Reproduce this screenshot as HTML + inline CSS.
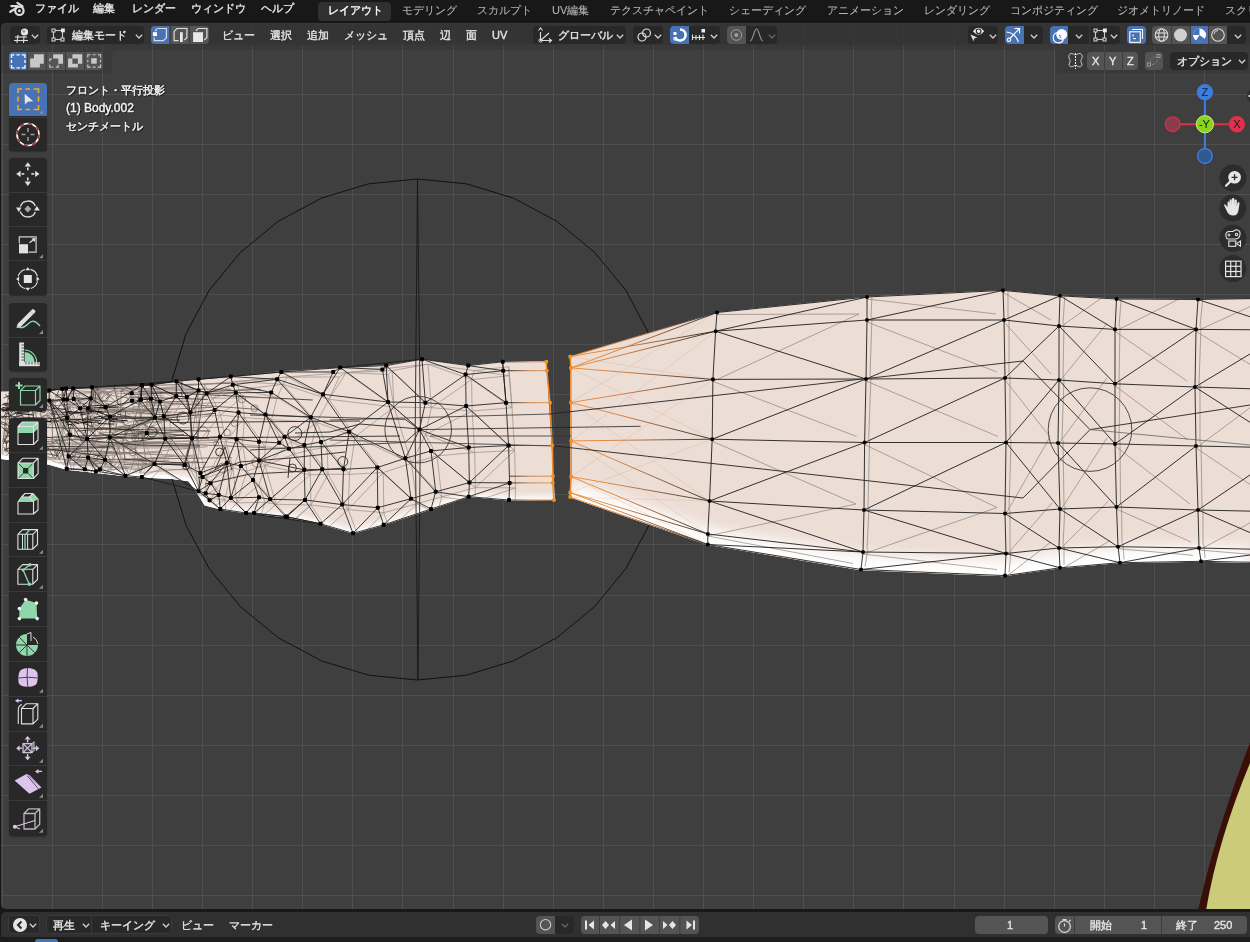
<!DOCTYPE html><html><head><meta charset="utf-8"><style>
html,body{margin:0;padding:0;}
body{width:1250px;height:942px;overflow:hidden;position:relative;background:#181818;font-family:"Liberation Sans", sans-serif;}
svg{position:absolute;left:0;top:0;overflow:visible}
</style></head><body>
<div style="position:absolute;left:1px;top:23px;width:1249px;height:886px;background:#3f3f3f;border-radius:5px 0 0 5px;"></div>
<svg width="1250" height="942" style="left:0;top:0"><defs><clipPath id="vp"><path d="M6,23 H1250 V909 H6 Q1,909 1,904 V28 Q1,23 6,23 Z"/></clipPath></defs><g clip-path="url(#vp)"><rect x="2" y="23" width="1" height="886" fill="#4f4f4f"/><rect x="52" y="23" width="1" height="886" fill="#4f4f4f"/><rect x="102" y="23" width="1" height="886" fill="#4f4f4f"/><rect x="152" y="23" width="1" height="886" fill="#4f4f4f"/><rect x="202" y="23" width="1" height="886" fill="#4f4f4f"/><rect x="252" y="23" width="1" height="886" fill="#4f4f4f"/><rect x="302" y="23" width="1" height="886" fill="#4f4f4f"/><rect x="352" y="23" width="1" height="886" fill="#4f4f4f"/><rect x="402" y="23" width="1" height="886" fill="#4f4f4f"/><rect x="453" y="23" width="1" height="886" fill="#4f4f4f"/><rect x="503" y="23" width="1" height="886" fill="#4f4f4f"/><rect x="553" y="23" width="1" height="886" fill="#4f4f4f"/><rect x="603" y="23" width="1" height="886" fill="#4f4f4f"/><rect x="653" y="23" width="1" height="886" fill="#4f4f4f"/><rect x="703" y="23" width="1" height="886" fill="#4f4f4f"/><rect x="753" y="23" width="1" height="886" fill="#4f4f4f"/><rect x="803" y="23" width="1" height="886" fill="#4f4f4f"/><rect x="853" y="23" width="1" height="886" fill="#4f4f4f"/><rect x="903" y="23" width="1" height="886" fill="#4f4f4f"/><rect x="954" y="23" width="1" height="886" fill="#4f4f4f"/><rect x="1004" y="23" width="1" height="886" fill="#4f4f4f"/><rect x="1054" y="23" width="1" height="886" fill="#4f4f4f"/><rect x="1104" y="23" width="1" height="886" fill="#4f4f4f"/><rect x="1154" y="23" width="1" height="886" fill="#4f4f4f"/><rect x="1204" y="23" width="1" height="886" fill="#4f4f4f"/><rect x="1254" y="23" width="1" height="886" fill="#4f4f4f"/><rect x="1" y="44" width="1249" height="1" fill="#4f4f4f"/><rect x="1" y="94" width="1249" height="1" fill="#4f4f4f"/><rect x="1" y="144" width="1249" height="1" fill="#4f4f4f"/><rect x="1" y="194" width="1249" height="1" fill="#4f4f4f"/><rect x="1" y="244" width="1249" height="1" fill="#4f4f4f"/><rect x="1" y="294" width="1249" height="1" fill="#4f4f4f"/><rect x="1" y="344" width="1249" height="1" fill="#4f4f4f"/><rect x="1" y="394" width="1249" height="1" fill="#4f4f4f"/><rect x="1" y="444" width="1249" height="1" fill="#4f4f4f"/><rect x="1" y="494" width="1249" height="1" fill="#4f4f4f"/><rect x="1" y="544" width="1249" height="1" fill="#4f4f4f"/><rect x="1" y="595" width="1249" height="1" fill="#4f4f4f"/><rect x="1" y="645" width="1249" height="1" fill="#4f4f4f"/><rect x="1" y="695" width="1249" height="1" fill="#4f4f4f"/><rect x="1" y="745" width="1249" height="1" fill="#4f4f4f"/><rect x="1" y="795" width="1249" height="1" fill="#4f4f4f"/><rect x="1" y="845" width="1249" height="1" fill="#4f4f4f"/><rect x="1" y="895" width="1249" height="1" fill="#4f4f4f"/><polygon points="417.5,179.0 368.6,183.8 321.6,198.1 278.3,221.2 240.4,252.4 209.2,290.3 186.1,333.6 171.8,380.6 167.0,429.5 171.8,478.4 186.1,525.4 209.2,568.7 240.4,606.6 278.3,637.8 321.6,660.9 368.6,675.2 417.5,680.0 466.4,675.2 513.4,660.9 556.7,637.8 594.6,606.6 625.8,568.7 648.9,525.4 663.2,478.4 668.0,429.5 663.2,380.6 648.9,333.6 625.8,290.3 594.6,252.4 556.7,221.2 513.4,198.1 466.4,183.8" fill="none" stroke="#111" stroke-width="1"/><polyline points="417.5,179 415.2,430 417.9,680 420.4,430 417.5,179" fill="none" stroke="#151515" stroke-width="0.85"/><defs><linearGradient id="wl" x1="0" y1="0" x2="0" y2="1"><stop offset="0" stop-color="#ebdfd9"/><stop offset="0.78" stop-color="#ebdfd9"/><stop offset="0.92" stop-color="#f8f4f2"/><stop offset="1" stop-color="#ffffff"/></linearGradient><linearGradient id="wr" gradientUnits="userSpaceOnUse" x1="0" y1="290" x2="0" y2="576"><stop offset="0" stop-color="#ebdfd9"/><stop offset="0.78" stop-color="#ebdfd9"/><stop offset="0.86" stop-color="#f6f0ed"/><stop offset="0.95" stop-color="#ffffff"/></linearGradient><linearGradient id="og" gradientUnits="userSpaceOnUse" x1="571" y1="0" x2="712" y2="0"><stop offset="0" stop-color="#f08a2a"/><stop offset="0.35" stop-color="#d27a3a"/><stop offset="1" stop-color="#222"/></linearGradient><linearGradient id="og2" gradientUnits="userSpaceOnUse" x1="509" y1="0" x2="552" y2="0"><stop offset="0" stop-color="#222"/><stop offset="0.5" stop-color="#c87a40"/><stop offset="1" stop-color="#f08a2a"/></linearGradient></defs><polygon points="0,391.6 48.3,390.4 92,387.2 141.8,385.3 176.3,381.3 198.5,379.3 230.8,376.2 281.2,371.2 340.2,367.6 386.2,365 422,359.2 468.2,365.3 502.7,361.4 546.3,361 555,500 509,500.5 468.7,497 431,509.5 383.7,525.3 353,533.8 320.5,524.3 285.6,517.2 246,513.5 220.7,509.6 204.6,505.6 194.5,489 188.4,481.2 172.3,479.1 141.8,477.5 125.5,476.2 66.7,469.8 48.3,464.5 0,459" fill="#ecddd5"/><polygon points="570.2,356.6 717,312.2 867.5,296.6 1002.8,290 1060.5,295.4 1116.6,298.5 1198,299 1250,298.5 1250,563 1201,561.8 1118,563.2 1060.5,568.3 1004.5,576.2 860.7,570.2 707.8,545 570.2,497.5" fill="#ecddd5"/><defs><clipPath id="cl"><polygon points="0,391.6 48.3,390.4 92,387.2 141.8,385.3 176.3,381.3 198.5,379.3 230.8,376.2 281.2,371.2 340.2,367.6 386.2,365 422,359.2 468.2,365.3 502.7,361.4 546.3,361 555,500 509,500.5 468.7,497 431,509.5 383.7,525.3 353,533.8 320.5,524.3 285.6,517.2 246,513.5 220.7,509.6 204.6,505.6 194.5,489 188.4,481.2 172.3,479.1 141.8,477.5 125.5,476.2 66.7,469.8 48.3,464.5 0,459"/></clipPath><clipPath id="cr"><polygon points="570.2,356.6 717,312.2 867.5,296.6 1002.8,290 1060.5,295.4 1116.6,298.5 1198,299 1250,298.5 1250,563 1201,561.8 1118,563.2 1060.5,568.3 1004.5,576.2 860.7,570.2 707.8,545 570.2,497.5"/></clipPath><filter id="bl" x="-10%" y="-50%" width="120%" height="200%"><feGaussianBlur stdDeviation="3"/></filter><filter id="bl2" x="-10%" y="-50%" width="120%" height="200%"><feGaussianBlur stdDeviation="7"/></filter></defs><g clip-path="url(#cr)"><polyline points="570.2,494.5 707.8,542 860.7,567.2 1004.5,573.2 1060.5,565.3 1118,560.2 1201,558.8 1250,560" fill="none" stroke="#fff" stroke-width="26" filter="url(#bl2)"/></g><g clip-path="url(#cl)"><line x1="100.7" y1="399.3" x2="107.3" y2="394.0" stroke="#7d746f" stroke-width="0.7"/><line x1="121.0" y1="462.8" x2="111.8" y2="462.6" stroke="#b0a6a1" stroke-width="0.7"/><line x1="107.4" y1="419.7" x2="110.0" y2="416.5" stroke="#9c928d" stroke-width="0.7"/><line x1="46.5" y1="404.9" x2="49.2" y2="400.6" stroke="#b0a6a1" stroke-width="0.7"/><line x1="101.0" y1="462.6" x2="105.0" y2="459.8" stroke="#9c928d" stroke-width="0.7"/><line x1="13.3" y1="459.3" x2="2.0" y2="454.1" stroke="#b0a6a1" stroke-width="0.7"/><line x1="28.1" y1="424.9" x2="28.7" y2="414.9" stroke="#b0a6a1" stroke-width="0.7"/><line x1="90.7" y1="398.6" x2="88.1" y2="408.2" stroke="#9c928d" stroke-width="0.7"/><line x1="113.7" y1="439.6" x2="124.7" y2="437.9" stroke="#b0a6a1" stroke-width="0.7"/><line x1="125.0" y1="425.2" x2="117.4" y2="419.7" stroke="#9c928d" stroke-width="0.7"/><line x1="121.1" y1="444.3" x2="118.9" y2="446.8" stroke="#9c928d" stroke-width="0.7"/><line x1="76.1" y1="420.3" x2="88.0" y2="417.9" stroke="#7d746f" stroke-width="0.7"/><line x1="93.9" y1="390.2" x2="92.2" y2="388.2" stroke="#b0a6a1" stroke-width="0.7"/><line x1="78.5" y1="453.7" x2="74.4" y2="450.1" stroke="#b0a6a1" stroke-width="0.7"/><line x1="45.1" y1="419.5" x2="43.4" y2="416.1" stroke="#b0a6a1" stroke-width="0.7"/><line x1="49.2" y1="390.4" x2="49.2" y2="400.6" stroke="#9c928d" stroke-width="0.7"/><line x1="116.1" y1="388.2" x2="119.8" y2="387.4" stroke="#9c928d" stroke-width="0.7"/><line x1="141.8" y1="385.3" x2="151.7" y2="384.7" stroke="#5c5450" stroke-width="0.7"/><line x1="7.5" y1="409.5" x2="12.0" y2="400.8" stroke="#9c928d" stroke-width="0.7"/><line x1="38.9" y1="406.0" x2="35.6" y2="412.3" stroke="#9c928d" stroke-width="0.7"/><line x1="80.2" y1="460.8" x2="66.7" y2="468.7" stroke="#5c5450" stroke-width="0.7"/><line x1="96.0" y1="471.2" x2="100.0" y2="469.3" stroke="#9c928d" stroke-width="0.7"/><line x1="129.1" y1="474.7" x2="138.6" y2="468.3" stroke="#5c5450" stroke-width="0.7"/><line x1="94.1" y1="427.8" x2="101.9" y2="417.1" stroke="#b0a6a1" stroke-width="0.7"/><line x1="7.5" y1="409.5" x2="9.2" y2="414.5" stroke="#5c5450" stroke-width="0.7"/><line x1="134.5" y1="419.5" x2="120.6" y2="406.4" stroke="#9c928d" stroke-width="0.7"/><line x1="3.0" y1="441.9" x2="15.5" y2="439.2" stroke="#5c5450" stroke-width="0.7"/><line x1="55.5" y1="440.8" x2="56.0" y2="440.8" stroke="#7d746f" stroke-width="0.7"/><line x1="12.0" y1="400.8" x2="13.8" y2="393.3" stroke="#5c5450" stroke-width="0.7"/><line x1="38.9" y1="406.0" x2="36.3" y2="400.9" stroke="#b0a6a1" stroke-width="0.7"/><line x1="120.6" y1="406.4" x2="116.1" y2="388.2" stroke="#b0a6a1" stroke-width="0.7"/><line x1="99.3" y1="467.4" x2="101.0" y2="462.6" stroke="#9c928d" stroke-width="0.7"/><line x1="12.9" y1="431.2" x2="18.6" y2="436.2" stroke="#9c928d" stroke-width="0.7"/><line x1="102.3" y1="471.3" x2="100.0" y2="469.3" stroke="#5c5450" stroke-width="0.7"/><line x1="131.8" y1="393.2" x2="141.8" y2="385.3" stroke="#9c928d" stroke-width="0.7"/><line x1="113.7" y1="439.6" x2="106.0" y2="453.4" stroke="#5c5450" stroke-width="0.7"/><line x1="101.9" y1="417.1" x2="105.6" y2="407.2" stroke="#b0a6a1" stroke-width="0.7"/><line x1="130.9" y1="388.2" x2="121.5" y2="388.2" stroke="#9c928d" stroke-width="0.7"/><line x1="154.5" y1="464.0" x2="198.5" y2="491.2" stroke="#b0a6a1" stroke-width="0.7"/><line x1="138.6" y1="468.3" x2="134.7" y2="458.3" stroke="#b0a6a1" stroke-width="0.7"/><line x1="107.8" y1="466.6" x2="111.8" y2="462.6" stroke="#9c928d" stroke-width="0.7"/><line x1="61.6" y1="398.2" x2="63.6" y2="399.5" stroke="#b0a6a1" stroke-width="0.7"/><line x1="94.3" y1="465.1" x2="101.0" y2="462.6" stroke="#7d746f" stroke-width="0.7"/><line x1="151.0" y1="398.8" x2="160.0" y2="401.5" stroke="#b0a6a1" stroke-width="0.7"/><line x1="52.0" y1="423.2" x2="40.3" y2="433.6" stroke="#7d746f" stroke-width="0.7"/><line x1="83.9" y1="442.3" x2="74.4" y2="450.1" stroke="#b0a6a1" stroke-width="0.7"/><line x1="119.1" y1="409.5" x2="117.4" y2="419.7" stroke="#7d746f" stroke-width="0.7"/><line x1="20.4" y1="404.4" x2="33.8" y2="395.4" stroke="#b0a6a1" stroke-width="0.7"/><line x1="84.6" y1="461.8" x2="84.8" y2="469.3" stroke="#9c928d" stroke-width="0.7"/><line x1="135.0" y1="438.2" x2="142.9" y2="438.4" stroke="#9c928d" stroke-width="0.7"/><line x1="107.4" y1="419.7" x2="113.0" y2="421.0" stroke="#7d746f" stroke-width="0.7"/><line x1="134.5" y1="419.5" x2="125.0" y2="425.2" stroke="#9c928d" stroke-width="0.7"/><line x1="117.4" y1="419.7" x2="115.1" y2="432.1" stroke="#5c5450" stroke-width="0.7"/><line x1="134.5" y1="419.5" x2="120.9" y2="416.5" stroke="#9c928d" stroke-width="0.7"/><line x1="101.0" y1="462.6" x2="88.1" y2="457.6" stroke="#9c928d" stroke-width="0.7"/><line x1="141.8" y1="477.0" x2="154.5" y2="464.0" stroke="#5c5450" stroke-width="0.7"/><line x1="71.6" y1="457.5" x2="68.6" y2="456.6" stroke="#9c928d" stroke-width="0.7"/><line x1="107.1" y1="403.8" x2="107.3" y2="394.0" stroke="#9c928d" stroke-width="0.7"/><line x1="95.2" y1="465.6" x2="101.0" y2="462.6" stroke="#7d746f" stroke-width="0.7"/><line x1="45.1" y1="419.5" x2="48.3" y2="415.4" stroke="#5c5450" stroke-width="0.7"/><line x1="120.2" y1="442.6" x2="118.9" y2="446.8" stroke="#9c928d" stroke-width="0.7"/><line x1="35.6" y1="412.3" x2="28.7" y2="414.9" stroke="#7d746f" stroke-width="0.7"/><line x1="61.6" y1="398.2" x2="66.1" y2="388.5" stroke="#5c5450" stroke-width="0.7"/><line x1="110.1" y1="437.0" x2="109.8" y2="437.5" stroke="#9c928d" stroke-width="0.7"/><line x1="141.8" y1="385.3" x2="142.0" y2="385.3" stroke="#b0a6a1" stroke-width="0.7"/><line x1="55.5" y1="440.8" x2="55.4" y2="440.0" stroke="#7d746f" stroke-width="0.7"/><line x1="48.3" y1="415.4" x2="55.1" y2="421.3" stroke="#7d746f" stroke-width="0.7"/><line x1="87.6" y1="469.0" x2="96.0" y2="471.2" stroke="#7d746f" stroke-width="0.7"/><line x1="138.1" y1="398.7" x2="141.8" y2="385.3" stroke="#7d746f" stroke-width="0.7"/><line x1="163.8" y1="416.2" x2="192.0" y2="438.2" stroke="#5c5450" stroke-width="0.7"/><line x1="132.7" y1="426.4" x2="140.5" y2="419.2" stroke="#5c5450" stroke-width="0.7"/><line x1="144.8" y1="425.0" x2="146.7" y2="433.0" stroke="#7d746f" stroke-width="0.7"/><line x1="62.3" y1="438.5" x2="70.0" y2="434.7" stroke="#5c5450" stroke-width="0.7"/><line x1="59.2" y1="459.3" x2="63.9" y2="466.7" stroke="#b0a6a1" stroke-width="0.7"/><line x1="79.4" y1="401.9" x2="88.1" y2="408.2" stroke="#5c5450" stroke-width="0.7"/><line x1="91.8" y1="416.1" x2="88.0" y2="417.9" stroke="#7d746f" stroke-width="0.7"/><line x1="165.2" y1="438.8" x2="184.8" y2="465.0" stroke="#7d746f" stroke-width="0.7"/><line x1="37.7" y1="426.9" x2="28.1" y2="424.9" stroke="#5c5450" stroke-width="0.7"/><line x1="28.1" y1="424.9" x2="19.5" y2="411.4" stroke="#5c5450" stroke-width="0.7"/><line x1="146.7" y1="433.0" x2="165.2" y2="438.8" stroke="#b0a6a1" stroke-width="0.7"/><line x1="131.8" y1="393.2" x2="132.1" y2="400.8" stroke="#b0a6a1" stroke-width="0.7"/><line x1="52.6" y1="439.0" x2="55.4" y2="440.0" stroke="#b0a6a1" stroke-width="0.7"/><line x1="129.8" y1="428.4" x2="135.0" y2="438.2" stroke="#7d746f" stroke-width="0.7"/><line x1="76.1" y1="420.3" x2="63.4" y2="428.5" stroke="#9c928d" stroke-width="0.7"/><line x1="13.3" y1="459.3" x2="66.7" y2="468.7" stroke="#b0a6a1" stroke-width="0.7"/><line x1="52.7" y1="444.8" x2="63.1" y2="449.2" stroke="#b0a6a1" stroke-width="0.7"/><line x1="124.7" y1="437.9" x2="120.2" y2="442.6" stroke="#9c928d" stroke-width="0.7"/><line x1="52.8" y1="402.5" x2="63.6" y2="399.5" stroke="#5c5450" stroke-width="0.7"/><line x1="141.1" y1="431.7" x2="142.9" y2="438.4" stroke="#7d746f" stroke-width="0.7"/><line x1="93.9" y1="390.2" x2="91.6" y2="398.7" stroke="#5c5450" stroke-width="0.7"/><line x1="45.1" y1="419.5" x2="52.0" y2="423.2" stroke="#7d746f" stroke-width="0.7"/><line x1="64.7" y1="451.7" x2="74.4" y2="450.1" stroke="#b0a6a1" stroke-width="0.7"/><line x1="54.6" y1="413.4" x2="55.1" y2="421.3" stroke="#7d746f" stroke-width="0.7"/><line x1="163.8" y1="416.2" x2="165.2" y2="438.8" stroke="#b0a6a1" stroke-width="0.7"/><line x1="3.0" y1="441.9" x2="12.9" y2="431.2" stroke="#5c5450" stroke-width="0.7"/><line x1="125.5" y1="428.8" x2="124.7" y2="437.9" stroke="#7d746f" stroke-width="0.7"/><line x1="54.6" y1="413.4" x2="63.6" y2="399.5" stroke="#5c5450" stroke-width="0.7"/><line x1="79.4" y1="401.9" x2="73.7" y2="399.0" stroke="#5c5450" stroke-width="0.7"/><line x1="36.3" y1="400.9" x2="49.2" y2="400.6" stroke="#b0a6a1" stroke-width="0.7"/><line x1="165.2" y1="438.8" x2="154.5" y2="464.0" stroke="#5c5450" stroke-width="0.7"/><line x1="121.0" y1="462.8" x2="112.3" y2="471.8" stroke="#5c5450" stroke-width="0.7"/><line x1="124.7" y1="437.9" x2="121.1" y2="444.3" stroke="#7d746f" stroke-width="0.7"/><line x1="95.9" y1="398.2" x2="94.8" y2="389.6" stroke="#5c5450" stroke-width="0.7"/><line x1="76.1" y1="420.3" x2="63.0" y2="422.5" stroke="#7d746f" stroke-width="0.7"/><line x1="140.3" y1="400.0" x2="141.0" y2="399.4" stroke="#b0a6a1" stroke-width="0.7"/><line x1="44.1" y1="456.3" x2="25.7" y2="458.4" stroke="#5c5450" stroke-width="0.7"/><line x1="52.7" y1="444.8" x2="56.0" y2="440.8" stroke="#7d746f" stroke-width="0.7"/><line x1="80.1" y1="408.2" x2="88.1" y2="408.2" stroke="#5c5450" stroke-width="0.7"/><line x1="61.6" y1="398.2" x2="62.3" y2="389.1" stroke="#9c928d" stroke-width="0.7"/><line x1="74.4" y1="450.1" x2="70.0" y2="434.7" stroke="#9c928d" stroke-width="0.7"/><line x1="62.3" y1="438.5" x2="74.4" y2="450.1" stroke="#9c928d" stroke-width="0.7"/><line x1="113.7" y1="439.6" x2="120.2" y2="442.6" stroke="#5c5450" stroke-width="0.7"/><line x1="138.1" y1="398.7" x2="132.1" y2="400.8" stroke="#b0a6a1" stroke-width="0.7"/><line x1="18.6" y1="436.2" x2="37.5" y2="441.9" stroke="#7d746f" stroke-width="0.7"/><line x1="3.0" y1="441.9" x2="7.5" y2="409.5" stroke="#7d746f" stroke-width="0.7"/><line x1="163.8" y1="416.2" x2="190.4" y2="412.6" stroke="#9c928d" stroke-width="0.7"/><line x1="55.4" y1="440.0" x2="56.0" y2="440.8" stroke="#5c5450" stroke-width="0.7"/><line x1="20.4" y1="404.4" x2="27.5" y2="410.2" stroke="#b0a6a1" stroke-width="0.7"/><line x1="29.6" y1="422.3" x2="28.7" y2="414.9" stroke="#5c5450" stroke-width="0.7"/><line x1="107.1" y1="403.8" x2="119.1" y2="409.5" stroke="#9c928d" stroke-width="0.7"/><line x1="93.9" y1="390.2" x2="90.7" y2="398.6" stroke="#b0a6a1" stroke-width="0.7"/><line x1="79.4" y1="401.9" x2="80.1" y2="408.2" stroke="#b0a6a1" stroke-width="0.7"/><line x1="131.8" y1="393.2" x2="121.5" y2="388.2" stroke="#5c5450" stroke-width="0.7"/><line x1="121.0" y1="462.8" x2="134.7" y2="458.3" stroke="#9c928d" stroke-width="0.7"/><line x1="95.9" y1="398.2" x2="100.7" y2="399.3" stroke="#7d746f" stroke-width="0.7"/><line x1="165.2" y1="438.8" x2="192.0" y2="438.2" stroke="#7d746f" stroke-width="0.7"/><line x1="149.3" y1="428.2" x2="163.8" y2="416.2" stroke="#9c928d" stroke-width="0.7"/><line x1="85.4" y1="453.1" x2="84.6" y2="461.8" stroke="#b0a6a1" stroke-width="0.7"/><line x1="19.5" y1="411.4" x2="12.0" y2="400.8" stroke="#5c5450" stroke-width="0.7"/><line x1="124.7" y1="437.9" x2="135.5" y2="449.2" stroke="#7d746f" stroke-width="0.7"/><line x1="100.7" y1="390.0" x2="107.3" y2="394.0" stroke="#5c5450" stroke-width="0.7"/><line x1="19.5" y1="411.4" x2="10.7" y2="423.9" stroke="#5c5450" stroke-width="0.7"/><line x1="85.4" y1="453.1" x2="88.1" y2="457.6" stroke="#b0a6a1" stroke-width="0.7"/><line x1="19.5" y1="411.4" x2="9.2" y2="414.5" stroke="#7d746f" stroke-width="0.7"/><line x1="138.6" y1="468.3" x2="146.2" y2="464.3" stroke="#9c928d" stroke-width="0.7"/><line x1="107.1" y1="470.6" x2="102.3" y2="471.3" stroke="#7d746f" stroke-width="0.7"/><line x1="54.6" y1="413.4" x2="64.7" y2="419.0" stroke="#b0a6a1" stroke-width="0.7"/><line x1="176.3" y1="381.3" x2="198.5" y2="390.4" stroke="#5c5450" stroke-width="0.7"/><line x1="113.7" y1="439.6" x2="110.1" y2="437.0" stroke="#9c928d" stroke-width="0.7"/><line x1="46.5" y1="404.9" x2="52.8" y2="402.5" stroke="#5c5450" stroke-width="0.7"/><line x1="59.2" y1="459.3" x2="52.7" y2="444.8" stroke="#5c5450" stroke-width="0.7"/><line x1="95.9" y1="398.2" x2="100.7" y2="390.0" stroke="#b0a6a1" stroke-width="0.7"/><line x1="125.5" y1="475.7" x2="141.8" y2="477.0" stroke="#b0a6a1" stroke-width="0.7"/><line x1="95.9" y1="398.2" x2="94.0" y2="412.3" stroke="#7d746f" stroke-width="0.7"/><line x1="99.4" y1="432.8" x2="110.1" y2="437.0" stroke="#5c5450" stroke-width="0.7"/><line x1="96.6" y1="440.0" x2="99.4" y2="433.3" stroke="#b0a6a1" stroke-width="0.7"/><line x1="135.5" y1="449.2" x2="138.3" y2="459.8" stroke="#7d746f" stroke-width="0.7"/><line x1="78.5" y1="453.7" x2="85.4" y2="453.1" stroke="#9c928d" stroke-width="0.7"/><line x1="125.0" y1="425.2" x2="120.9" y2="416.5" stroke="#5c5450" stroke-width="0.7"/><line x1="64.7" y1="419.0" x2="67.1" y2="417.7" stroke="#7d746f" stroke-width="0.7"/><line x1="100.7" y1="390.0" x2="92.0" y2="387.2" stroke="#7d746f" stroke-width="0.7"/><line x1="135.5" y1="449.2" x2="142.9" y2="438.4" stroke="#7d746f" stroke-width="0.7"/><line x1="111.8" y1="462.6" x2="105.0" y2="459.8" stroke="#9c928d" stroke-width="0.7"/><line x1="48.3" y1="415.4" x2="47.4" y2="413.6" stroke="#9c928d" stroke-width="0.7"/><line x1="61.6" y1="398.2" x2="49.2" y2="390.4" stroke="#b0a6a1" stroke-width="0.7"/><line x1="29.6" y1="422.3" x2="28.1" y2="424.9" stroke="#b0a6a1" stroke-width="0.7"/><line x1="176.3" y1="381.3" x2="186.8" y2="397.0" stroke="#9c928d" stroke-width="0.7"/><line x1="3.0" y1="441.9" x2="2.0" y2="454.1" stroke="#9c928d" stroke-width="0.7"/><line x1="38.9" y1="406.0" x2="43.4" y2="416.1" stroke="#b0a6a1" stroke-width="0.7"/><line x1="96.6" y1="440.0" x2="85.4" y2="453.1" stroke="#9c928d" stroke-width="0.7"/><line x1="63.0" y1="422.5" x2="55.1" y2="421.3" stroke="#9c928d" stroke-width="0.7"/><line x1="25.8" y1="412.2" x2="28.7" y2="414.9" stroke="#9c928d" stroke-width="0.7"/><line x1="131.8" y1="393.2" x2="128.3" y2="399.9" stroke="#9c928d" stroke-width="0.7"/><line x1="79.4" y1="401.9" x2="73.1" y2="388.5" stroke="#5c5450" stroke-width="0.7"/><line x1="92.2" y1="388.2" x2="90.7" y2="398.6" stroke="#5c5450" stroke-width="0.7"/><line x1="43.4" y1="416.1" x2="47.4" y2="413.6" stroke="#5c5450" stroke-width="0.7"/><line x1="95.2" y1="465.6" x2="94.3" y2="465.1" stroke="#7d746f" stroke-width="0.7"/><line x1="104.7" y1="393.6" x2="107.3" y2="394.0" stroke="#b0a6a1" stroke-width="0.7"/><line x1="139.1" y1="404.9" x2="155.0" y2="417.6" stroke="#b0a6a1" stroke-width="0.7"/><line x1="129.8" y1="428.4" x2="132.7" y2="426.4" stroke="#b0a6a1" stroke-width="0.7"/><line x1="50.5" y1="445.1" x2="52.7" y2="444.8" stroke="#5c5450" stroke-width="0.7"/><line x1="138.1" y1="398.7" x2="139.1" y2="404.9" stroke="#5c5450" stroke-width="0.7"/><line x1="115.1" y1="432.1" x2="113.0" y2="421.0" stroke="#b0a6a1" stroke-width="0.7"/><line x1="88.3" y1="411.0" x2="80.1" y2="408.2" stroke="#5c5450" stroke-width="0.7"/><line x1="149.3" y1="428.2" x2="146.7" y2="433.0" stroke="#b0a6a1" stroke-width="0.7"/><line x1="198.5" y1="390.4" x2="192.0" y2="438.2" stroke="#7d746f" stroke-width="0.7"/><line x1="54.6" y1="413.4" x2="47.4" y2="413.6" stroke="#9c928d" stroke-width="0.7"/><line x1="135.7" y1="437.5" x2="135.0" y2="438.2" stroke="#7d746f" stroke-width="0.7"/><line x1="62.3" y1="438.5" x2="63.4" y2="428.5" stroke="#7d746f" stroke-width="0.7"/><line x1="107.8" y1="415.1" x2="107.4" y2="419.7" stroke="#9c928d" stroke-width="0.7"/><line x1="83.9" y1="442.3" x2="70.0" y2="434.7" stroke="#b0a6a1" stroke-width="0.7"/><line x1="113.7" y1="439.6" x2="118.9" y2="446.8" stroke="#9c928d" stroke-width="0.7"/><line x1="107.1" y1="403.8" x2="120.6" y2="406.4" stroke="#b0a6a1" stroke-width="0.7"/><line x1="120.6" y1="406.4" x2="119.1" y2="409.5" stroke="#9c928d" stroke-width="0.7"/><line x1="38.9" y1="406.0" x2="47.4" y2="413.6" stroke="#9c928d" stroke-width="0.7"/><line x1="107.1" y1="470.6" x2="112.3" y2="471.8" stroke="#9c928d" stroke-width="0.7"/><line x1="131.8" y1="393.2" x2="138.1" y2="398.7" stroke="#7d746f" stroke-width="0.7"/><line x1="120.9" y1="416.5" x2="117.4" y2="419.7" stroke="#b0a6a1" stroke-width="0.7"/><line x1="121.0" y1="462.8" x2="118.9" y2="446.8" stroke="#7d746f" stroke-width="0.7"/><line x1="91.6" y1="398.7" x2="90.7" y2="398.6" stroke="#5c5450" stroke-width="0.7"/><line x1="94.0" y1="412.3" x2="88.3" y2="411.0" stroke="#9c928d" stroke-width="0.7"/><line x1="62.3" y1="389.1" x2="66.1" y2="388.5" stroke="#9c928d" stroke-width="0.7"/><line x1="25.7" y1="458.4" x2="15.5" y2="439.2" stroke="#b0a6a1" stroke-width="0.7"/><line x1="35.7" y1="435.2" x2="37.7" y2="426.9" stroke="#7d746f" stroke-width="0.7"/><line x1="44.1" y1="456.3" x2="50.5" y2="445.1" stroke="#7d746f" stroke-width="0.7"/><line x1="146.2" y1="464.3" x2="154.5" y2="464.0" stroke="#7d746f" stroke-width="0.7"/><line x1="96.6" y1="440.0" x2="88.1" y2="457.6" stroke="#5c5450" stroke-width="0.7"/><line x1="106.0" y1="453.4" x2="88.1" y2="457.6" stroke="#9c928d" stroke-width="0.7"/><line x1="54.6" y1="413.4" x2="48.3" y2="415.4" stroke="#7d746f" stroke-width="0.7"/><line x1="48.3" y1="415.4" x2="52.0" y2="423.2" stroke="#b0a6a1" stroke-width="0.7"/><line x1="69.1" y1="432.9" x2="62.3" y2="438.5" stroke="#7d746f" stroke-width="0.7"/><line x1="138.6" y1="468.3" x2="141.8" y2="477.0" stroke="#5c5450" stroke-width="0.7"/><line x1="66.7" y1="468.7" x2="96.0" y2="471.2" stroke="#5c5450" stroke-width="0.7"/><line x1="56.0" y1="440.8" x2="63.1" y2="449.2" stroke="#5c5450" stroke-width="0.7"/><line x1="63.0" y1="422.5" x2="64.7" y2="419.0" stroke="#5c5450" stroke-width="0.7"/><line x1="52.6" y1="439.0" x2="52.5" y2="423.3" stroke="#9c928d" stroke-width="0.7"/><line x1="69.1" y1="407.0" x2="67.1" y2="417.7" stroke="#7d746f" stroke-width="0.7"/><line x1="125.5" y1="428.8" x2="129.8" y2="428.4" stroke="#7d746f" stroke-width="0.7"/><line x1="129.1" y1="474.7" x2="134.7" y2="458.3" stroke="#7d746f" stroke-width="0.7"/><line x1="94.0" y1="412.3" x2="101.9" y2="417.1" stroke="#5c5450" stroke-width="0.7"/><line x1="142.0" y1="385.3" x2="151.0" y2="398.8" stroke="#9c928d" stroke-width="0.7"/><line x1="107.8" y1="466.6" x2="105.0" y2="459.8" stroke="#7d746f" stroke-width="0.7"/><line x1="67.0" y1="399.5" x2="73.7" y2="399.0" stroke="#9c928d" stroke-width="0.7"/><line x1="119.8" y1="387.4" x2="141.8" y2="385.3" stroke="#b0a6a1" stroke-width="0.7"/><line x1="71.6" y1="457.5" x2="63.9" y2="466.7" stroke="#9c928d" stroke-width="0.7"/><line x1="85.4" y1="453.1" x2="80.4" y2="449.3" stroke="#b0a6a1" stroke-width="0.7"/><line x1="129.8" y1="428.4" x2="124.7" y2="437.9" stroke="#5c5450" stroke-width="0.7"/><line x1="151.7" y1="384.7" x2="160.0" y2="401.5" stroke="#7d746f" stroke-width="0.7"/><line x1="198.5" y1="379.3" x2="198.5" y2="390.4" stroke="#7d746f" stroke-width="0.7"/><line x1="61.6" y1="398.2" x2="52.8" y2="402.5" stroke="#b0a6a1" stroke-width="0.7"/><line x1="49.2" y1="390.4" x2="62.3" y2="389.1" stroke="#7d746f" stroke-width="0.7"/><line x1="25.7" y1="458.4" x2="37.5" y2="441.9" stroke="#9c928d" stroke-width="0.7"/><line x1="74.4" y1="450.1" x2="80.4" y2="449.3" stroke="#9c928d" stroke-width="0.7"/><line x1="125.0" y1="425.2" x2="115.1" y2="432.1" stroke="#b0a6a1" stroke-width="0.7"/><line x1="160.0" y1="401.5" x2="155.0" y2="417.6" stroke="#b0a6a1" stroke-width="0.7"/><line x1="63.0" y1="422.5" x2="63.4" y2="428.5" stroke="#b0a6a1" stroke-width="0.7"/><line x1="138.3" y1="459.8" x2="134.7" y2="458.3" stroke="#7d746f" stroke-width="0.7"/><line x1="2.0" y1="454.1" x2="15.5" y2="439.2" stroke="#b0a6a1" stroke-width="0.7"/><line x1="120.9" y1="416.5" x2="119.1" y2="409.5" stroke="#9c928d" stroke-width="0.7"/><line x1="96.6" y1="440.0" x2="106.0" y2="453.4" stroke="#b0a6a1" stroke-width="0.7"/><line x1="13.8" y1="393.3" x2="66.1" y2="388.5" stroke="#5c5450" stroke-width="0.7"/><line x1="94.1" y1="427.8" x2="91.8" y2="416.1" stroke="#7d746f" stroke-width="0.7"/><line x1="63.6" y1="399.5" x2="67.0" y2="399.5" stroke="#b0a6a1" stroke-width="0.7"/><line x1="94.1" y1="427.8" x2="107.4" y2="419.7" stroke="#b0a6a1" stroke-width="0.7"/><line x1="134.7" y1="458.3" x2="118.9" y2="446.8" stroke="#b0a6a1" stroke-width="0.7"/><line x1="25.7" y1="458.4" x2="18.6" y2="436.2" stroke="#b0a6a1" stroke-width="0.7"/><line x1="142.9" y1="438.4" x2="154.5" y2="464.0" stroke="#9c928d" stroke-width="0.7"/><line x1="100.7" y1="390.0" x2="116.1" y2="388.2" stroke="#b0a6a1" stroke-width="0.7"/><line x1="94.0" y1="412.3" x2="88.1" y2="408.2" stroke="#7d746f" stroke-width="0.7"/><line x1="73.1" y1="388.5" x2="90.7" y2="398.6" stroke="#5c5450" stroke-width="0.7"/><line x1="59.2" y1="459.3" x2="64.7" y2="451.7" stroke="#5c5450" stroke-width="0.7"/><line x1="128.3" y1="399.9" x2="132.1" y2="400.8" stroke="#5c5450" stroke-width="0.7"/><line x1="76.1" y1="420.3" x2="67.1" y2="417.7" stroke="#b0a6a1" stroke-width="0.7"/><line x1="160.0" y1="401.5" x2="163.8" y2="416.2" stroke="#5c5450" stroke-width="0.7"/><line x1="130.9" y1="388.2" x2="119.8" y2="387.4" stroke="#b0a6a1" stroke-width="0.7"/><line x1="176.3" y1="396.0" x2="190.4" y2="412.6" stroke="#9c928d" stroke-width="0.7"/><line x1="38.9" y1="406.0" x2="27.5" y2="410.2" stroke="#7d746f" stroke-width="0.7"/><line x1="142.0" y1="385.3" x2="141.0" y2="399.4" stroke="#9c928d" stroke-width="0.7"/><line x1="102.3" y1="471.3" x2="96.0" y2="471.2" stroke="#5c5450" stroke-width="0.7"/><line x1="151.7" y1="384.7" x2="151.0" y2="398.8" stroke="#5c5450" stroke-width="0.7"/><line x1="28.1" y1="424.9" x2="10.7" y2="423.9" stroke="#9c928d" stroke-width="0.7"/><line x1="78.5" y1="453.7" x2="80.4" y2="449.3" stroke="#b0a6a1" stroke-width="0.7"/><line x1="154.5" y1="464.0" x2="184.8" y2="465.0" stroke="#9c928d" stroke-width="0.7"/><line x1="87.6" y1="469.0" x2="94.3" y2="465.1" stroke="#9c928d" stroke-width="0.7"/><line x1="35.7" y1="435.2" x2="39.3" y2="427.6" stroke="#9c928d" stroke-width="0.7"/><line x1="135.7" y1="437.5" x2="132.7" y2="426.4" stroke="#7d746f" stroke-width="0.7"/><line x1="29.6" y1="422.3" x2="35.6" y2="412.3" stroke="#9c928d" stroke-width="0.7"/><line x1="76.1" y1="420.3" x2="87.1" y2="438.7" stroke="#b0a6a1" stroke-width="0.7"/><line x1="176.3" y1="396.0" x2="163.8" y2="416.2" stroke="#9c928d" stroke-width="0.7"/><line x1="107.8" y1="466.6" x2="99.3" y2="467.4" stroke="#7d746f" stroke-width="0.7"/><line x1="88.9" y1="414.1" x2="88.0" y2="417.9" stroke="#9c928d" stroke-width="0.7"/><line x1="59.2" y1="459.3" x2="50.5" y2="445.1" stroke="#7d746f" stroke-width="0.7"/><line x1="69.1" y1="407.0" x2="73.7" y2="399.0" stroke="#9c928d" stroke-width="0.7"/><line x1="55.5" y1="440.8" x2="52.7" y2="444.8" stroke="#b0a6a1" stroke-width="0.7"/><line x1="40.3" y1="433.6" x2="39.3" y2="427.6" stroke="#b0a6a1" stroke-width="0.7"/><line x1="46.5" y1="404.9" x2="36.3" y2="400.9" stroke="#9c928d" stroke-width="0.7"/><line x1="94.1" y1="427.8" x2="99.4" y2="432.8" stroke="#7d746f" stroke-width="0.7"/><line x1="85.4" y1="453.1" x2="80.2" y2="460.8" stroke="#7d746f" stroke-width="0.7"/><line x1="63.9" y1="466.7" x2="68.6" y2="456.6" stroke="#b0a6a1" stroke-width="0.7"/><line x1="94.1" y1="427.8" x2="99.4" y2="433.3" stroke="#b0a6a1" stroke-width="0.7"/><line x1="117.4" y1="419.7" x2="110.0" y2="416.5" stroke="#5c5450" stroke-width="0.7"/><line x1="13.3" y1="459.3" x2="25.7" y2="458.4" stroke="#b0a6a1" stroke-width="0.7"/><line x1="33.8" y1="395.4" x2="49.2" y2="390.4" stroke="#7d746f" stroke-width="0.7"/><line x1="128.3" y1="399.9" x2="121.5" y2="388.2" stroke="#7d746f" stroke-width="0.7"/><line x1="99.3" y1="467.4" x2="100.0" y2="469.3" stroke="#9c928d" stroke-width="0.7"/><line x1="80.2" y1="460.8" x2="84.6" y2="461.8" stroke="#b0a6a1" stroke-width="0.7"/><line x1="73.1" y1="388.5" x2="73.7" y2="399.0" stroke="#7d746f" stroke-width="0.7"/><line x1="44.1" y1="456.3" x2="37.5" y2="441.9" stroke="#b0a6a1" stroke-width="0.7"/><line x1="52.6" y1="439.0" x2="52.7" y2="444.8" stroke="#b0a6a1" stroke-width="0.7"/><line x1="83.9" y1="442.3" x2="80.4" y2="449.3" stroke="#7d746f" stroke-width="0.7"/><line x1="88.9" y1="414.1" x2="88.3" y2="411.0" stroke="#9c928d" stroke-width="0.7"/><line x1="87.6" y1="469.0" x2="84.8" y2="469.3" stroke="#9c928d" stroke-width="0.7"/><line x1="192.0" y1="438.2" x2="198.5" y2="491.2" stroke="#7d746f" stroke-width="0.7"/><line x1="64.7" y1="451.7" x2="68.6" y2="456.6" stroke="#b0a6a1" stroke-width="0.7"/><line x1="107.8" y1="415.1" x2="110.0" y2="416.5" stroke="#b0a6a1" stroke-width="0.7"/><line x1="20.4" y1="404.4" x2="25.8" y2="412.2" stroke="#9c928d" stroke-width="0.7"/><line x1="138.1" y1="398.7" x2="141.0" y2="399.4" stroke="#9c928d" stroke-width="0.7"/><line x1="134.5" y1="419.5" x2="132.7" y2="426.4" stroke="#5c5450" stroke-width="0.7"/><line x1="119.1" y1="409.5" x2="110.0" y2="416.5" stroke="#7d746f" stroke-width="0.7"/><line x1="139.1" y1="404.9" x2="140.5" y2="419.2" stroke="#5c5450" stroke-width="0.7"/><line x1="142.0" y1="385.3" x2="151.7" y2="384.7" stroke="#7d746f" stroke-width="0.7"/><line x1="141.1" y1="431.7" x2="146.7" y2="433.0" stroke="#7d746f" stroke-width="0.7"/><line x1="146.2" y1="464.3" x2="142.9" y2="438.4" stroke="#5c5450" stroke-width="0.7"/><line x1="139.1" y1="404.9" x2="132.1" y2="400.8" stroke="#5c5450" stroke-width="0.7"/><line x1="33.8" y1="395.4" x2="36.3" y2="400.9" stroke="#b0a6a1" stroke-width="0.7"/><line x1="120.6" y1="406.4" x2="107.3" y2="394.0" stroke="#5c5450" stroke-width="0.7"/><line x1="59.2" y1="459.3" x2="68.6" y2="456.6" stroke="#b0a6a1" stroke-width="0.7"/><line x1="106.0" y1="453.4" x2="101.0" y2="462.6" stroke="#9c928d" stroke-width="0.7"/><line x1="71.6" y1="457.5" x2="66.7" y2="468.7" stroke="#5c5450" stroke-width="0.7"/><line x1="52.8" y1="402.5" x2="49.2" y2="400.6" stroke="#7d746f" stroke-width="0.7"/><line x1="37.7" y1="426.9" x2="39.3" y2="427.6" stroke="#5c5450" stroke-width="0.7"/><line x1="76.1" y1="420.3" x2="69.1" y2="407.0" stroke="#5c5450" stroke-width="0.7"/><line x1="116.1" y1="388.2" x2="107.3" y2="394.0" stroke="#5c5450" stroke-width="0.7"/><line x1="73.1" y1="388.5" x2="92.0" y2="387.2" stroke="#7d746f" stroke-width="0.7"/><line x1="94.3" y1="465.1" x2="84.6" y2="461.8" stroke="#7d746f" stroke-width="0.7"/><line x1="52.6" y1="439.0" x2="63.4" y2="428.5" stroke="#b0a6a1" stroke-width="0.7"/><line x1="66.1" y1="388.5" x2="67.0" y2="399.5" stroke="#7d746f" stroke-width="0.7"/><line x1="35.7" y1="435.2" x2="37.5" y2="441.9" stroke="#7d746f" stroke-width="0.7"/><line x1="129.1" y1="474.7" x2="121.0" y2="462.8" stroke="#7d746f" stroke-width="0.7"/><line x1="94.3" y1="465.1" x2="88.1" y2="457.6" stroke="#7d746f" stroke-width="0.7"/><line x1="176.3" y1="396.0" x2="186.8" y2="397.0" stroke="#7d746f" stroke-width="0.7"/><line x1="99.4" y1="433.3" x2="110.1" y2="437.0" stroke="#7d746f" stroke-width="0.7"/><line x1="54.6" y1="413.4" x2="67.1" y2="417.7" stroke="#9c928d" stroke-width="0.7"/><line x1="107.8" y1="415.1" x2="105.6" y2="407.2" stroke="#7d746f" stroke-width="0.7"/><line x1="94.0" y1="412.3" x2="100.7" y2="399.3" stroke="#b0a6a1" stroke-width="0.7"/><line x1="113.7" y1="439.6" x2="109.8" y2="437.5" stroke="#7d746f" stroke-width="0.7"/><line x1="119.1" y1="409.5" x2="105.6" y2="407.2" stroke="#9c928d" stroke-width="0.7"/><line x1="102.3" y1="471.3" x2="112.3" y2="471.8" stroke="#5c5450" stroke-width="0.7"/><line x1="144.8" y1="425.0" x2="132.7" y2="426.4" stroke="#9c928d" stroke-width="0.7"/><line x1="117.4" y1="419.7" x2="113.0" y2="421.0" stroke="#b0a6a1" stroke-width="0.7"/><line x1="37.7" y1="426.9" x2="43.4" y2="416.1" stroke="#5c5450" stroke-width="0.7"/><line x1="120.6" y1="406.4" x2="132.1" y2="400.8" stroke="#b0a6a1" stroke-width="0.7"/><line x1="69.1" y1="432.9" x2="70.0" y2="434.7" stroke="#5c5450" stroke-width="0.7"/><line x1="27.5" y1="410.2" x2="36.3" y2="400.9" stroke="#7d746f" stroke-width="0.7"/><line x1="121.0" y1="462.8" x2="125.5" y2="475.7" stroke="#b0a6a1" stroke-width="0.7"/><line x1="121.1" y1="444.3" x2="120.2" y2="442.6" stroke="#5c5450" stroke-width="0.7"/><line x1="78.5" y1="453.7" x2="80.2" y2="460.8" stroke="#b0a6a1" stroke-width="0.7"/><line x1="35.7" y1="435.2" x2="40.3" y2="433.6" stroke="#7d746f" stroke-width="0.7"/><line x1="135.7" y1="437.5" x2="141.1" y2="431.7" stroke="#5c5450" stroke-width="0.7"/><line x1="35.7" y1="435.2" x2="18.6" y2="436.2" stroke="#9c928d" stroke-width="0.7"/><line x1="66.1" y1="388.5" x2="73.1" y2="388.5" stroke="#b0a6a1" stroke-width="0.7"/><line x1="59.2" y1="459.3" x2="44.1" y2="456.3" stroke="#7d746f" stroke-width="0.7"/><line x1="70.0" y1="434.7" x2="87.1" y2="438.7" stroke="#b0a6a1" stroke-width="0.7"/><line x1="138.1" y1="398.7" x2="140.3" y2="400.0" stroke="#5c5450" stroke-width="0.7"/><line x1="107.4" y1="419.7" x2="115.1" y2="432.1" stroke="#b0a6a1" stroke-width="0.7"/><line x1="36.3" y1="400.9" x2="49.2" y2="390.4" stroke="#9c928d" stroke-width="0.7"/><line x1="27.5" y1="410.2" x2="25.8" y2="412.2" stroke="#b0a6a1" stroke-width="0.7"/><line x1="100.7" y1="390.0" x2="94.8" y2="389.6" stroke="#5c5450" stroke-width="0.7"/><line x1="63.4" y1="428.5" x2="52.5" y2="423.3" stroke="#9c928d" stroke-width="0.7"/><line x1="27.5" y1="410.2" x2="28.7" y2="414.9" stroke="#5c5450" stroke-width="0.7"/><line x1="63.9" y1="466.7" x2="66.7" y2="468.7" stroke="#b0a6a1" stroke-width="0.7"/><line x1="35.6" y1="412.3" x2="43.4" y2="416.1" stroke="#b0a6a1" stroke-width="0.7"/><line x1="93.9" y1="390.2" x2="95.9" y2="398.2" stroke="#9c928d" stroke-width="0.7"/><line x1="83.9" y1="442.3" x2="85.4" y2="453.1" stroke="#b0a6a1" stroke-width="0.7"/><line x1="95.2" y1="465.6" x2="99.3" y2="467.4" stroke="#b0a6a1" stroke-width="0.7"/><line x1="74.4" y1="450.1" x2="68.6" y2="456.6" stroke="#5c5450" stroke-width="0.7"/><line x1="141.8" y1="385.3" x2="141.0" y2="399.4" stroke="#5c5450" stroke-width="0.7"/><line x1="52.6" y1="439.0" x2="40.3" y2="433.6" stroke="#9c928d" stroke-width="0.7"/><line x1="176.3" y1="381.3" x2="198.5" y2="379.3" stroke="#b0a6a1" stroke-width="0.7"/><line x1="113.7" y1="439.6" x2="115.1" y2="432.1" stroke="#b0a6a1" stroke-width="0.7"/><line x1="3.0" y1="441.9" x2="8.2" y2="395.9" stroke="#7d746f" stroke-width="0.7"/><line x1="135.7" y1="437.5" x2="142.9" y2="438.4" stroke="#9c928d" stroke-width="0.7"/><line x1="100.7" y1="390.0" x2="100.7" y2="399.3" stroke="#9c928d" stroke-width="0.7"/><line x1="20.4" y1="404.4" x2="19.5" y2="411.4" stroke="#7d746f" stroke-width="0.7"/><line x1="84.6" y1="461.8" x2="88.1" y2="457.6" stroke="#b0a6a1" stroke-width="0.7"/><line x1="3.0" y1="441.9" x2="10.7" y2="423.9" stroke="#7d746f" stroke-width="0.7"/><line x1="120.6" y1="406.4" x2="121.5" y2="388.2" stroke="#7d746f" stroke-width="0.7"/><line x1="106.0" y1="453.4" x2="111.8" y2="462.6" stroke="#5c5450" stroke-width="0.7"/><line x1="3.0" y1="441.9" x2="9.2" y2="414.5" stroke="#9c928d" stroke-width="0.7"/><line x1="125.5" y1="428.8" x2="125.0" y2="425.2" stroke="#7d746f" stroke-width="0.7"/><line x1="99.4" y1="432.8" x2="115.1" y2="432.1" stroke="#7d746f" stroke-width="0.7"/><line x1="100.7" y1="390.0" x2="104.7" y2="393.6" stroke="#b0a6a1" stroke-width="0.7"/><line x1="95.9" y1="398.2" x2="91.6" y2="398.7" stroke="#b0a6a1" stroke-width="0.7"/><line x1="129.1" y1="474.7" x2="141.8" y2="477.0" stroke="#5c5450" stroke-width="0.7"/><line x1="121.1" y1="444.3" x2="135.5" y2="449.2" stroke="#5c5450" stroke-width="0.7"/><line x1="135.5" y1="449.2" x2="134.7" y2="458.3" stroke="#7d746f" stroke-width="0.7"/><line x1="141.8" y1="477.0" x2="198.5" y2="491.2" stroke="#7d746f" stroke-width="0.7"/><line x1="138.6" y1="468.3" x2="138.3" y2="459.8" stroke="#9c928d" stroke-width="0.7"/><line x1="52.8" y1="402.5" x2="49.2" y2="390.4" stroke="#b0a6a1" stroke-width="0.7"/><line x1="52.6" y1="439.0" x2="52.0" y2="423.2" stroke="#7d746f" stroke-width="0.7"/><line x1="144.8" y1="425.0" x2="155.0" y2="417.6" stroke="#5c5450" stroke-width="0.7"/><line x1="61.6" y1="398.2" x2="67.0" y2="399.5" stroke="#5c5450" stroke-width="0.7"/><line x1="54.6" y1="413.4" x2="69.1" y2="407.0" stroke="#7d746f" stroke-width="0.7"/><line x1="141.8" y1="385.3" x2="176.3" y2="381.3" stroke="#b0a6a1" stroke-width="0.7"/><line x1="176.3" y1="381.3" x2="176.3" y2="396.0" stroke="#7d746f" stroke-width="0.7"/><line x1="55.4" y1="440.0" x2="63.4" y2="428.5" stroke="#9c928d" stroke-width="0.7"/><line x1="144.8" y1="425.0" x2="141.1" y2="431.7" stroke="#9c928d" stroke-width="0.7"/><line x1="88.9" y1="414.1" x2="80.1" y2="408.2" stroke="#7d746f" stroke-width="0.7"/><line x1="63.0" y1="422.5" x2="67.1" y2="417.7" stroke="#9c928d" stroke-width="0.7"/><line x1="91.6" y1="398.7" x2="88.1" y2="408.2" stroke="#9c928d" stroke-width="0.7"/><line x1="63.4" y1="428.5" x2="55.1" y2="421.3" stroke="#7d746f" stroke-width="0.7"/><line x1="125.0" y1="425.2" x2="132.7" y2="426.4" stroke="#7d746f" stroke-width="0.7"/><line x1="25.7" y1="458.4" x2="66.7" y2="468.7" stroke="#9c928d" stroke-width="0.7"/><line x1="198.5" y1="390.4" x2="190.4" y2="412.6" stroke="#5c5450" stroke-width="0.7"/><line x1="50.5" y1="445.1" x2="37.5" y2="441.9" stroke="#9c928d" stroke-width="0.7"/><line x1="84.8" y1="469.3" x2="96.0" y2="471.2" stroke="#9c928d" stroke-width="0.7"/><line x1="7.5" y1="409.5" x2="8.2" y2="395.9" stroke="#b0a6a1" stroke-width="0.7"/><line x1="120.6" y1="406.4" x2="128.3" y2="399.9" stroke="#5c5450" stroke-width="0.7"/><line x1="107.8" y1="466.6" x2="100.0" y2="469.3" stroke="#9c928d" stroke-width="0.7"/><line x1="92.2" y1="388.2" x2="92.0" y2="387.2" stroke="#b0a6a1" stroke-width="0.7"/><line x1="71.6" y1="457.5" x2="74.4" y2="450.1" stroke="#9c928d" stroke-width="0.7"/><line x1="55.1" y1="421.3" x2="52.5" y2="423.3" stroke="#7d746f" stroke-width="0.7"/><line x1="94.0" y1="412.3" x2="91.8" y2="416.1" stroke="#7d746f" stroke-width="0.7"/><line x1="140.5" y1="419.2" x2="155.0" y2="417.6" stroke="#7d746f" stroke-width="0.7"/><line x1="129.1" y1="474.7" x2="125.5" y2="475.7" stroke="#7d746f" stroke-width="0.7"/><line x1="35.7" y1="435.2" x2="28.1" y2="424.9" stroke="#7d746f" stroke-width="0.7"/><line x1="8.2" y1="395.9" x2="13.8" y2="393.3" stroke="#9c928d" stroke-width="0.7"/><line x1="50.5" y1="445.1" x2="40.3" y2="433.6" stroke="#5c5450" stroke-width="0.7"/><line x1="124.7" y1="437.9" x2="135.0" y2="438.2" stroke="#7d746f" stroke-width="0.7"/><line x1="141.0" y1="399.4" x2="151.0" y2="398.8" stroke="#7d746f" stroke-width="0.7"/><line x1="94.1" y1="427.8" x2="87.1" y2="438.7" stroke="#b0a6a1" stroke-width="0.7"/><line x1="78.5" y1="453.7" x2="71.6" y2="457.5" stroke="#b0a6a1" stroke-width="0.7"/><line x1="52.6" y1="439.0" x2="50.5" y2="445.1" stroke="#9c928d" stroke-width="0.7"/><line x1="100.7" y1="399.3" x2="104.7" y2="393.6" stroke="#7d746f" stroke-width="0.7"/><line x1="87.6" y1="469.0" x2="84.6" y2="461.8" stroke="#b0a6a1" stroke-width="0.7"/><line x1="92.2" y1="388.2" x2="94.8" y2="389.6" stroke="#5c5450" stroke-width="0.7"/><line x1="64.7" y1="451.7" x2="63.1" y2="449.2" stroke="#b0a6a1" stroke-width="0.7"/><line x1="66.7" y1="468.7" x2="84.8" y2="469.3" stroke="#b0a6a1" stroke-width="0.7"/><line x1="95.9" y1="398.2" x2="88.1" y2="408.2" stroke="#7d746f" stroke-width="0.7"/><line x1="10.7" y1="423.9" x2="9.2" y2="414.5" stroke="#5c5450" stroke-width="0.7"/><line x1="46.5" y1="404.9" x2="47.4" y2="413.6" stroke="#b0a6a1" stroke-width="0.7"/><line x1="69.1" y1="432.9" x2="63.4" y2="428.5" stroke="#b0a6a1" stroke-width="0.7"/><line x1="119.8" y1="387.4" x2="92.0" y2="387.2" stroke="#9c928d" stroke-width="0.7"/><line x1="59.2" y1="459.3" x2="63.1" y2="449.2" stroke="#7d746f" stroke-width="0.7"/><line x1="79.4" y1="401.9" x2="90.7" y2="398.6" stroke="#7d746f" stroke-width="0.7"/><line x1="37.7" y1="426.9" x2="45.1" y2="419.5" stroke="#b0a6a1" stroke-width="0.7"/><line x1="35.6" y1="412.3" x2="37.7" y2="426.9" stroke="#5c5450" stroke-width="0.7"/><line x1="19.5" y1="411.4" x2="25.8" y2="412.2" stroke="#7d746f" stroke-width="0.7"/><line x1="19.5" y1="411.4" x2="7.5" y2="409.5" stroke="#5c5450" stroke-width="0.7"/><line x1="13.3" y1="459.3" x2="15.5" y2="439.2" stroke="#5c5450" stroke-width="0.7"/><line x1="139.1" y1="404.9" x2="151.0" y2="398.8" stroke="#9c928d" stroke-width="0.7"/><line x1="35.6" y1="412.3" x2="27.5" y2="410.2" stroke="#b0a6a1" stroke-width="0.7"/><line x1="19.5" y1="411.4" x2="28.7" y2="414.9" stroke="#7d746f" stroke-width="0.7"/><line x1="125.5" y1="428.8" x2="115.1" y2="432.1" stroke="#5c5450" stroke-width="0.7"/><line x1="135.5" y1="449.2" x2="118.9" y2="446.8" stroke="#b0a6a1" stroke-width="0.7"/><line x1="54.6" y1="413.4" x2="52.8" y2="402.5" stroke="#7d746f" stroke-width="0.7"/><line x1="155.0" y1="417.6" x2="163.8" y2="416.2" stroke="#9c928d" stroke-width="0.7"/><line x1="52.0" y1="423.2" x2="52.5" y2="423.3" stroke="#9c928d" stroke-width="0.7"/><line x1="62.3" y1="438.5" x2="63.1" y2="449.2" stroke="#5c5450" stroke-width="0.7"/><line x1="96.6" y1="440.0" x2="83.9" y2="442.3" stroke="#7d746f" stroke-width="0.7"/><line x1="120.6" y1="406.4" x2="120.9" y2="416.5" stroke="#5c5450" stroke-width="0.7"/><line x1="94.0" y1="412.3" x2="88.9" y2="414.1" stroke="#9c928d" stroke-width="0.7"/><line x1="92.2" y1="388.2" x2="73.1" y2="388.5" stroke="#b0a6a1" stroke-width="0.7"/><line x1="20.4" y1="404.4" x2="36.3" y2="400.9" stroke="#b0a6a1" stroke-width="0.7"/><line x1="149.3" y1="428.2" x2="165.2" y2="438.8" stroke="#7d746f" stroke-width="0.7"/><line x1="8.2" y1="395.9" x2="12.0" y2="400.8" stroke="#5c5450" stroke-width="0.7"/><line x1="101.9" y1="417.1" x2="91.8" y2="416.1" stroke="#9c928d" stroke-width="0.7"/><line x1="151.7" y1="384.7" x2="176.3" y2="396.0" stroke="#5c5450" stroke-width="0.7"/><line x1="107.8" y1="466.6" x2="107.1" y2="470.6" stroke="#9c928d" stroke-width="0.7"/><line x1="135.5" y1="449.2" x2="146.2" y2="464.3" stroke="#9c928d" stroke-width="0.7"/><line x1="111.8" y1="462.6" x2="112.3" y2="471.8" stroke="#9c928d" stroke-width="0.7"/><line x1="107.8" y1="466.6" x2="102.3" y2="471.3" stroke="#b0a6a1" stroke-width="0.7"/><line x1="96.6" y1="440.0" x2="87.1" y2="438.7" stroke="#b0a6a1" stroke-width="0.7"/><line x1="142.9" y1="438.4" x2="165.2" y2="438.8" stroke="#5c5450" stroke-width="0.7"/><line x1="101.9" y1="417.1" x2="107.4" y2="419.7" stroke="#9c928d" stroke-width="0.7"/><line x1="107.8" y1="415.1" x2="119.1" y2="409.5" stroke="#b0a6a1" stroke-width="0.7"/><line x1="198.5" y1="390.4" x2="198.5" y2="491.2" stroke="#b0a6a1" stroke-width="0.7"/><line x1="121.5" y1="388.2" x2="119.8" y2="387.4" stroke="#b0a6a1" stroke-width="0.7"/><line x1="112.3" y1="471.8" x2="125.5" y2="475.7" stroke="#b0a6a1" stroke-width="0.7"/><line x1="62.3" y1="438.5" x2="56.0" y2="440.8" stroke="#7d746f" stroke-width="0.7"/><line x1="18.6" y1="436.2" x2="15.5" y2="439.2" stroke="#5c5450" stroke-width="0.7"/><line x1="69.1" y1="407.0" x2="80.1" y2="408.2" stroke="#7d746f" stroke-width="0.7"/><line x1="88.0" y1="417.9" x2="80.1" y2="408.2" stroke="#9c928d" stroke-width="0.7"/><line x1="79.4" y1="401.9" x2="69.1" y2="407.0" stroke="#7d746f" stroke-width="0.7"/><line x1="83.9" y1="442.3" x2="87.1" y2="438.7" stroke="#7d746f" stroke-width="0.7"/><line x1="100.7" y1="399.3" x2="105.6" y2="407.2" stroke="#9c928d" stroke-width="0.7"/><line x1="186.8" y1="397.0" x2="190.4" y2="412.6" stroke="#5c5450" stroke-width="0.7"/><line x1="99.4" y1="432.8" x2="107.4" y2="419.7" stroke="#7d746f" stroke-width="0.7"/><line x1="113.0" y1="421.0" x2="110.0" y2="416.5" stroke="#b0a6a1" stroke-width="0.7"/><line x1="129.8" y1="428.4" x2="135.7" y2="437.5" stroke="#7d746f" stroke-width="0.7"/><line x1="149.3" y1="428.2" x2="155.0" y2="417.6" stroke="#9c928d" stroke-width="0.7"/><line x1="134.5" y1="419.5" x2="140.5" y2="419.2" stroke="#9c928d" stroke-width="0.7"/><line x1="76.1" y1="420.3" x2="94.1" y2="427.8" stroke="#5c5450" stroke-width="0.7"/><line x1="25.7" y1="458.4" x2="63.9" y2="466.7" stroke="#b0a6a1" stroke-width="0.7"/><line x1="134.5" y1="419.5" x2="132.1" y2="400.8" stroke="#b0a6a1" stroke-width="0.7"/><line x1="139.1" y1="404.9" x2="141.0" y2="399.4" stroke="#7d746f" stroke-width="0.7"/><line x1="64.7" y1="419.0" x2="55.1" y2="421.3" stroke="#5c5450" stroke-width="0.7"/><line x1="129.8" y1="428.4" x2="125.0" y2="425.2" stroke="#b0a6a1" stroke-width="0.7"/><line x1="100.7" y1="399.3" x2="107.1" y2="403.8" stroke="#9c928d" stroke-width="0.7"/><line x1="74.4" y1="450.1" x2="63.1" y2="449.2" stroke="#5c5450" stroke-width="0.7"/><line x1="110.1" y1="437.0" x2="115.1" y2="432.1" stroke="#9c928d" stroke-width="0.7"/><line x1="121.5" y1="388.2" x2="116.1" y2="388.2" stroke="#7d746f" stroke-width="0.7"/><line x1="29.6" y1="422.3" x2="37.7" y2="426.9" stroke="#b0a6a1" stroke-width="0.7"/><line x1="138.3" y1="459.8" x2="146.2" y2="464.3" stroke="#5c5450" stroke-width="0.7"/><line x1="92.0" y1="387.2" x2="141.8" y2="385.3" stroke="#b0a6a1" stroke-width="0.7"/><line x1="52.0" y1="423.2" x2="55.1" y2="421.3" stroke="#b0a6a1" stroke-width="0.7"/><line x1="66.7" y1="468.7" x2="125.5" y2="475.7" stroke="#7d746f" stroke-width="0.7"/><line x1="69.1" y1="407.0" x2="67.0" y2="399.5" stroke="#9c928d" stroke-width="0.7"/><line x1="96.6" y1="440.0" x2="94.1" y2="427.8" stroke="#9c928d" stroke-width="0.7"/><line x1="13.8" y1="393.3" x2="49.2" y2="390.4" stroke="#b0a6a1" stroke-width="0.7"/><line x1="99.4" y1="433.3" x2="109.8" y2="437.5" stroke="#5c5450" stroke-width="0.7"/><line x1="40.3" y1="433.6" x2="37.5" y2="441.9" stroke="#b0a6a1" stroke-width="0.7"/><line x1="20.4" y1="404.4" x2="13.8" y2="393.3" stroke="#5c5450" stroke-width="0.7"/><line x1="12.9" y1="431.2" x2="10.7" y2="423.9" stroke="#9c928d" stroke-width="0.7"/><line x1="94.8" y1="389.6" x2="92.0" y2="387.2" stroke="#b0a6a1" stroke-width="0.7"/><line x1="151.7" y1="384.7" x2="176.3" y2="381.3" stroke="#5c5450" stroke-width="0.7"/><line x1="144.8" y1="425.0" x2="140.5" y2="419.2" stroke="#b0a6a1" stroke-width="0.7"/><line x1="146.2" y1="464.3" x2="141.8" y2="477.0" stroke="#b0a6a1" stroke-width="0.7"/><line x1="99.3" y1="467.4" x2="96.0" y2="471.2" stroke="#9c928d" stroke-width="0.7"/><line x1="96.6" y1="440.0" x2="109.8" y2="437.5" stroke="#5c5450" stroke-width="0.7"/><line x1="106.0" y1="453.4" x2="109.8" y2="437.5" stroke="#5c5450" stroke-width="0.7"/><line x1="149.3" y1="428.2" x2="144.8" y2="425.0" stroke="#5c5450" stroke-width="0.7"/><line x1="62.3" y1="438.5" x2="55.4" y2="440.0" stroke="#7d746f" stroke-width="0.7"/><line x1="124.7" y1="437.9" x2="115.1" y2="432.1" stroke="#b0a6a1" stroke-width="0.7"/><line x1="48.3" y1="415.4" x2="43.4" y2="416.1" stroke="#5c5450" stroke-width="0.7"/><line x1="73.1" y1="388.5" x2="67.0" y2="399.5" stroke="#5c5450" stroke-width="0.7"/><line x1="116.1" y1="388.2" x2="92.0" y2="387.2" stroke="#5c5450" stroke-width="0.7"/><line x1="88.3" y1="411.0" x2="88.1" y2="408.2" stroke="#9c928d" stroke-width="0.7"/><line x1="55.5" y1="440.8" x2="52.6" y2="439.0" stroke="#7d746f" stroke-width="0.7"/><line x1="88.9" y1="414.1" x2="91.8" y2="416.1" stroke="#7d746f" stroke-width="0.7"/><line x1="76.1" y1="420.3" x2="80.1" y2="408.2" stroke="#9c928d" stroke-width="0.7"/><line x1="160.0" y1="401.5" x2="176.3" y2="396.0" stroke="#9c928d" stroke-width="0.7"/><line x1="192.0" y1="438.2" x2="184.8" y2="465.0" stroke="#7d746f" stroke-width="0.7"/><line x1="94.3" y1="465.1" x2="96.0" y2="471.2" stroke="#9c928d" stroke-width="0.7"/><line x1="131.8" y1="393.2" x2="130.9" y2="388.2" stroke="#7d746f" stroke-width="0.7"/><line x1="107.8" y1="466.6" x2="112.3" y2="471.8" stroke="#7d746f" stroke-width="0.7"/><line x1="130.9" y1="388.2" x2="141.8" y2="385.3" stroke="#9c928d" stroke-width="0.7"/><line x1="99.4" y1="432.8" x2="99.4" y2="433.3" stroke="#b0a6a1" stroke-width="0.7"/><line x1="184.8" y1="465.0" x2="198.5" y2="491.2" stroke="#5c5450" stroke-width="0.7"/><line x1="146.7" y1="433.0" x2="142.9" y2="438.4" stroke="#5c5450" stroke-width="0.7"/><line x1="186.8" y1="397.0" x2="198.5" y2="390.4" stroke="#7d746f" stroke-width="0.7"/><line x1="33.8" y1="395.4" x2="13.8" y2="393.3" stroke="#b0a6a1" stroke-width="0.7"/><line x1="76.1" y1="420.3" x2="69.1" y2="432.9" stroke="#9c928d" stroke-width="0.7"/><line x1="28.1" y1="424.9" x2="18.6" y2="436.2" stroke="#9c928d" stroke-width="0.7"/><line x1="139.1" y1="404.9" x2="140.3" y2="400.0" stroke="#7d746f" stroke-width="0.7"/><line x1="135.5" y1="449.2" x2="135.0" y2="438.2" stroke="#5c5450" stroke-width="0.7"/><line x1="107.1" y1="403.8" x2="105.6" y2="407.2" stroke="#b0a6a1" stroke-width="0.7"/><line x1="107.8" y1="415.1" x2="101.9" y2="417.1" stroke="#5c5450" stroke-width="0.7"/><line x1="106.0" y1="453.4" x2="105.0" y2="459.8" stroke="#7d746f" stroke-width="0.7"/><line x1="95.2" y1="465.6" x2="96.0" y2="471.2" stroke="#7d746f" stroke-width="0.7"/><line x1="52.0" y1="423.2" x2="39.3" y2="427.6" stroke="#b0a6a1" stroke-width="0.7"/><line x1="80.2" y1="460.8" x2="84.8" y2="469.3" stroke="#5c5450" stroke-width="0.7"/><line x1="96.0" y1="471.2" x2="125.5" y2="475.7" stroke="#5c5450" stroke-width="0.7"/><line x1="76.1" y1="420.3" x2="70.0" y2="434.7" stroke="#9c928d" stroke-width="0.7"/><line x1="107.8" y1="466.6" x2="101.0" y2="462.6" stroke="#b0a6a1" stroke-width="0.7"/><line x1="69.1" y1="407.0" x2="63.6" y2="399.5" stroke="#b0a6a1" stroke-width="0.7"/><line x1="134.5" y1="419.5" x2="139.1" y2="404.9" stroke="#5c5450" stroke-width="0.7"/><line x1="20.4" y1="404.4" x2="12.0" y2="400.8" stroke="#5c5450" stroke-width="0.7"/><line x1="71.6" y1="457.5" x2="80.2" y2="460.8" stroke="#7d746f" stroke-width="0.7"/><line x1="94.1" y1="427.8" x2="88.0" y2="417.9" stroke="#7d746f" stroke-width="0.7"/><line x1="106.0" y1="453.4" x2="118.9" y2="446.8" stroke="#b0a6a1" stroke-width="0.7"/><line x1="102.3" y1="471.3" x2="125.5" y2="475.7" stroke="#7d746f" stroke-width="0.7"/><line x1="141.1" y1="431.7" x2="132.7" y2="426.4" stroke="#9c928d" stroke-width="0.7"/><line x1="28.1" y1="424.9" x2="12.9" y2="431.2" stroke="#9c928d" stroke-width="0.7"/><line x1="190.4" y1="412.6" x2="192.0" y2="438.2" stroke="#9c928d" stroke-width="0.7"/><line x1="12.9" y1="431.2" x2="15.5" y2="439.2" stroke="#b0a6a1" stroke-width="0.7"/><line x1="111.8" y1="462.6" x2="118.9" y2="446.8" stroke="#5c5450" stroke-width="0.7"/><line x1="54.6" y1="413.4" x2="46.5" y2="404.9" stroke="#9c928d" stroke-width="0.7"/><line x1="49.2" y1="390.4" x2="66.1" y2="388.5" stroke="#5c5450" stroke-width="0.7"/><line x1="94.0" y1="412.3" x2="105.6" y2="407.2" stroke="#7d746f" stroke-width="0.7"/><line x1="44.1" y1="456.3" x2="63.9" y2="466.7" stroke="#9c928d" stroke-width="0.7"/><line x1="151.0" y1="398.8" x2="155.0" y2="417.6" stroke="#7d746f" stroke-width="0.7"/><line x1="93.9" y1="390.2" x2="94.8" y2="389.6" stroke="#7d746f" stroke-width="0.7"/><line x1="45.1" y1="419.5" x2="39.3" y2="427.6" stroke="#b0a6a1" stroke-width="0.7"/><line x1="38.9" y1="406.0" x2="46.5" y2="404.9" stroke="#7d746f" stroke-width="0.7"/><line x1="105.6" y1="399.1" x2="112.1" y2="393.8" stroke="#3a3430" stroke-width="0.8"/><line x1="111.2" y1="420.6" x2="113.8" y2="417.3" stroke="#3a3430" stroke-width="0.8"/><line x1="114.3" y1="438.8" x2="125.3" y2="437.2" stroke="#3a3430" stroke-width="0.8"/><line x1="75.5" y1="423.9" x2="87.4" y2="421.6" stroke="#3a3430" stroke-width="0.8"/><line x1="120.1" y1="391.6" x2="123.7" y2="390.9" stroke="#3a3430" stroke-width="0.8"/><line x1="99.0" y1="424.6" x2="106.8" y2="414.0" stroke="#3a3430" stroke-width="0.8"/><line x1="61.0" y1="441.9" x2="61.5" y2="442.0" stroke="#3a3430" stroke-width="0.8"/><line x1="35.1" y1="405.1" x2="32.5" y2="400.0" stroke="#3a3430" stroke-width="0.8"/><line x1="118.4" y1="404.6" x2="113.9" y2="386.3" stroke="#3a3430" stroke-width="0.8"/><line x1="104.7" y1="465.9" x2="106.4" y2="461.1" stroke="#3a3430" stroke-width="0.8"/><line x1="96.8" y1="415.0" x2="100.6" y2="405.0" stroke="#3a3430" stroke-width="0.8"/><line x1="111.9" y1="467.7" x2="115.9" y2="463.7" stroke="#3a3430" stroke-width="0.8"/><line x1="55.6" y1="396.4" x2="57.7" y2="397.8" stroke="#3a3430" stroke-width="0.8"/><line x1="89.1" y1="463.2" x2="95.9" y2="460.7" stroke="#3a3430" stroke-width="0.8"/><line x1="80.3" y1="465.1" x2="80.5" y2="472.5" stroke="#3a3430" stroke-width="0.8"/><line x1="109.5" y1="420.9" x2="115.1" y2="422.2" stroke="#3a3430" stroke-width="0.8"/><line x1="130.6" y1="417.0" x2="117.1" y2="414.0" stroke="#3a3430" stroke-width="0.8"/><line x1="105.5" y1="459.0" x2="92.6" y2="454.0" stroke="#3a3430" stroke-width="0.8"/><line x1="142.2" y1="476.1" x2="154.9" y2="463.1" stroke="#3a3430" stroke-width="0.8"/><line x1="92.6" y1="462.6" x2="98.4" y2="459.7" stroke="#3a3430" stroke-width="0.8"/><line x1="56.5" y1="395.7" x2="61.0" y2="386.0" stroke="#3a3430" stroke-width="0.8"/><line x1="116.0" y1="440.8" x2="115.8" y2="441.3" stroke="#3a3430" stroke-width="0.8"/><line x1="48.1" y1="417.0" x2="54.9" y2="422.9" stroke="#3a3430" stroke-width="0.8"/><line x1="136.1" y1="427.0" x2="143.9" y2="419.7" stroke="#3a3430" stroke-width="0.8"/><line x1="88.2" y1="416.8" x2="84.4" y2="418.7" stroke="#3a3430" stroke-width="0.8"/><line x1="169.4" y1="436.2" x2="189.0" y2="462.4" stroke="#3a3430" stroke-width="0.8"/><line x1="41.7" y1="424.2" x2="32.2" y2="422.3" stroke="#3a3430" stroke-width="0.8"/><line x1="51.5" y1="442.0" x2="54.3" y2="443.0" stroke="#3a3430" stroke-width="0.8"/><line x1="16.8" y1="463.2" x2="70.2" y2="472.6" stroke="#3a3430" stroke-width="0.8"/><line x1="47.9" y1="402.9" x2="58.7" y2="399.8" stroke="#3a3430" stroke-width="0.8"/><line x1="84.7" y1="404.8" x2="78.9" y2="401.9" stroke="#3a3430" stroke-width="0.8"/><line x1="33.8" y1="404.7" x2="46.6" y2="404.4" stroke="#3a3430" stroke-width="0.8"/><line x1="94.0" y1="399.3" x2="92.9" y2="390.8" stroke="#3a3430" stroke-width="0.8"/><line x1="139.7" y1="399.8" x2="140.4" y2="399.2" stroke="#3a3430" stroke-width="0.8"/><line x1="58.5" y1="445.0" x2="61.8" y2="441.0" stroke="#3a3430" stroke-width="0.8"/><line x1="117.1" y1="436.0" x2="123.5" y2="439.0" stroke="#3a3430" stroke-width="0.8"/><line x1="136.7" y1="402.5" x2="130.7" y2="404.7" stroke="#3a3430" stroke-width="0.8"/><line x1="54.5" y1="442.9" x2="55.2" y2="443.8" stroke="#3a3430" stroke-width="0.8"/><line x1="18.7" y1="402.8" x2="25.9" y2="408.6" stroke="#3a3430" stroke-width="0.8"/><line x1="132.8" y1="390.3" x2="122.5" y2="385.4" stroke="#3a3430" stroke-width="0.8"/><line x1="85.8" y1="455.0" x2="88.5" y2="459.5" stroke="#3a3430" stroke-width="0.8"/><line x1="23.5" y1="414.7" x2="13.2" y2="417.8" stroke="#3a3430" stroke-width="0.8"/><line x1="174.8" y1="381.1" x2="197.0" y2="390.2" stroke="#3a3430" stroke-width="0.8"/><line x1="111.2" y1="437.1" x2="107.5" y2="434.5" stroke="#3a3430" stroke-width="0.8"/><line x1="47.7" y1="401.6" x2="54.0" y2="399.2" stroke="#3a3430" stroke-width="0.8"/><line x1="92.1" y1="396.4" x2="90.2" y2="410.5" stroke="#3a3430" stroke-width="0.8"/><line x1="137.8" y1="445.9" x2="145.2" y2="435.1" stroke="#3a3430" stroke-width="0.8"/><line x1="54.2" y1="411.9" x2="53.3" y2="410.1" stroke="#3a3430" stroke-width="0.8"/><line x1="6.9" y1="440.5" x2="5.9" y2="452.7" stroke="#3a3430" stroke-width="0.8"/><line x1="59.4" y1="421.6" x2="51.5" y2="420.4" stroke="#3a3430" stroke-width="0.8"/><line x1="92.5" y1="388.8" x2="91.0" y2="399.2" stroke="#3a3430" stroke-width="0.8"/><line x1="139.6" y1="403.2" x2="155.5" y2="415.9" stroke="#3a3430" stroke-width="0.8"/><line x1="131.8" y1="428.7" x2="134.7" y2="426.6" stroke="#3a3430" stroke-width="0.8"/><line x1="110.7" y1="432.3" x2="108.6" y2="421.3" stroke="#3a3430" stroke-width="0.8"/><line x1="203.4" y1="393.3" x2="196.9" y2="441.1" stroke="#3a3430" stroke-width="0.8"/><line x1="51.0" y1="409.9" x2="43.8" y2="410.0" stroke="#3a3430" stroke-width="0.8"/><line x1="80.5" y1="444.9" x2="66.6" y2="437.3" stroke="#3a3430" stroke-width="0.8"/><line x1="109.2" y1="442.9" x2="114.3" y2="450.1" stroke="#3a3430" stroke-width="0.8"/><line x1="125.0" y1="459.3" x2="122.9" y2="443.2" stroke="#3a3430" stroke-width="0.8"/><line x1="67.9" y1="407.4" x2="65.8" y2="418.0" stroke="#3a3430" stroke-width="0.8"/><line x1="112.1" y1="466.5" x2="109.3" y2="459.7" stroke="#3a3430" stroke-width="0.8"/><line x1="73.8" y1="455.3" x2="66.1" y2="464.5" stroke="#3a3430" stroke-width="0.8"/><line x1="91.2" y1="451.9" x2="86.2" y2="448.1" stroke="#3a3430" stroke-width="0.8"/><line x1="129.6" y1="425.9" x2="124.5" y2="435.3" stroke="#3a3430" stroke-width="0.8"/><line x1="149.8" y1="386.6" x2="158.1" y2="403.4" stroke="#3a3430" stroke-width="0.8"/><line x1="25.4" y1="458.7" x2="37.2" y2="442.2" stroke="#3a3430" stroke-width="0.8"/><line x1="73.8" y1="450.0" x2="79.7" y2="449.3" stroke="#3a3430" stroke-width="0.8"/><line x1="156.4" y1="398.2" x2="151.4" y2="414.3" stroke="#3a3430" stroke-width="0.8"/><line x1="63.6" y1="420.9" x2="64.1" y2="426.9" stroke="#3a3430" stroke-width="0.8"/><line x1="142.9" y1="460.1" x2="139.3" y2="458.7" stroke="#3a3430" stroke-width="0.8"/><line x1="6.0" y1="456.0" x2="19.5" y2="441.2" stroke="#3a3430" stroke-width="0.8"/><line x1="92.3" y1="427.7" x2="90.0" y2="415.9" stroke="#3a3430" stroke-width="0.8"/><line x1="55.3" y1="458.4" x2="60.7" y2="450.9" stroke="#3a3430" stroke-width="0.8"/><line x1="158.9" y1="464.1" x2="189.2" y2="465.1" stroke="#3a3430" stroke-width="0.8"/><line x1="71.5" y1="423.9" x2="82.5" y2="442.3" stroke="#3a3430" stroke-width="0.8"/><line x1="55.5" y1="459.9" x2="46.7" y2="445.7" stroke="#3a3430" stroke-width="0.8"/><line x1="50.0" y1="406.8" x2="39.8" y2="402.8" stroke="#3a3430" stroke-width="0.8"/><line x1="89.3" y1="429.5" x2="94.6" y2="434.4" stroke="#3a3430" stroke-width="0.8"/><line x1="82.1" y1="452.8" x2="76.9" y2="460.4" stroke="#3a3430" stroke-width="0.8"/><line x1="61.8" y1="468.8" x2="66.5" y2="458.7" stroke="#3a3430" stroke-width="0.8"/><line x1="102.3" y1="467.4" x2="102.9" y2="469.3" stroke="#3a3430" stroke-width="0.8"/><line x1="41.2" y1="456.6" x2="34.6" y2="442.3" stroke="#3a3430" stroke-width="0.8"/><line x1="107.8" y1="418.7" x2="110.1" y2="420.1" stroke="#3a3430" stroke-width="0.8"/><line x1="23.1" y1="403.4" x2="28.5" y2="411.2" stroke="#3a3430" stroke-width="0.8"/><line x1="124.1" y1="407.1" x2="115.1" y2="414.1" stroke="#3a3430" stroke-width="0.8"/><line x1="144.9" y1="385.2" x2="154.6" y2="384.6" stroke="#3a3430" stroke-width="0.8"/><line x1="136.9" y1="432.0" x2="142.5" y2="433.3" stroke="#3a3430" stroke-width="0.8"/><line x1="101.7" y1="449.4" x2="96.7" y2="458.7" stroke="#3a3430" stroke-width="0.8"/><line x1="51.5" y1="402.2" x2="47.9" y2="400.2" stroke="#3a3430" stroke-width="0.8"/><line x1="39.0" y1="425.0" x2="40.7" y2="425.7" stroke="#3a3430" stroke-width="0.8"/><line x1="70.1" y1="418.5" x2="63.1" y2="405.3" stroke="#3a3430" stroke-width="0.8"/><line x1="30.9" y1="437.6" x2="32.7" y2="444.3" stroke="#3a3430" stroke-width="0.8"/><line x1="93.6" y1="466.4" x2="87.4" y2="458.9" stroke="#3a3430" stroke-width="0.8"/><line x1="105.9" y1="412.9" x2="103.7" y2="405.0" stroke="#3a3430" stroke-width="0.8"/><line x1="36.9" y1="436.5" x2="41.5" y2="434.9" stroke="#3a3430" stroke-width="0.8"/><line x1="136.0" y1="436.9" x2="141.4" y2="431.1" stroke="#3a3430" stroke-width="0.8"/><line x1="59.2" y1="456.1" x2="44.1" y2="453.1" stroke="#3a3430" stroke-width="0.8"/><line x1="71.0" y1="435.7" x2="88.1" y2="439.7" stroke="#3a3430" stroke-width="0.8"/><line x1="32.3" y1="399.8" x2="45.2" y2="389.3" stroke="#3a3430" stroke-width="0.8"/><line x1="23.0" y1="410.2" x2="21.2" y2="412.2" stroke="#3a3430" stroke-width="0.8"/><line x1="26.5" y1="406.3" x2="27.6" y2="411.0" stroke="#3a3430" stroke-width="0.8"/><line x1="98.3" y1="393.4" x2="100.3" y2="401.4" stroke="#3a3430" stroke-width="0.8"/><line x1="95.2" y1="393.7" x2="95.2" y2="403.0" stroke="#3a3430" stroke-width="0.8"/><line x1="3.4" y1="444.0" x2="11.1" y2="426.1" stroke="#3a3430" stroke-width="0.8"/><line x1="94.8" y1="386.6" x2="98.8" y2="390.1" stroke="#3a3430" stroke-width="0.8"/><line x1="128.2" y1="476.4" x2="140.9" y2="478.7" stroke="#3a3430" stroke-width="0.8"/><line x1="141.9" y1="424.8" x2="152.1" y2="417.4" stroke="#3a3430" stroke-width="0.8"/><line x1="181.8" y1="381.1" x2="181.8" y2="395.8" stroke="#3a3430" stroke-width="0.8"/><line x1="121.3" y1="405.2" x2="129.1" y2="398.6" stroke="#3a3430" stroke-width="0.8"/><line x1="74.6" y1="456.4" x2="77.4" y2="449.0" stroke="#3a3430" stroke-width="0.8"/><line x1="52.4" y1="419.0" x2="49.8" y2="421.1" stroke="#3a3430" stroke-width="0.8"/><line x1="3.5" y1="398.1" x2="9.0" y2="395.5" stroke="#3a3430" stroke-width="0.8"/><line x1="92.6" y1="466.6" x2="89.6" y2="459.4" stroke="#3a3430" stroke-width="0.8"/><line x1="95.8" y1="389.9" x2="98.4" y2="391.4" stroke="#3a3430" stroke-width="0.8"/><line x1="60.3" y1="453.9" x2="58.7" y2="451.5" stroke="#3a3430" stroke-width="0.8"/><line x1="62.2" y1="469.5" x2="80.3" y2="470.1" stroke="#3a3430" stroke-width="0.8"/><line x1="93.4" y1="401.0" x2="85.6" y2="411.0" stroke="#3a3430" stroke-width="0.8"/><line x1="10.0" y1="421.1" x2="8.4" y2="411.6" stroke="#3a3430" stroke-width="0.8"/><line x1="68.1" y1="431.4" x2="62.5" y2="427.0" stroke="#3a3430" stroke-width="0.8"/><line x1="56.3" y1="455.4" x2="60.1" y2="445.4" stroke="#3a3430" stroke-width="0.8"/><line x1="77.2" y1="401.0" x2="88.5" y2="397.7" stroke="#3a3430" stroke-width="0.8"/><line x1="35.1" y1="423.6" x2="42.4" y2="416.1" stroke="#3a3430" stroke-width="0.8"/><line x1="32.6" y1="410.1" x2="34.6" y2="424.7" stroke="#3a3430" stroke-width="0.8"/><line x1="16.2" y1="414.7" x2="22.5" y2="415.4" stroke="#3a3430" stroke-width="0.8"/><line x1="160.2" y1="419.6" x2="169.0" y2="418.2" stroke="#3a3430" stroke-width="0.8"/><line x1="46.8" y1="421.2" x2="47.4" y2="421.3" stroke="#3a3430" stroke-width="0.8"/><line x1="125.4" y1="409.8" x2="125.8" y2="419.8" stroke="#3a3430" stroke-width="0.8"/><line x1="5.4" y1="394.2" x2="9.2" y2="399.1" stroke="#3a3430" stroke-width="0.8"/><line x1="98.3" y1="420.5" x2="88.2" y2="419.5" stroke="#3a3430" stroke-width="0.8"/><line x1="110.6" y1="461.4" x2="111.1" y2="470.6" stroke="#3a3430" stroke-width="0.8"/><line x1="119.7" y1="385.6" x2="117.9" y2="384.8" stroke="#3a3430" stroke-width="0.8"/><line x1="186.1" y1="399.1" x2="189.7" y2="414.7" stroke="#3a3430" stroke-width="0.8"/><line x1="149.1" y1="427.3" x2="154.8" y2="416.7" stroke="#3a3430" stroke-width="0.8"/><line x1="74.6" y1="419.2" x2="92.6" y2="426.7" stroke="#3a3430" stroke-width="0.8"/><line x1="106.3" y1="440.9" x2="111.3" y2="435.9" stroke="#3a3430" stroke-width="0.8"/><line x1="25.7" y1="424.7" x2="33.8" y2="429.3" stroke="#3a3430" stroke-width="0.8"/><line x1="70.8" y1="471.7" x2="129.6" y2="478.7" stroke="#3a3430" stroke-width="0.8"/><line x1="63.8" y1="406.1" x2="61.6" y2="398.5" stroke="#3a3430" stroke-width="0.8"/><line x1="13.2" y1="395.3" x2="48.6" y2="392.4" stroke="#3a3430" stroke-width="0.8"/><line x1="105.4" y1="434.8" x2="115.8" y2="438.9" stroke="#3a3430" stroke-width="0.8"/><line x1="40.9" y1="430.2" x2="38.1" y2="438.5" stroke="#3a3430" stroke-width="0.8"/><line x1="15.5" y1="401.1" x2="8.9" y2="390.0" stroke="#3a3430" stroke-width="0.8"/><line x1="10.3" y1="432.5" x2="8.1" y2="425.2" stroke="#3a3430" stroke-width="0.8"/><line x1="139.3" y1="425.1" x2="134.9" y2="419.3" stroke="#3a3430" stroke-width="0.8"/><line x1="142.8" y1="466.0" x2="138.4" y2="478.6" stroke="#3a3430" stroke-width="0.8"/><line x1="100.8" y1="469.5" x2="97.4" y2="473.3" stroke="#3a3430" stroke-width="0.8"/><line x1="121.3" y1="438.6" x2="111.7" y2="432.8" stroke="#3a3430" stroke-width="0.8"/><line x1="72.4" y1="388.7" x2="66.3" y2="399.7" stroke="#3a3430" stroke-width="0.8"/><line x1="59.1" y1="443.6" x2="56.2" y2="441.9" stroke="#3a3430" stroke-width="0.8"/><line x1="191.3" y1="437.3" x2="184.1" y2="464.1" stroke="#3a3430" stroke-width="0.8"/><line x1="102.8" y1="431.2" x2="102.8" y2="431.7" stroke="#3a3430" stroke-width="0.8"/><line x1="149.4" y1="433.7" x2="145.6" y2="439.2" stroke="#3a3430" stroke-width="0.8"/><line x1="32.9" y1="393.1" x2="12.9" y2="391.1" stroke="#3a3430" stroke-width="0.8"/><line x1="108.9" y1="403.5" x2="107.4" y2="406.9" stroke="#3a3430" stroke-width="0.8"/><line x1="72.4" y1="422.6" x2="66.3" y2="437.0" stroke="#3a3430" stroke-width="0.8"/><line x1="64.0" y1="406.9" x2="58.5" y2="399.4" stroke="#3a3430" stroke-width="0.8"/><line x1="16.8" y1="402.5" x2="8.4" y2="398.9" stroke="#3a3430" stroke-width="0.8"/><line x1="189.9" y1="413.1" x2="191.5" y2="438.7" stroke="#3a3430" stroke-width="0.8"/><line x1="56.6" y1="409.4" x2="48.6" y2="400.9" stroke="#3a3430" stroke-width="0.8"/><line x1="148.8" y1="397.1" x2="152.8" y2="415.9" stroke="#3a3430" stroke-width="0.8"/><line x1="77.8" y1="465.1" x2="172.7" y2="456.3" stroke="#8f8580" stroke-width="0.8"/><line x1="11.1" y1="466.9" x2="169.0" y2="460.5" stroke="#8f8580" stroke-width="0.8"/><line x1="127.7" y1="394.6" x2="260.6" y2="389.4" stroke="#2a2420" stroke-width="0.8"/><line x1="81.8" y1="387.0" x2="230.4" y2="383.4" stroke="#5e5550" stroke-width="0.8"/><line x1="117.7" y1="418.2" x2="181.4" y2="415.7" stroke="#8f8580" stroke-width="0.8"/><line x1="138.1" y1="391.3" x2="312.8" y2="400.0" stroke="#2a2420" stroke-width="0.8"/><line x1="40.0" y1="475.7" x2="128.9" y2="468.2" stroke="#5e5550" stroke-width="0.8"/><line x1="119.7" y1="474.6" x2="224.8" y2="465.5" stroke="#8f8580" stroke-width="0.8"/><line x1="103.0" y1="455.9" x2="207.3" y2="446.7" stroke="#8f8580" stroke-width="0.8"/><line x1="136.1" y1="402.9" x2="188.7" y2="401.2" stroke="#5e5550" stroke-width="0.8"/><line x1="53.5" y1="450.0" x2="174.7" y2="455.0" stroke="#8f8580" stroke-width="0.8"/><line x1="43.2" y1="449.8" x2="108.6" y2="447.1" stroke="#2a2420" stroke-width="0.8"/><line x1="23.6" y1="408.5" x2="105.7" y2="401.3" stroke="#8f8580" stroke-width="0.8"/><line x1="113.9" y1="476.1" x2="191.4" y2="482.6" stroke="#5e5550" stroke-width="0.8"/><line x1="60.7" y1="455.1" x2="141.6" y2="452.7" stroke="#8f8580" stroke-width="0.8"/><line x1="56.6" y1="394.5" x2="113.6" y2="401.9" stroke="#8f8580" stroke-width="0.8"/><line x1="53.5" y1="462.0" x2="142.0" y2="470.1" stroke="#8f8580" stroke-width="0.8"/><line x1="116.0" y1="445.4" x2="168.3" y2="442.3" stroke="#8f8580" stroke-width="0.8"/><line x1="113.8" y1="467.4" x2="198.3" y2="461.3" stroke="#8f8580" stroke-width="0.8"/><line x1="32.0" y1="446.1" x2="170.9" y2="446.5" stroke="#8f8580" stroke-width="0.8"/><line x1="97.3" y1="427.3" x2="199.0" y2="436.9" stroke="#2a2420" stroke-width="0.8"/><line x1="86.9" y1="446.4" x2="263.4" y2="437.1" stroke="#8f8580" stroke-width="0.8"/><line x1="53.5" y1="414.7" x2="212.4" y2="407.3" stroke="#5e5550" stroke-width="0.8"/><line x1="70.9" y1="460.0" x2="231.7" y2="457.7" stroke="#5e5550" stroke-width="0.8"/><line x1="88.0" y1="448.2" x2="197.4" y2="447.8" stroke="#8f8580" stroke-width="0.8"/><line x1="84.8" y1="387.1" x2="177.1" y2="378.3" stroke="#2a2420" stroke-width="0.8"/><line x1="47.2" y1="443.4" x2="217.5" y2="440.5" stroke="#8f8580" stroke-width="0.8"/><line x1="69.6" y1="464.7" x2="140.8" y2="468.4" stroke="#8f8580" stroke-width="0.8"/><line x1="17.3" y1="456.9" x2="144.3" y2="464.1" stroke="#8f8580" stroke-width="0.8"/><line x1="95.9" y1="411.6" x2="175.5" y2="415.2" stroke="#8f8580" stroke-width="0.8"/><line x1="11.3" y1="390.5" x2="143.1" y2="383.5" stroke="#5e5550" stroke-width="0.8"/><line x1="15.9" y1="446.2" x2="112.7" y2="446.9" stroke="#2a2420" stroke-width="0.8"/><line x1="146.6" y1="401.5" x2="259.5" y2="409.5" stroke="#5e5550" stroke-width="0.8"/><line x1="135.2" y1="421.1" x2="216.0" y2="413.3" stroke="#2a2420" stroke-width="0.8"/><line x1="45.5" y1="437.6" x2="183.5" y2="431.6" stroke="#2a2420" stroke-width="0.8"/><line x1="10.9" y1="449.4" x2="128.6" y2="452.6" stroke="#5e5550" stroke-width="0.8"/><line x1="96.7" y1="407.8" x2="168.4" y2="415.5" stroke="#5e5550" stroke-width="0.8"/><line x1="123.3" y1="443.2" x2="184.0" y2="434.6" stroke="#2a2420" stroke-width="0.8"/><line x1="115.5" y1="427.3" x2="173.3" y2="419.4" stroke="#5e5550" stroke-width="0.8"/><line x1="131.3" y1="437.1" x2="209.2" y2="438.2" stroke="#2a2420" stroke-width="0.8"/><line x1="65.7" y1="413.1" x2="170.4" y2="407.8" stroke="#5e5550" stroke-width="0.8"/><line x1="132.9" y1="406.8" x2="226.5" y2="402.2" stroke="#8f8580" stroke-width="0.8"/><line x1="57.9" y1="388.5" x2="231.1" y2="389.3" stroke="#5e5550" stroke-width="0.8"/><line x1="139.2" y1="394.2" x2="169.6" y2="403.6" stroke="#8f8580" stroke-width="0.8"/><line x1="104.8" y1="429.3" x2="172.6" y2="435.9" stroke="#8f8580" stroke-width="0.8"/><line x1="9.3" y1="440.5" x2="176.0" y2="436.8" stroke="#8f8580" stroke-width="0.8"/><line x1="129.3" y1="397.0" x2="207.7" y2="399.4" stroke="#2a2420" stroke-width="0.8"/><line x1="123.3" y1="464.6" x2="207.1" y2="462.3" stroke="#5e5550" stroke-width="0.8"/><line x1="52.8" y1="463.7" x2="196.8" y2="455.0" stroke="#8f8580" stroke-width="0.8"/><line x1="94.2" y1="436.3" x2="159.0" y2="431.4" stroke="#5e5550" stroke-width="0.8"/><line x1="76.4" y1="431.0" x2="130.7" y2="427.2" stroke="#2a2420" stroke-width="0.8"/><line x1="141.7" y1="442.5" x2="265.9" y2="447.6" stroke="#5e5550" stroke-width="0.8"/><line x1="108.5" y1="406.3" x2="211.5" y2="415.4" stroke="#8f8580" stroke-width="0.8"/><line x1="121.8" y1="459.1" x2="184.8" y2="463.2" stroke="#2a2420" stroke-width="0.8"/><line x1="75.9" y1="408.2" x2="171.4" y2="412.9" stroke="#8f8580" stroke-width="0.8"/><line x1="77.0" y1="454.3" x2="162.1" y2="452.4" stroke="#8f8580" stroke-width="0.8"/><line x1="123.5" y1="393.2" x2="200.9" y2="389.5" stroke="#8f8580" stroke-width="0.8"/><line x1="39.0" y1="442.1" x2="153.3" y2="434.1" stroke="#5e5550" stroke-width="0.8"/><line x1="85.5" y1="427.8" x2="223.1" y2="427.4" stroke="#8f8580" stroke-width="0.8"/><line x1="31.7" y1="451.8" x2="141.7" y2="442.2" stroke="#8f8580" stroke-width="0.8"/><line x1="43.8" y1="448.4" x2="105.7" y2="456.2" stroke="#2a2420" stroke-width="0.8"/><line x1="61.7" y1="389.9" x2="163.9" y2="395.9" stroke="#8f8580" stroke-width="0.8"/><line x1="23.1" y1="458.1" x2="63.9" y2="467.4" stroke="#8f8580" stroke-width="0.8"/><line x1="36.7" y1="427.4" x2="210.3" y2="431.1" stroke="#2a2420" stroke-width="0.8"/><line x1="52.8" y1="448.3" x2="197.4" y2="457.2" stroke="#8f8580" stroke-width="0.8"/><line x1="46.4" y1="443.6" x2="188.9" y2="446.5" stroke="#8f8580" stroke-width="0.8"/><line x1="0.4" y1="416.3" x2="101.0" y2="420.6" stroke="#2a2420" stroke-width="0.8"/><line x1="141.3" y1="467.0" x2="169.0" y2="461.9" stroke="#8f8580" stroke-width="0.8"/><line x1="94.4" y1="392.4" x2="135.7" y2="399.4" stroke="#8f8580" stroke-width="0.8"/><line x1="145.2" y1="427.6" x2="205.7" y2="430.9" stroke="#8f8580" stroke-width="0.8"/><circle cx="197.0" cy="403.1" r="2.3" fill="none" stroke="#6a615c" stroke-width="0.7"/><circle cx="64.2" cy="422.5" r="3.8" fill="none" stroke="#6a615c" stroke-width="0.7"/><circle cx="143.5" cy="430.1" r="5.8" fill="none" stroke="#6a615c" stroke-width="0.7"/><circle cx="88.6" cy="435.5" r="5.4" fill="none" stroke="#6a615c" stroke-width="0.7"/><circle cx="63.3" cy="409.8" r="5.3" fill="none" stroke="#6a615c" stroke-width="0.7"/><circle cx="82.1" cy="470.8" r="5.3" fill="none" stroke="#6a615c" stroke-width="0.7"/><circle cx="97.0" cy="423.3" r="2.4" fill="none" stroke="#6a615c" stroke-width="0.7"/><circle cx="227.1" cy="432.6" r="3.4" fill="none" stroke="#6a615c" stroke-width="0.7"/><circle cx="45.9" cy="414.2" r="5.5" fill="none" stroke="#6a615c" stroke-width="0.7"/><circle cx="34.0" cy="442.1" r="4.5" fill="none" stroke="#6a615c" stroke-width="0.7"/><circle cx="135.3" cy="437.7" r="3.6" fill="none" stroke="#6a615c" stroke-width="0.7"/><circle cx="49.8" cy="464.8" r="5.6" fill="none" stroke="#6a615c" stroke-width="0.7"/><circle cx="146.6" cy="416.4" r="5.6" fill="none" stroke="#6a615c" stroke-width="0.7"/><circle cx="52.5" cy="409.5" r="4.5" fill="none" stroke="#6a615c" stroke-width="0.7"/><circle cx="216.2" cy="443.6" r="2.4" fill="none" stroke="#6a615c" stroke-width="0.7"/><circle cx="254.5" cy="408.3" r="3.4" fill="none" stroke="#6a615c" stroke-width="0.7"/><circle cx="257.0" cy="462.3" r="5.0" fill="none" stroke="#6a615c" stroke-width="0.7"/><circle cx="104.0" cy="395.9" r="5.2" fill="none" stroke="#6a615c" stroke-width="0.7"/><circle cx="241.9" cy="399.0" r="3.8" fill="none" stroke="#6a615c" stroke-width="0.7"/><circle cx="234.4" cy="423.3" r="3.2" fill="none" stroke="#6a615c" stroke-width="0.7"/><circle cx="202.5" cy="432.5" r="6.0" fill="none" stroke="#6a615c" stroke-width="0.7"/><circle cx="222.6" cy="468.0" r="4.8" fill="none" stroke="#6a615c" stroke-width="0.7"/><circle cx="50.7" cy="453.4" r="4.3" fill="none" stroke="#6a615c" stroke-width="0.7"/><circle cx="125.5" cy="443.2" r="3.2" fill="none" stroke="#6a615c" stroke-width="0.7"/><circle cx="95.4" cy="404.0" r="5.9" fill="none" stroke="#6a615c" stroke-width="0.7"/><circle cx="132.8" cy="452.4" r="3.4" fill="none" stroke="#6a615c" stroke-width="0.7"/><circle cx="38.7" cy="423.3" r="5.3" fill="none" stroke="#6a615c" stroke-width="0.7"/><line x1="3.3" y1="446.7" x2="9.0" y2="453.1" stroke="#3a3430" stroke-width="0.8"/><line x1="2.1" y1="418.6" x2="6.3" y2="413.0" stroke="#3a3430" stroke-width="0.8"/><line x1="6.3" y1="413.9" x2="14.1" y2="409.4" stroke="#3a3430" stroke-width="0.8"/><line x1="3.7" y1="411.3" x2="14.8" y2="404.6" stroke="#3a3430" stroke-width="0.8"/><line x1="5.0" y1="443.3" x2="13.1" y2="439.4" stroke="#3a3430" stroke-width="0.8"/><line x1="12.0" y1="398.5" x2="16.2" y2="390.8" stroke="#3a3430" stroke-width="0.8"/><line x1="5.3" y1="443.5" x2="10.8" y2="440.1" stroke="#3a3430" stroke-width="0.8"/><line x1="9.6" y1="396.7" x2="12.7" y2="399.3" stroke="#3a3430" stroke-width="0.8"/><line x1="1.1" y1="423.6" x2="5.4" y2="425.3" stroke="#3a3430" stroke-width="0.8"/><line x1="10.2" y1="419.2" x2="15.7" y2="421.2" stroke="#3a3430" stroke-width="0.8"/><line x1="8.4" y1="395.4" x2="13.6" y2="393.4" stroke="#3a3430" stroke-width="0.8"/><line x1="6.1" y1="408.4" x2="15.0" y2="404.5" stroke="#3a3430" stroke-width="0.8"/><line x1="10.9" y1="413.1" x2="15.9" y2="406.4" stroke="#3a3430" stroke-width="0.8"/><line x1="1.5" y1="404.9" x2="12.5" y2="403.6" stroke="#3a3430" stroke-width="0.8"/><line x1="5.3" y1="449.6" x2="17.0" y2="453.8" stroke="#3a3430" stroke-width="0.8"/><line x1="2.9" y1="411.6" x2="10.4" y2="407.8" stroke="#3a3430" stroke-width="0.8"/><line x1="4.2" y1="404.8" x2="9.3" y2="408.7" stroke="#3a3430" stroke-width="0.8"/><line x1="7.2" y1="418.7" x2="14.5" y2="420.5" stroke="#3a3430" stroke-width="0.8"/><line x1="8.2" y1="393.4" x2="18.8" y2="392.8" stroke="#3a3430" stroke-width="0.8"/><line x1="4.1" y1="449.5" x2="13.9" y2="447.1" stroke="#3a3430" stroke-width="0.8"/><line x1="0.3" y1="418.2" x2="7.3" y2="416.2" stroke="#3a3430" stroke-width="0.8"/><line x1="1.2" y1="426.6" x2="6.5" y2="430.8" stroke="#3a3430" stroke-width="0.8"/><line x1="6.3" y1="409.6" x2="16.8" y2="408.7" stroke="#3a3430" stroke-width="0.8"/><line x1="1.0" y1="408.8" x2="4.5" y2="407.7" stroke="#3a3430" stroke-width="0.8"/><line x1="10.9" y1="448.4" x2="19.8" y2="442.9" stroke="#3a3430" stroke-width="0.8"/><line x1="2.9" y1="404.2" x2="9.2" y2="406.4" stroke="#3a3430" stroke-width="0.8"/><line x1="0.3" y1="421.4" x2="7.1" y2="423.9" stroke="#3a3430" stroke-width="0.8"/><line x1="9.9" y1="415.8" x2="18.3" y2="412.2" stroke="#3a3430" stroke-width="0.8"/><line x1="5.5" y1="430.1" x2="8.9" y2="430.3" stroke="#3a3430" stroke-width="0.8"/><line x1="6.0" y1="403.0" x2="11.3" y2="408.2" stroke="#3a3430" stroke-width="0.8"/><line x1="4.2" y1="403.5" x2="9.8" y2="403.9" stroke="#3a3430" stroke-width="0.8"/><line x1="4.8" y1="413.1" x2="10.7" y2="408.5" stroke="#3a3430" stroke-width="0.8"/><line x1="6.1" y1="428.0" x2="9.9" y2="429.4" stroke="#3a3430" stroke-width="0.8"/><line x1="3.7" y1="450.7" x2="15.1" y2="444.8" stroke="#3a3430" stroke-width="0.8"/><line x1="8.4" y1="412.7" x2="12.4" y2="418.7" stroke="#3a3430" stroke-width="0.8"/><line x1="10.9" y1="439.2" x2="19.6" y2="446.9" stroke="#3a3430" stroke-width="0.8"/><line x1="6.7" y1="432.6" x2="15.5" y2="438.3" stroke="#3a3430" stroke-width="0.8"/><line x1="10.3" y1="410.3" x2="15.1" y2="411.0" stroke="#3a3430" stroke-width="0.8"/><line x1="7.1" y1="413.2" x2="17.8" y2="418.8" stroke="#3a3430" stroke-width="0.8"/><line x1="8.2" y1="424.1" x2="17.5" y2="419.2" stroke="#3a3430" stroke-width="0.8"/><line x1="9.7" y1="399.6" x2="20.8" y2="401.6" stroke="#3a3430" stroke-width="0.8"/><line x1="3.3" y1="403.4" x2="11.7" y2="402.9" stroke="#3a3430" stroke-width="0.8"/><line x1="8.4" y1="397.9" x2="19.2" y2="396.7" stroke="#3a3430" stroke-width="0.8"/><line x1="5.3" y1="436.3" x2="13.7" y2="435.4" stroke="#3a3430" stroke-width="0.8"/><line x1="3.5" y1="420.0" x2="6.8" y2="416.0" stroke="#3a3430" stroke-width="0.8"/><line x1="9.9" y1="399.2" x2="13.7" y2="404.8" stroke="#3a3430" stroke-width="0.8"/><line x1="4.5" y1="423.8" x2="12.8" y2="427.3" stroke="#3a3430" stroke-width="0.8"/><line x1="3.8" y1="438.2" x2="6.8" y2="443.8" stroke="#3a3430" stroke-width="0.8"/><line x1="3.7" y1="429.5" x2="9.5" y2="433.5" stroke="#3a3430" stroke-width="0.8"/><line x1="4.5" y1="428.1" x2="10.4" y2="433.5" stroke="#3a3430" stroke-width="0.8"/><line x1="85.5" y1="409.6" x2="101.3" y2="412.3" stroke="#1a1614" stroke-width="1"/><line x1="26.1" y1="409.4" x2="44.9" y2="412.2" stroke="#1a1614" stroke-width="1"/><line x1="14.3" y1="420.0" x2="33.1" y2="418.5" stroke="#1a1614" stroke-width="1"/><line x1="85.9" y1="411.4" x2="102.3" y2="411.4" stroke="#1a1614" stroke-width="1"/><line x1="52.0" y1="408.2" x2="66.1" y2="409.4" stroke="#1a1614" stroke-width="1"/><line x1="32.0" y1="406.8" x2="36.5" y2="405.4" stroke="#1a1614" stroke-width="1"/><line x1="109.6" y1="419.4" x2="127.9" y2="420.9" stroke="#1a1614" stroke-width="1"/><line x1="14.7" y1="412.9" x2="33.8" y2="415.1" stroke="#1a1614" stroke-width="1"/><line x1="109.1" y1="420.8" x2="124.1" y2="422.3" stroke="#1a1614" stroke-width="1"/><line x1="100.6" y1="413.7" x2="104.2" y2="412.6" stroke="#1a1614" stroke-width="1"/><line x1="1.5" y1="410.9" x2="14.5" y2="409.6" stroke="#1a1614" stroke-width="1"/><line x1="27.3" y1="407.7" x2="36.4" y2="407.8" stroke="#1a1614" stroke-width="1"/><line x1="65.0" y1="423.0" x2="69.2" y2="421.5" stroke="#1a1614" stroke-width="1"/><line x1="8.5" y1="422.7" x2="22.2" y2="423.7" stroke="#1a1614" stroke-width="1"/><line x1="89.5" y1="406.0" x2="107.9" y2="405.0" stroke="#1a1614" stroke-width="1"/><line x1="69.2" y1="413.3" x2="84.8" y2="412.1" stroke="#1a1614" stroke-width="1"/><line x1="30.5" y1="410.5" x2="45.9" y2="410.2" stroke="#1a1614" stroke-width="1"/><line x1="17.1" y1="412.4" x2="29.7" y2="411.6" stroke="#1a1614" stroke-width="1"/><line x1="65.2" y1="421.2" x2="79.1" y2="423.0" stroke="#1a1614" stroke-width="1"/><line x1="33.4" y1="421.7" x2="52.4" y2="421.8" stroke="#1a1614" stroke-width="1"/><line x1="2.5" y1="407.5" x2="18.4" y2="409.8" stroke="#1a1614" stroke-width="1"/><line x1="79.7" y1="415.1" x2="91.9" y2="412.8" stroke="#1a1614" stroke-width="1"/><line x1="65.8" y1="424.0" x2="72.3" y2="424.7" stroke="#1a1614" stroke-width="1"/><line x1="93.6" y1="417.7" x2="102.5" y2="416.1" stroke="#1a1614" stroke-width="1"/><line x1="80.6" y1="422.7" x2="98.5" y2="422.1" stroke="#1a1614" stroke-width="1"/><line x1="81.9" y1="420.6" x2="91.3" y2="422.1" stroke="#1a1614" stroke-width="1"/><line x1="42.4" y1="409.6" x2="45.5" y2="411.0" stroke="#1a1614" stroke-width="1"/><line x1="82.8" y1="406.8" x2="86.8" y2="405.7" stroke="#1a1614" stroke-width="1"/><line x1="22.9" y1="419.2" x2="29.1" y2="419.7" stroke="#1a1614" stroke-width="1"/><line x1="60.6" y1="412.3" x2="78.1" y2="411.9" stroke="#1a1614" stroke-width="1"/><line x1="56.3" y1="418.0" x2="66.2" y2="416.1" stroke="#1a1614" stroke-width="1"/><line x1="104.8" y1="419.5" x2="117.1" y2="419.5" stroke="#1a1614" stroke-width="1"/><line x1="67.9" y1="411.3" x2="72.1" y2="411.6" stroke="#1a1614" stroke-width="1"/><line x1="99.0" y1="407.8" x2="118.7" y2="407.0" stroke="#1a1614" stroke-width="1"/><line x1="109.8" y1="419.9" x2="117.4" y2="418.1" stroke="#1a1614" stroke-width="1"/><line x1="97.7" y1="423.6" x2="114.4" y2="424.1" stroke="#1a1614" stroke-width="1"/><line x1="59.8" y1="420.1" x2="76.8" y2="422.1" stroke="#1a1614" stroke-width="1"/><line x1="31.7" y1="420.9" x2="50.9" y2="421.3" stroke="#1a1614" stroke-width="1"/><line x1="1.0" y1="409.4" x2="15.1" y2="408.9" stroke="#1a1614" stroke-width="1"/><line x1="101.0" y1="417.6" x2="115.8" y2="415.5" stroke="#1a1614" stroke-width="1"/></g><g clip-path="url(#cl)"><polyline points="0,461 48.3,466.5 66.7,471.8 125.5,478.2 141.8,479.5 172.3,481.1 188.4,483.2 194.5,491 204.6,507.6 220.7,511.6 246,515.5 285.6,519.2 320.5,526.3 353,535.8 383.7,527.3 431,511.5 468.7,499 509,502.5 555,502" fill="none" stroke="#fff" stroke-width="12" filter="url(#bl)"/><polyline points="0,460 48.3,465.5 66.7,470.8 125.5,477.2 141.8,478.5 172.3,480.1 188.4,482.2 194.5,490" fill="none" stroke="#fff" stroke-width="9"/></g><g clip-path="url(#cl)" stroke="#8c817b" stroke-width="0.7" opacity="0.85"><line x1="383.3" y1="472.5" x2="383.8" y2="512.7"/><line x1="148.0" y1="390.3" x2="157.0" y2="403.8"/><line x1="73.0" y1="404.5" x2="79.7" y2="404.0"/><line x1="111.6" y1="412.2" x2="94.1" y2="413.2"/><line x1="383.8" y1="512.7" x2="389.7" y2="529.8"/><line x1="204.5" y1="384.3" x2="204.5" y2="395.4"/><line x1="166.0" y1="406.5" x2="169.8" y2="421.2"/><line x1="220.6" y1="415.0" x2="226.0" y2="441.8"/><line x1="431.4" y1="407.7" x2="472.1" y2="411.0"/><line x1="265.0" y1="502.3" x2="276.1" y2="504.3"/><line x1="474.7" y1="501.7" x2="515.0" y2="505.0"/><line x1="252.0" y1="518.0" x2="291.6" y2="521.6"/><line x1="190.8" y1="470.0" x2="206.5" y2="478.0"/><line x1="339.2" y1="377.0" x2="346.2" y2="372.6"/><line x1="224.7" y1="499.9" x2="236.8" y2="502.9"/><line x1="79.1" y1="393.5" x2="96.7" y2="403.6"/><line x1="94.1" y1="413.2" x2="93.1" y2="443.7"/><line x1="392.2" y1="370.6" x2="428.0" y2="364.2"/><line x1="215.6" y1="505.3" x2="226.3" y2="514.0"/><line x1="292.9" y1="521.7" x2="326.5" y2="528.8"/><line x1="226.0" y1="441.8" x2="242.5" y2="444.2"/><line x1="425.5" y1="434.6" x2="474.7" y2="452.5"/><line x1="383.3" y1="472.5" x2="417.0" y2="503.7"/><line x1="148.0" y1="390.3" x2="147.0" y2="404.4"/><line x1="475.4" y1="487.6" x2="515.6" y2="487.9"/><line x1="246.9" y1="471.0" x2="259.0" y2="485.1"/><line x1="428.0" y1="364.2" x2="474.2" y2="370.6"/><line x1="246.9" y1="471.0" x2="265.0" y2="465.6"/><line x1="216.6" y1="488.2" x2="224.7" y2="499.9"/><line x1="111.0" y1="464.8" x2="131.5" y2="480.7"/><line x1="216.6" y1="488.2" x2="232.8" y2="468.0"/><line x1="392.2" y1="370.6" x2="394.0" y2="407.0"/><line x1="212.6" y1="398.4" x2="241.8" y2="397.8"/><line x1="431.4" y1="407.7" x2="471.6" y2="379.6"/><line x1="311.0" y1="505.0" x2="348.2" y2="509.6"/><line x1="474.7" y1="501.7" x2="515.6" y2="487.9"/><line x1="236.8" y1="502.9" x2="265.0" y2="502.3"/><line x1="182.3" y1="401.0" x2="169.8" y2="421.2"/><line x1="326.5" y1="528.8" x2="359.0" y2="538.3"/><line x1="147.8" y1="482.0" x2="204.5" y2="496.2"/><line x1="55.2" y1="405.6" x2="73.1" y2="422.7"/><line x1="94.1" y1="462.6" x2="111.0" y2="464.8"/><line x1="475.4" y1="487.6" x2="474.7" y2="501.7"/><line x1="171.2" y1="443.8" x2="190.8" y2="470.0"/><line x1="72.1" y1="393.5" x2="73.0" y2="404.5"/><line x1="224.7" y1="499.9" x2="215.6" y2="505.3"/><line x1="471.6" y1="379.6" x2="512.0" y2="407.7"/><line x1="359.0" y1="538.3" x2="383.8" y2="512.7"/><line x1="212.6" y1="398.4" x2="196.4" y2="417.6"/><line x1="79.1" y1="393.5" x2="79.7" y2="404.0"/><line x1="182.3" y1="386.3" x2="204.5" y2="384.3"/><line x1="311.0" y1="505.0" x2="326.5" y2="528.8"/><line x1="76.0" y1="439.7" x2="74.6" y2="461.6"/><line x1="292.9" y1="521.7" x2="311.0" y2="505.0"/><line x1="283.2" y1="384.3" x2="329.0" y2="399.3"/><line x1="148.0" y1="390.3" x2="157.7" y2="389.7"/><line x1="94.1" y1="462.6" x2="106.0" y2="474.3"/><line x1="242.5" y1="444.2" x2="246.9" y2="471.0"/><line x1="242.5" y1="444.2" x2="265.0" y2="446.8"/><line x1="277.2" y1="397.4" x2="316.7" y2="422.3"/><line x1="475.4" y1="487.6" x2="514.6" y2="450.5"/><line x1="72.1" y1="393.5" x2="79.1" y2="393.5"/><line x1="355.1" y1="436.7" x2="383.3" y2="472.5"/><line x1="246.9" y1="471.0" x2="232.8" y2="468.0"/><line x1="79.1" y1="393.5" x2="98.0" y2="392.2"/><line x1="216.6" y1="488.2" x2="211.6" y2="498.3"/><line x1="182.3" y1="386.3" x2="182.3" y2="401.0"/><line x1="392.2" y1="370.6" x2="388.4" y2="374.4"/><line x1="212.6" y1="398.4" x2="238.8" y2="389.7"/><line x1="182.3" y1="401.0" x2="192.8" y2="402.0"/><line x1="283.2" y1="384.3" x2="277.2" y2="397.4"/><line x1="147.8" y1="390.3" x2="147.0" y2="404.4"/><line x1="474.2" y1="370.6" x2="509.2" y2="375.7"/><line x1="55.2" y1="405.6" x2="72.7" y2="473.7"/><line x1="277.2" y1="397.4" x2="271.5" y2="419.6"/><line x1="96.7" y1="403.6" x2="111.6" y2="412.2"/><line x1="72.1" y1="393.5" x2="69.6" y2="404.5"/><line x1="428.0" y1="364.2" x2="431.4" y2="407.7"/><line x1="224.7" y1="499.9" x2="232.8" y2="468.0"/><line x1="116.0" y1="421.5" x2="115.8" y2="442.5"/><line x1="212.6" y1="398.4" x2="220.6" y2="415.0"/><line x1="441.7" y1="496.8" x2="474.7" y2="501.7"/><line x1="316.7" y1="422.3" x2="355.1" y2="436.7"/><line x1="76.0" y1="439.7" x2="93.1" y2="443.7"/><line x1="147.8" y1="390.3" x2="182.3" y2="386.3"/><line x1="208.6" y1="482.0" x2="204.5" y2="496.2"/><line x1="389.7" y1="529.8" x2="437.0" y2="514.0"/><line x1="346.2" y1="372.6" x2="428.0" y2="364.2"/><line x1="72.7" y1="473.7" x2="102.0" y2="476.2"/><line x1="146.3" y1="405.0" x2="161.0" y2="422.6"/><line x1="355.1" y1="436.7" x2="411.4" y2="463.3"/><line x1="276.1" y1="504.3" x2="310.3" y2="474.8"/><line x1="147.8" y1="390.3" x2="146.3" y2="405.0"/><line x1="169.8" y1="421.2" x2="198.0" y2="443.2"/><line x1="79.7" y1="404.0" x2="96.7" y2="403.6"/><line x1="147.8" y1="390.3" x2="157.7" y2="389.7"/><line x1="236.8" y1="381.6" x2="283.2" y2="384.3"/><line x1="474.2" y1="370.6" x2="508.7" y2="366.8"/><line x1="236.8" y1="381.6" x2="287.3" y2="377.0"/><line x1="283.2" y1="384.3" x2="287.3" y2="377.0"/><line x1="204.5" y1="395.4" x2="212.6" y2="398.4"/><line x1="411.4" y1="463.3" x2="441.7" y2="496.8"/><line x1="346.2" y1="372.6" x2="394.0" y2="407.0"/><line x1="74.6" y1="461.6" x2="90.8" y2="474.3"/><line x1="171.2" y1="443.8" x2="198.0" y2="443.2"/><line x1="437.0" y1="455.9" x2="474.7" y2="452.5"/><line x1="285.2" y1="447.8" x2="295.0" y2="453.8"/><line x1="441.7" y1="496.8" x2="475.4" y2="487.6"/><line x1="259.0" y1="485.1" x2="276.1" y2="504.3"/><line x1="328.2" y1="474.3" x2="310.3" y2="474.8"/><line x1="206.5" y1="478.0" x2="208.6" y2="482.0"/><line x1="474.2" y1="370.6" x2="471.6" y2="379.6"/><line x1="131.5" y1="480.7" x2="160.5" y2="469.0"/><line x1="157.7" y1="389.7" x2="182.3" y2="401.0"/><line x1="208.6" y1="482.0" x2="216.6" y2="488.2"/><line x1="346.2" y1="372.6" x2="329.0" y2="399.3"/><line x1="98.0" y1="392.2" x2="111.6" y2="412.2"/><line x1="72.7" y1="473.7" x2="90.8" y2="474.3"/><line x1="437.0" y1="455.9" x2="425.5" y2="434.6"/><line x1="329.0" y1="399.3" x2="316.7" y2="422.3"/><line x1="508.7" y1="366.8" x2="509.2" y2="375.7"/><line x1="276.1" y1="504.3" x2="291.6" y2="521.6"/><line x1="161.0" y1="422.6" x2="171.2" y2="443.8"/><line x1="90.8" y1="474.3" x2="102.0" y2="476.2"/><line x1="441.7" y1="496.8" x2="417.0" y2="503.7"/><line x1="226.3" y1="514.0" x2="252.0" y2="518.0"/><line x1="509.2" y1="375.7" x2="512.0" y2="407.7"/><line x1="147.8" y1="390.3" x2="111.6" y2="412.2"/><line x1="198.0" y1="443.2" x2="206.5" y2="478.0"/><line x1="169.8" y1="421.2" x2="196.4" y2="417.6"/><line x1="236.8" y1="381.6" x2="238.8" y2="389.7"/><line x1="115.8" y1="442.5" x2="171.2" y2="443.8"/><line x1="310.3" y1="450.0" x2="310.3" y2="474.8"/><line x1="394.0" y1="407.0" x2="431.4" y2="407.7"/><line x1="73.0" y1="404.5" x2="86.1" y2="413.2"/><line x1="206.5" y1="478.0" x2="232.8" y2="468.0"/><line x1="93.1" y1="443.7" x2="111.0" y2="464.8"/><line x1="232.8" y1="468.0" x2="236.8" y2="502.9"/><line x1="346.2" y1="372.6" x2="388.4" y2="374.4"/><line x1="74.6" y1="461.6" x2="72.7" y2="473.7"/><line x1="204.5" y1="496.2" x2="215.6" y2="505.3"/><line x1="147.0" y1="404.4" x2="157.0" y2="403.8"/><line x1="220.6" y1="415.0" x2="244.5" y2="417.6"/><line x1="259.0" y1="485.1" x2="236.8" y2="502.9"/><line x1="328.2" y1="474.3" x2="310.3" y2="450.0"/><line x1="115.8" y1="442.5" x2="161.0" y2="422.6"/><line x1="271.5" y1="419.6" x2="285.2" y2="447.8"/><line x1="394.0" y1="407.0" x2="411.4" y2="463.3"/><line x1="157.7" y1="389.7" x2="182.3" y2="386.3"/><line x1="265.0" y1="446.8" x2="265.0" y2="465.6"/><line x1="472.1" y1="411.0" x2="514.6" y2="450.5"/><line x1="98.0" y1="392.2" x2="96.7" y2="403.6"/><line x1="220.6" y1="415.0" x2="198.0" y2="443.2"/><line x1="204.5" y1="384.3" x2="287.3" y2="377.0"/><line x1="161.0" y1="422.6" x2="169.8" y2="421.2"/><line x1="327.0" y1="446.9" x2="349.5" y2="474.3"/><line x1="252.0" y1="518.0" x2="326.5" y2="528.8"/><line x1="226.3" y1="514.0" x2="236.8" y2="502.9"/><line x1="260.0" y1="518.0" x2="291.6" y2="521.6"/><line x1="328.2" y1="474.3" x2="348.2" y2="509.6"/><line x1="290.6" y1="441.8" x2="310.3" y2="450.0"/><line x1="93.1" y1="443.7" x2="94.1" y2="462.6"/><line x1="98.0" y1="392.2" x2="147.8" y2="390.3"/><line x1="220.6" y1="415.0" x2="241.8" y2="397.8"/><line x1="252.0" y1="518.0" x2="265.0" y2="502.3"/><line x1="348.2" y1="509.6" x2="383.8" y2="512.7"/><line x1="73.1" y1="422.7" x2="93.1" y2="443.7"/><line x1="69.6" y1="404.5" x2="73.1" y2="422.7"/><line x1="226.0" y1="441.8" x2="244.5" y2="417.6"/><line x1="425.5" y1="434.6" x2="472.1" y2="411.0"/><line x1="260.0" y1="518.0" x2="276.1" y2="504.3"/><line x1="271.5" y1="419.6" x2="265.0" y2="446.8"/><line x1="290.6" y1="441.8" x2="316.7" y2="422.3"/><line x1="190.8" y1="470.0" x2="204.5" y2="496.2"/><line x1="160.5" y1="469.0" x2="190.8" y2="470.0"/><line x1="111.6" y1="412.2" x2="146.3" y2="405.0"/><line x1="383.8" y1="512.7" x2="417.0" y2="503.7"/><line x1="472.1" y1="411.0" x2="512.0" y2="407.7"/><line x1="166.0" y1="406.5" x2="182.3" y2="401.0"/><line x1="220.6" y1="415.0" x2="196.4" y2="417.6"/><line x1="265.0" y1="465.6" x2="310.3" y2="474.8"/><line x1="111.0" y1="464.8" x2="106.0" y2="474.3"/><line x1="437.0" y1="514.0" x2="474.7" y2="501.7"/><line x1="192.8" y1="402.0" x2="204.5" y2="395.4"/><line x1="327.0" y1="446.9" x2="355.1" y2="436.7"/><line x1="388.4" y1="374.4" x2="394.0" y2="407.0"/><line x1="115.8" y1="442.5" x2="93.1" y2="443.7"/><line x1="326.5" y1="528.8" x2="348.2" y2="509.6"/><line x1="287.3" y1="377.0" x2="329.0" y2="399.3"/><line x1="55.2" y1="395.4" x2="69.6" y2="404.5"/><line x1="291.6" y1="521.6" x2="326.5" y2="528.8"/><line x1="160.5" y1="469.0" x2="204.5" y2="496.2"/><line x1="111.6" y1="412.2" x2="116.0" y2="421.5"/><line x1="349.5" y1="474.3" x2="383.3" y2="472.5"/><line x1="472.1" y1="411.0" x2="474.7" y2="452.5"/><line x1="471.6" y1="379.6" x2="509.2" y2="375.7"/><line x1="102.0" y1="476.2" x2="131.5" y2="480.7"/><line x1="79.1" y1="393.5" x2="73.0" y2="404.5"/><line x1="327.0" y1="446.9" x2="328.2" y2="474.3"/><line x1="241.8" y1="397.8" x2="271.5" y2="419.6"/><line x1="514.6" y1="450.5" x2="515.6" y2="487.9"/><line x1="94.1" y1="462.6" x2="102.0" y2="476.2"/><line x1="55.2" y1="395.4" x2="72.1" y2="393.5"/><line x1="471.6" y1="379.6" x2="472.1" y2="411.0"/><line x1="216.6" y1="488.2" x2="204.5" y2="496.2"/><line x1="212.6" y1="398.4" x2="236.8" y2="381.6"/><line x1="182.3" y1="401.0" x2="196.4" y2="417.6"/><line x1="226.0" y1="441.8" x2="232.8" y2="468.0"/><line x1="238.8" y1="389.7" x2="277.2" y2="397.4"/><line x1="287.3" y1="377.0" x2="346.2" y2="372.6"/><line x1="291.6" y1="521.6" x2="311.0" y2="505.0"/><line x1="102.0" y1="476.2" x2="106.0" y2="474.3"/><line x1="265.0" y1="465.6" x2="276.1" y2="504.3"/><line x1="157.0" y1="403.8" x2="161.0" y2="422.6"/><line x1="94.1" y1="413.2" x2="116.0" y2="421.5"/><line x1="437.0" y1="514.0" x2="417.0" y2="503.7"/><line x1="226.0" y1="441.8" x2="206.5" y2="478.0"/><line x1="55.2" y1="405.6" x2="76.0" y2="439.7"/><line x1="94.1" y1="462.6" x2="90.8" y2="474.3"/><line x1="96.7" y1="403.6" x2="94.1" y2="413.2"/><line x1="355.1" y1="436.7" x2="394.0" y2="407.0"/><line x1="316.7" y1="422.3" x2="327.0" y2="446.9"/><line x1="431.4" y1="407.7" x2="425.5" y2="434.6"/><line x1="311.0" y1="505.0" x2="310.3" y2="474.8"/><line x1="392.2" y1="370.6" x2="431.4" y2="407.7"/><line x1="147.8" y1="390.3" x2="148.0" y2="390.3"/><line x1="512.0" y1="407.7" x2="514.6" y2="450.5"/><line x1="292.9" y1="521.7" x2="291.6" y2="521.6"/><line x1="147.8" y1="482.0" x2="160.5" y2="469.0"/><line x1="238.8" y1="389.7" x2="241.8" y2="397.8"/><line x1="411.4" y1="463.3" x2="437.0" y2="455.9"/><line x1="238.8" y1="389.7" x2="283.2" y2="384.3"/><line x1="287.3" y1="377.0" x2="339.2" y2="377.0"/><line x1="242.5" y1="444.2" x2="265.0" y2="465.6"/><line x1="355.1" y1="436.7" x2="349.5" y2="474.3"/><line x1="246.9" y1="471.0" x2="236.8" y2="502.9"/><line x1="329.0" y1="399.3" x2="394.0" y2="407.0"/><line x1="428.0" y1="364.2" x2="471.6" y2="379.6"/><line x1="157.0" y1="403.8" x2="166.0" y2="406.5"/><line x1="285.2" y1="447.8" x2="290.6" y2="441.8"/><line x1="259.0" y1="485.1" x2="265.0" y2="502.3"/><line x1="316.7" y1="422.3" x2="310.3" y2="450.0"/><line x1="116.0" y1="421.5" x2="161.0" y2="422.6"/><line x1="236.8" y1="502.9" x2="252.0" y2="518.0"/><line x1="79.7" y1="404.0" x2="86.1" y2="413.2"/><line x1="394.0" y1="407.0" x2="425.5" y2="434.6"/><line x1="55.2" y1="405.6" x2="69.6" y2="404.5"/><line x1="411.4" y1="463.3" x2="383.3" y2="472.5"/><line x1="411.4" y1="463.3" x2="417.0" y2="503.7"/><line x1="171.2" y1="443.8" x2="160.5" y2="469.0"/><line x1="96.7" y1="403.6" x2="86.1" y2="413.2"/><line x1="146.3" y1="405.0" x2="157.0" y2="403.8"/><line x1="224.7" y1="499.9" x2="226.3" y2="514.0"/><line x1="86.1" y1="413.2" x2="73.1" y2="422.7"/><line x1="359.0" y1="538.3" x2="389.7" y2="529.8"/><line x1="285.2" y1="447.8" x2="265.0" y2="465.6"/><line x1="182.3" y1="386.3" x2="204.5" y2="395.4"/><line x1="198.0" y1="443.2" x2="190.8" y2="470.0"/><line x1="283.2" y1="384.3" x2="316.7" y2="422.3"/><line x1="55.2" y1="405.6" x2="74.6" y2="461.6"/><line x1="295.0" y1="453.8" x2="310.3" y2="474.8"/><line x1="208.6" y1="482.0" x2="232.8" y2="468.0"/><line x1="242.5" y1="444.2" x2="232.8" y2="468.0"/><line x1="346.2" y1="372.6" x2="392.2" y2="370.6"/><line x1="389.7" y1="529.8" x2="417.0" y2="503.7"/><line x1="72.1" y1="393.5" x2="98.0" y2="392.2"/><line x1="86.1" y1="413.2" x2="93.1" y2="443.7"/><line x1="211.6" y1="498.3" x2="215.6" y2="505.3"/><line x1="182.3" y1="386.3" x2="192.8" y2="402.0"/><line x1="259.0" y1="485.1" x2="265.0" y2="465.6"/><line x1="169.8" y1="421.2" x2="171.2" y2="443.8"/><line x1="265.0" y1="446.8" x2="285.2" y2="447.8"/><line x1="204.5" y1="395.4" x2="196.4" y2="417.6"/><line x1="411.4" y1="463.3" x2="425.5" y2="434.6"/><line x1="244.5" y1="417.6" x2="265.0" y2="446.8"/><line x1="437.0" y1="455.9" x2="441.7" y2="496.8"/><line x1="146.3" y1="405.0" x2="147.0" y2="404.4"/><line x1="474.7" y1="452.5" x2="514.6" y2="450.5"/><line x1="329.0" y1="399.3" x2="355.1" y2="436.7"/><line x1="276.1" y1="504.3" x2="311.0" y2="505.0"/><line x1="86.1" y1="413.2" x2="94.1" y2="413.2"/><line x1="196.4" y1="417.6" x2="198.0" y2="443.2"/><line x1="116.0" y1="421.5" x2="93.1" y2="443.7"/><line x1="441.7" y1="496.8" x2="437.0" y2="514.0"/><line x1="198.0" y1="443.2" x2="226.0" y2="441.8"/><line x1="290.6" y1="441.8" x2="295.0" y2="453.8"/><line x1="328.2" y1="474.3" x2="349.5" y2="474.3"/><line x1="206.5" y1="478.0" x2="204.5" y2="496.2"/><line x1="271.5" y1="419.6" x2="316.7" y2="422.3"/><line x1="93.1" y1="443.7" x2="74.6" y2="461.6"/><line x1="295.0" y1="453.8" x2="310.3" y2="450.0"/><line x1="74.6" y1="461.6" x2="94.1" y2="462.6"/><line x1="204.5" y1="496.2" x2="211.6" y2="498.3"/><line x1="474.7" y1="452.5" x2="475.4" y2="487.6"/><line x1="68.3" y1="394.1" x2="69.6" y2="404.5"/><line x1="211.6" y1="498.3" x2="224.7" y2="499.9"/><line x1="348.2" y1="509.6" x2="383.3" y2="472.5"/><line x1="106.0" y1="474.3" x2="131.5" y2="480.7"/><line x1="260.0" y1="518.0" x2="265.0" y2="502.3"/><line x1="328.2" y1="474.3" x2="311.0" y2="505.0"/><line x1="73.0" y1="404.5" x2="73.1" y2="422.7"/><line x1="131.5" y1="480.7" x2="147.8" y2="482.0"/><line x1="157.7" y1="389.7" x2="166.0" y2="406.5"/><line x1="515.6" y1="487.9" x2="515.0" y2="505.0"/><line x1="244.5" y1="417.6" x2="242.5" y2="444.2"/><line x1="204.5" y1="384.3" x2="236.8" y2="381.6"/><line x1="244.5" y1="417.6" x2="271.5" y2="419.6"/><line x1="437.0" y1="455.9" x2="475.4" y2="487.6"/><line x1="68.3" y1="394.1" x2="72.1" y2="393.5"/><line x1="98.0" y1="392.2" x2="182.3" y2="386.3"/><line x1="348.2" y1="509.6" x2="359.0" y2="538.3"/><line x1="115.8" y1="442.5" x2="131.5" y2="480.7"/><line x1="55.2" y1="395.4" x2="55.2" y2="405.6"/><line x1="204.5" y1="384.3" x2="212.6" y2="398.4"/><line x1="146.3" y1="405.0" x2="116.0" y2="421.5"/><line x1="508.7" y1="366.8" x2="512.0" y2="407.7"/><line x1="192.8" y1="402.0" x2="196.4" y2="417.6"/><line x1="73.1" y1="422.7" x2="76.0" y2="439.7"/><line x1="115.8" y1="442.5" x2="111.0" y2="464.8"/><line x1="241.8" y1="397.8" x2="244.5" y2="417.6"/><line x1="241.8" y1="397.8" x2="277.2" y2="397.4"/><line x1="115.8" y1="442.5" x2="160.5" y2="469.0"/><line x1="271.5" y1="419.6" x2="290.6" y2="441.8"/><line x1="55.2" y1="395.4" x2="68.3" y2="394.1"/><line x1="349.5" y1="474.3" x2="348.2" y2="509.6"/><line x1="157.7" y1="389.7" x2="157.0" y2="403.8"/><line x1="166.0" y1="406.5" x2="161.0" y2="422.6"/><line x1="339.2" y1="377.0" x2="329.0" y2="399.3"/><line x1="265.0" y1="465.6" x2="295.0" y2="453.8"/><line x1="252.0" y1="518.0" x2="260.0" y2="518.0"/><line x1="327.0" y1="446.9" x2="310.3" y2="450.0"/><line x1="69.6" y1="404.5" x2="73.0" y2="404.5"/></g><g stroke="#1a1a1a" stroke-width="0.85"><line x1="377.3" y1="467.5" x2="377.8" y2="507.7"/><line x1="142.0" y1="385.3" x2="151.0" y2="398.8"/><line x1="67.0" y1="399.5" x2="73.7" y2="399.0"/><line x1="105.6" y1="407.2" x2="88.1" y2="408.2"/><line x1="377.8" y1="507.7" x2="383.7" y2="524.8"/><line x1="198.5" y1="379.3" x2="198.5" y2="390.4"/><line x1="160.0" y1="401.5" x2="163.8" y2="416.2"/><line x1="214.6" y1="410.0" x2="220.0" y2="436.8"/><line x1="425.4" y1="402.7" x2="466.1" y2="406.0"/><line x1="259.0" y1="497.3" x2="270.1" y2="499.3"/><line x1="468.7" y1="496.7" x2="509.0" y2="500.0"/><line x1="246.0" y1="513.0" x2="285.6" y2="516.6"/><line x1="184.8" y1="465.0" x2="200.5" y2="473.0"/><line x1="333.2" y1="372.0" x2="340.2" y2="367.6"/><line x1="218.7" y1="494.9" x2="230.8" y2="497.9"/><line x1="73.1" y1="388.5" x2="90.7" y2="398.6"/><line x1="88.1" y1="408.2" x2="87.1" y2="438.7"/><line x1="386.2" y1="365.6" x2="422.0" y2="359.2"/><line x1="209.6" y1="500.3" x2="220.3" y2="509.0"/><line x1="286.9" y1="516.7" x2="320.5" y2="523.8"/><line x1="220.0" y1="436.8" x2="236.5" y2="439.2"/><line x1="419.5" y1="429.6" x2="468.7" y2="447.5"/><line x1="377.3" y1="467.5" x2="411.0" y2="498.7"/><line x1="142.0" y1="385.3" x2="141.0" y2="399.4"/><line x1="469.4" y1="482.6" x2="509.6" y2="482.9"/><line x1="240.9" y1="466.0" x2="253.0" y2="480.1"/><line x1="422.0" y1="359.2" x2="468.2" y2="365.6"/><line x1="240.9" y1="466.0" x2="259.0" y2="460.6"/><line x1="210.6" y1="483.2" x2="218.7" y2="494.9"/><line x1="105.0" y1="459.8" x2="125.5" y2="475.7"/><line x1="210.6" y1="483.2" x2="226.8" y2="463.0"/><line x1="386.2" y1="365.6" x2="388.0" y2="402.0"/><line x1="206.6" y1="393.4" x2="235.8" y2="392.8"/><line x1="425.4" y1="402.7" x2="465.6" y2="374.6"/><line x1="305.0" y1="500.0" x2="342.2" y2="504.6"/><line x1="468.7" y1="496.7" x2="509.6" y2="482.9"/><line x1="230.8" y1="497.9" x2="259.0" y2="497.3"/><line x1="176.3" y1="396.0" x2="163.8" y2="416.2"/><line x1="320.5" y1="523.8" x2="353.0" y2="533.3"/><line x1="141.8" y1="477.0" x2="198.5" y2="491.2"/><line x1="49.2" y1="400.6" x2="67.1" y2="417.7"/><line x1="88.1" y1="457.6" x2="105.0" y2="459.8"/><line x1="469.4" y1="482.6" x2="468.7" y2="496.7"/><line x1="165.2" y1="438.8" x2="184.8" y2="465.0"/><line x1="66.1" y1="388.5" x2="67.0" y2="399.5"/><line x1="218.7" y1="494.9" x2="209.6" y2="500.3"/><line x1="465.6" y1="374.6" x2="506.0" y2="402.7"/><line x1="353.0" y1="533.3" x2="377.8" y2="507.7"/><line x1="206.6" y1="393.4" x2="190.4" y2="412.6"/><line x1="73.1" y1="388.5" x2="73.7" y2="399.0"/><line x1="176.3" y1="381.3" x2="198.5" y2="379.3"/><line x1="305.0" y1="500.0" x2="320.5" y2="523.8"/><line x1="70.0" y1="434.7" x2="68.6" y2="456.6"/><line x1="286.9" y1="516.7" x2="305.0" y2="500.0"/><line x1="277.2" y1="379.3" x2="323.0" y2="394.3"/><line x1="142.0" y1="385.3" x2="151.7" y2="384.7"/><line x1="88.1" y1="457.6" x2="100.0" y2="469.3"/><line x1="236.5" y1="439.2" x2="240.9" y2="466.0"/><line x1="236.5" y1="439.2" x2="259.0" y2="441.8"/><line x1="271.2" y1="392.4" x2="310.7" y2="417.3"/><line x1="469.4" y1="482.6" x2="508.6" y2="445.5"/><line x1="66.1" y1="388.5" x2="73.1" y2="388.5"/><line x1="349.1" y1="431.7" x2="377.3" y2="467.5"/><line x1="240.9" y1="466.0" x2="226.8" y2="463.0"/><line x1="73.1" y1="388.5" x2="92.0" y2="387.2"/><line x1="210.6" y1="483.2" x2="205.6" y2="493.3"/><line x1="176.3" y1="381.3" x2="176.3" y2="396.0"/><line x1="386.2" y1="365.6" x2="382.4" y2="369.4"/><line x1="206.6" y1="393.4" x2="232.8" y2="384.7"/><line x1="176.3" y1="396.0" x2="186.8" y2="397.0"/><line x1="277.2" y1="379.3" x2="271.2" y2="392.4"/><line x1="141.8" y1="385.3" x2="141.0" y2="399.4"/><line x1="468.2" y1="365.6" x2="503.2" y2="370.7"/><line x1="49.2" y1="400.6" x2="66.7" y2="468.7"/><line x1="271.2" y1="392.4" x2="265.5" y2="414.6"/><line x1="90.7" y1="398.6" x2="105.6" y2="407.2"/><line x1="66.1" y1="388.5" x2="63.6" y2="399.5"/><line x1="422.0" y1="359.2" x2="425.4" y2="402.7"/><line x1="218.7" y1="494.9" x2="226.8" y2="463.0"/><line x1="110.0" y1="416.5" x2="109.8" y2="437.5"/><line x1="206.6" y1="393.4" x2="214.6" y2="410.0"/><line x1="435.7" y1="491.8" x2="468.7" y2="496.7"/><line x1="310.7" y1="417.3" x2="349.1" y2="431.7"/><line x1="70.0" y1="434.7" x2="87.1" y2="438.7"/><line x1="141.8" y1="385.3" x2="176.3" y2="381.3"/><line x1="202.6" y1="477.0" x2="198.5" y2="491.2"/><line x1="383.7" y1="524.8" x2="431.0" y2="509.0"/><line x1="340.2" y1="367.6" x2="422.0" y2="359.2"/><line x1="66.7" y1="468.7" x2="96.0" y2="471.2"/><line x1="140.3" y1="400.0" x2="155.0" y2="417.6"/><line x1="349.1" y1="431.7" x2="405.4" y2="458.3"/><line x1="270.1" y1="499.3" x2="304.3" y2="469.8"/><line x1="141.8" y1="385.3" x2="140.3" y2="400.0"/><line x1="163.8" y1="416.2" x2="192.0" y2="438.2"/><line x1="73.7" y1="399.0" x2="90.7" y2="398.6"/><line x1="141.8" y1="385.3" x2="151.7" y2="384.7"/><line x1="230.8" y1="376.6" x2="277.2" y2="379.3"/><line x1="468.2" y1="365.6" x2="502.7" y2="361.8"/><line x1="230.8" y1="376.6" x2="281.3" y2="372.0"/><line x1="277.2" y1="379.3" x2="281.3" y2="372.0"/><line x1="198.5" y1="390.4" x2="206.6" y2="393.4"/><line x1="405.4" y1="458.3" x2="435.7" y2="491.8"/><line x1="340.2" y1="367.6" x2="388.0" y2="402.0"/><line x1="68.6" y1="456.6" x2="84.8" y2="469.3"/><line x1="165.2" y1="438.8" x2="192.0" y2="438.2"/><line x1="431.0" y1="450.9" x2="468.7" y2="447.5"/><line x1="279.2" y1="442.8" x2="289.0" y2="448.8"/><line x1="435.7" y1="491.8" x2="469.4" y2="482.6"/><line x1="253.0" y1="480.1" x2="270.1" y2="499.3"/><line x1="322.2" y1="469.3" x2="304.3" y2="469.8"/><line x1="200.5" y1="473.0" x2="202.6" y2="477.0"/><line x1="468.2" y1="365.6" x2="465.6" y2="374.6"/><line x1="125.5" y1="475.7" x2="154.5" y2="464.0"/><line x1="151.7" y1="384.7" x2="176.3" y2="396.0"/><line x1="202.6" y1="477.0" x2="210.6" y2="483.2"/><line x1="340.2" y1="367.6" x2="323.0" y2="394.3"/><line x1="92.0" y1="387.2" x2="105.6" y2="407.2"/><line x1="66.7" y1="468.7" x2="84.8" y2="469.3"/><line x1="431.0" y1="450.9" x2="419.5" y2="429.6"/><line x1="323.0" y1="394.3" x2="310.7" y2="417.3"/><line x1="502.7" y1="361.8" x2="503.2" y2="370.7"/><line x1="270.1" y1="499.3" x2="285.6" y2="516.6"/><line x1="155.0" y1="417.6" x2="165.2" y2="438.8"/><line x1="84.8" y1="469.3" x2="96.0" y2="471.2"/><line x1="435.7" y1="491.8" x2="411.0" y2="498.7"/><line x1="220.3" y1="509.0" x2="246.0" y2="513.0"/><line x1="503.2" y1="370.7" x2="506.0" y2="402.7"/><line x1="141.8" y1="385.3" x2="105.6" y2="407.2"/><line x1="192.0" y1="438.2" x2="200.5" y2="473.0"/><line x1="163.8" y1="416.2" x2="190.4" y2="412.6"/><line x1="230.8" y1="376.6" x2="232.8" y2="384.7"/><line x1="109.8" y1="437.5" x2="165.2" y2="438.8"/><line x1="304.3" y1="445.0" x2="304.3" y2="469.8"/><line x1="388.0" y1="402.0" x2="425.4" y2="402.7"/><line x1="67.0" y1="399.5" x2="80.1" y2="408.2"/><line x1="200.5" y1="473.0" x2="226.8" y2="463.0"/><line x1="87.1" y1="438.7" x2="105.0" y2="459.8"/><line x1="226.8" y1="463.0" x2="230.8" y2="497.9"/><line x1="340.2" y1="367.6" x2="382.4" y2="369.4"/><line x1="68.6" y1="456.6" x2="66.7" y2="468.7"/><line x1="198.5" y1="491.2" x2="209.6" y2="500.3"/><line x1="141.0" y1="399.4" x2="151.0" y2="398.8"/><line x1="214.6" y1="410.0" x2="238.5" y2="412.6"/><line x1="253.0" y1="480.1" x2="230.8" y2="497.9"/><line x1="322.2" y1="469.3" x2="304.3" y2="445.0"/><line x1="109.8" y1="437.5" x2="155.0" y2="417.6"/><line x1="265.5" y1="414.6" x2="279.2" y2="442.8"/><line x1="388.0" y1="402.0" x2="405.4" y2="458.3"/><line x1="151.7" y1="384.7" x2="176.3" y2="381.3"/><line x1="259.0" y1="441.8" x2="259.0" y2="460.6"/><line x1="466.1" y1="406.0" x2="508.6" y2="445.5"/><line x1="92.0" y1="387.2" x2="90.7" y2="398.6"/><line x1="214.6" y1="410.0" x2="192.0" y2="438.2"/><line x1="198.5" y1="379.3" x2="281.3" y2="372.0"/><line x1="155.0" y1="417.6" x2="163.8" y2="416.2"/><line x1="321.0" y1="441.9" x2="343.5" y2="469.3"/><line x1="246.0" y1="513.0" x2="320.5" y2="523.8"/><line x1="220.3" y1="509.0" x2="230.8" y2="497.9"/><line x1="254.0" y1="513.0" x2="285.6" y2="516.6"/><line x1="322.2" y1="469.3" x2="342.2" y2="504.6"/><line x1="284.6" y1="436.8" x2="304.3" y2="445.0"/><line x1="87.1" y1="438.7" x2="88.1" y2="457.6"/><line x1="92.0" y1="387.2" x2="141.8" y2="385.3"/><line x1="214.6" y1="410.0" x2="235.8" y2="392.8"/><line x1="246.0" y1="513.0" x2="259.0" y2="497.3"/><line x1="342.2" y1="504.6" x2="377.8" y2="507.7"/><line x1="67.1" y1="417.7" x2="87.1" y2="438.7"/><line x1="63.6" y1="399.5" x2="67.1" y2="417.7"/><line x1="220.0" y1="436.8" x2="238.5" y2="412.6"/><line x1="419.5" y1="429.6" x2="466.1" y2="406.0"/><line x1="254.0" y1="513.0" x2="270.1" y2="499.3"/><line x1="265.5" y1="414.6" x2="259.0" y2="441.8"/><line x1="284.6" y1="436.8" x2="310.7" y2="417.3"/><line x1="184.8" y1="465.0" x2="198.5" y2="491.2"/><line x1="154.5" y1="464.0" x2="184.8" y2="465.0"/><line x1="105.6" y1="407.2" x2="140.3" y2="400.0"/><line x1="377.8" y1="507.7" x2="411.0" y2="498.7"/><line x1="466.1" y1="406.0" x2="506.0" y2="402.7"/><line x1="160.0" y1="401.5" x2="176.3" y2="396.0"/><line x1="214.6" y1="410.0" x2="190.4" y2="412.6"/><line x1="259.0" y1="460.6" x2="304.3" y2="469.8"/><line x1="105.0" y1="459.8" x2="100.0" y2="469.3"/><line x1="431.0" y1="509.0" x2="468.7" y2="496.7"/><line x1="186.8" y1="397.0" x2="198.5" y2="390.4"/><line x1="321.0" y1="441.9" x2="349.1" y2="431.7"/><line x1="382.4" y1="369.4" x2="388.0" y2="402.0"/><line x1="109.8" y1="437.5" x2="87.1" y2="438.7"/><line x1="320.5" y1="523.8" x2="342.2" y2="504.6"/><line x1="281.3" y1="372.0" x2="323.0" y2="394.3"/><line x1="49.2" y1="390.4" x2="63.6" y2="399.5"/><line x1="285.6" y1="516.6" x2="320.5" y2="523.8"/><line x1="154.5" y1="464.0" x2="198.5" y2="491.2"/><line x1="105.6" y1="407.2" x2="110.0" y2="416.5"/><line x1="343.5" y1="469.3" x2="377.3" y2="467.5"/><line x1="466.1" y1="406.0" x2="468.7" y2="447.5"/><line x1="465.6" y1="374.6" x2="503.2" y2="370.7"/><line x1="96.0" y1="471.2" x2="125.5" y2="475.7"/><line x1="73.1" y1="388.5" x2="67.0" y2="399.5"/><line x1="321.0" y1="441.9" x2="322.2" y2="469.3"/><line x1="235.8" y1="392.8" x2="265.5" y2="414.6"/><line x1="508.6" y1="445.5" x2="509.6" y2="482.9"/><line x1="88.1" y1="457.6" x2="96.0" y2="471.2"/><line x1="49.2" y1="390.4" x2="66.1" y2="388.5"/><line x1="465.6" y1="374.6" x2="466.1" y2="406.0"/><line x1="210.6" y1="483.2" x2="198.5" y2="491.2"/><line x1="206.6" y1="393.4" x2="230.8" y2="376.6"/><line x1="176.3" y1="396.0" x2="190.4" y2="412.6"/><line x1="220.0" y1="436.8" x2="226.8" y2="463.0"/><line x1="232.8" y1="384.7" x2="271.2" y2="392.4"/><line x1="281.3" y1="372.0" x2="340.2" y2="367.6"/><line x1="285.6" y1="516.6" x2="305.0" y2="500.0"/><line x1="96.0" y1="471.2" x2="100.0" y2="469.3"/><line x1="259.0" y1="460.6" x2="270.1" y2="499.3"/><line x1="151.0" y1="398.8" x2="155.0" y2="417.6"/><line x1="88.1" y1="408.2" x2="110.0" y2="416.5"/><line x1="431.0" y1="509.0" x2="411.0" y2="498.7"/><line x1="220.0" y1="436.8" x2="200.5" y2="473.0"/><line x1="49.2" y1="400.6" x2="70.0" y2="434.7"/><line x1="88.1" y1="457.6" x2="84.8" y2="469.3"/><line x1="90.7" y1="398.6" x2="88.1" y2="408.2"/><line x1="349.1" y1="431.7" x2="388.0" y2="402.0"/><line x1="310.7" y1="417.3" x2="321.0" y2="441.9"/><line x1="425.4" y1="402.7" x2="419.5" y2="429.6"/><line x1="305.0" y1="500.0" x2="304.3" y2="469.8"/><line x1="386.2" y1="365.6" x2="425.4" y2="402.7"/><line x1="141.8" y1="385.3" x2="142.0" y2="385.3"/><line x1="506.0" y1="402.7" x2="508.6" y2="445.5"/><line x1="286.9" y1="516.7" x2="285.6" y2="516.6"/><line x1="141.8" y1="477.0" x2="154.5" y2="464.0"/><line x1="232.8" y1="384.7" x2="235.8" y2="392.8"/><line x1="405.4" y1="458.3" x2="431.0" y2="450.9"/><line x1="232.8" y1="384.7" x2="277.2" y2="379.3"/><line x1="281.3" y1="372.0" x2="333.2" y2="372.0"/><line x1="236.5" y1="439.2" x2="259.0" y2="460.6"/><line x1="349.1" y1="431.7" x2="343.5" y2="469.3"/><line x1="240.9" y1="466.0" x2="230.8" y2="497.9"/><line x1="323.0" y1="394.3" x2="388.0" y2="402.0"/><line x1="422.0" y1="359.2" x2="465.6" y2="374.6"/><line x1="151.0" y1="398.8" x2="160.0" y2="401.5"/><line x1="279.2" y1="442.8" x2="284.6" y2="436.8"/><line x1="253.0" y1="480.1" x2="259.0" y2="497.3"/><line x1="310.7" y1="417.3" x2="304.3" y2="445.0"/><line x1="110.0" y1="416.5" x2="155.0" y2="417.6"/><line x1="230.8" y1="497.9" x2="246.0" y2="513.0"/><line x1="73.7" y1="399.0" x2="80.1" y2="408.2"/><line x1="388.0" y1="402.0" x2="419.5" y2="429.6"/><line x1="49.2" y1="400.6" x2="63.6" y2="399.5"/><line x1="405.4" y1="458.3" x2="377.3" y2="467.5"/><line x1="405.4" y1="458.3" x2="411.0" y2="498.7"/><line x1="165.2" y1="438.8" x2="154.5" y2="464.0"/><line x1="90.7" y1="398.6" x2="80.1" y2="408.2"/><line x1="140.3" y1="400.0" x2="151.0" y2="398.8"/><line x1="218.7" y1="494.9" x2="220.3" y2="509.0"/><line x1="80.1" y1="408.2" x2="67.1" y2="417.7"/><line x1="353.0" y1="533.3" x2="383.7" y2="524.8"/><line x1="279.2" y1="442.8" x2="259.0" y2="460.6"/><line x1="176.3" y1="381.3" x2="198.5" y2="390.4"/><line x1="192.0" y1="438.2" x2="184.8" y2="465.0"/><line x1="277.2" y1="379.3" x2="310.7" y2="417.3"/><line x1="49.2" y1="400.6" x2="68.6" y2="456.6"/><line x1="289.0" y1="448.8" x2="304.3" y2="469.8"/><line x1="202.6" y1="477.0" x2="226.8" y2="463.0"/><line x1="236.5" y1="439.2" x2="226.8" y2="463.0"/><line x1="340.2" y1="367.6" x2="386.2" y2="365.6"/><line x1="383.7" y1="524.8" x2="411.0" y2="498.7"/><line x1="66.1" y1="388.5" x2="92.0" y2="387.2"/><line x1="80.1" y1="408.2" x2="87.1" y2="438.7"/><line x1="205.6" y1="493.3" x2="209.6" y2="500.3"/><line x1="176.3" y1="381.3" x2="186.8" y2="397.0"/><line x1="253.0" y1="480.1" x2="259.0" y2="460.6"/><line x1="163.8" y1="416.2" x2="165.2" y2="438.8"/><line x1="259.0" y1="441.8" x2="279.2" y2="442.8"/><line x1="198.5" y1="390.4" x2="190.4" y2="412.6"/><line x1="405.4" y1="458.3" x2="419.5" y2="429.6"/><line x1="238.5" y1="412.6" x2="259.0" y2="441.8"/><line x1="431.0" y1="450.9" x2="435.7" y2="491.8"/><line x1="140.3" y1="400.0" x2="141.0" y2="399.4"/><line x1="468.7" y1="447.5" x2="508.6" y2="445.5"/><line x1="323.0" y1="394.3" x2="349.1" y2="431.7"/><line x1="270.1" y1="499.3" x2="305.0" y2="500.0"/><line x1="80.1" y1="408.2" x2="88.1" y2="408.2"/><line x1="190.4" y1="412.6" x2="192.0" y2="438.2"/><line x1="110.0" y1="416.5" x2="87.1" y2="438.7"/><line x1="435.7" y1="491.8" x2="431.0" y2="509.0"/><line x1="192.0" y1="438.2" x2="220.0" y2="436.8"/><line x1="284.6" y1="436.8" x2="289.0" y2="448.8"/><line x1="322.2" y1="469.3" x2="343.5" y2="469.3"/><line x1="200.5" y1="473.0" x2="198.5" y2="491.2"/><line x1="265.5" y1="414.6" x2="310.7" y2="417.3"/><line x1="87.1" y1="438.7" x2="68.6" y2="456.6"/><line x1="289.0" y1="448.8" x2="304.3" y2="445.0"/><line x1="68.6" y1="456.6" x2="88.1" y2="457.6"/><line x1="198.5" y1="491.2" x2="205.6" y2="493.3"/><line x1="468.7" y1="447.5" x2="469.4" y2="482.6"/><line x1="62.3" y1="389.1" x2="63.6" y2="399.5"/><line x1="205.6" y1="493.3" x2="218.7" y2="494.9"/><line x1="342.2" y1="504.6" x2="377.3" y2="467.5"/><line x1="100.0" y1="469.3" x2="125.5" y2="475.7"/><line x1="254.0" y1="513.0" x2="259.0" y2="497.3"/><line x1="322.2" y1="469.3" x2="305.0" y2="500.0"/><line x1="67.0" y1="399.5" x2="67.1" y2="417.7"/><line x1="125.5" y1="475.7" x2="141.8" y2="477.0"/><line x1="151.7" y1="384.7" x2="160.0" y2="401.5"/><line x1="509.6" y1="482.9" x2="509.0" y2="500.0"/><line x1="238.5" y1="412.6" x2="236.5" y2="439.2"/><line x1="198.5" y1="379.3" x2="230.8" y2="376.6"/><line x1="238.5" y1="412.6" x2="265.5" y2="414.6"/><line x1="431.0" y1="450.9" x2="469.4" y2="482.6"/><line x1="62.3" y1="389.1" x2="66.1" y2="388.5"/><line x1="92.0" y1="387.2" x2="176.3" y2="381.3"/><line x1="342.2" y1="504.6" x2="353.0" y2="533.3"/><line x1="109.8" y1="437.5" x2="125.5" y2="475.7"/><line x1="49.2" y1="390.4" x2="49.2" y2="400.6"/><line x1="198.5" y1="379.3" x2="206.6" y2="393.4"/><line x1="140.3" y1="400.0" x2="110.0" y2="416.5"/><line x1="502.7" y1="361.8" x2="506.0" y2="402.7"/><line x1="186.8" y1="397.0" x2="190.4" y2="412.6"/><line x1="67.1" y1="417.7" x2="70.0" y2="434.7"/><line x1="109.8" y1="437.5" x2="105.0" y2="459.8"/><line x1="235.8" y1="392.8" x2="238.5" y2="412.6"/><line x1="235.8" y1="392.8" x2="271.2" y2="392.4"/><line x1="109.8" y1="437.5" x2="154.5" y2="464.0"/><line x1="265.5" y1="414.6" x2="284.6" y2="436.8"/><line x1="49.2" y1="390.4" x2="62.3" y2="389.1"/><line x1="343.5" y1="469.3" x2="342.2" y2="504.6"/><line x1="151.7" y1="384.7" x2="151.0" y2="398.8"/><line x1="160.0" y1="401.5" x2="155.0" y2="417.6"/><line x1="333.2" y1="372.0" x2="323.0" y2="394.3"/><line x1="259.0" y1="460.6" x2="289.0" y2="448.8"/><line x1="246.0" y1="513.0" x2="254.0" y2="513.0"/><line x1="321.0" y1="441.9" x2="304.3" y2="445.0"/><line x1="63.6" y1="399.5" x2="67.0" y2="399.5"/></g><g clip-path="url(#cr)" stroke="#8f847e" stroke-width="0.7"><line x1="717.0" y1="314.5" x2="859.0" y2="314.0"/><line x1="712.9" y1="381.4" x2="859.0" y2="314.0"/><line x1="712.9" y1="381.4" x2="856.6" y2="436.5"/><line x1="712.2" y1="441.2" x2="856.0" y2="504.0"/><line x1="707.8" y1="536.0" x2="856.0" y2="504.0"/><line x1="707.8" y1="536.0" x2="853.0" y2="563.5"/><line x1="867.0" y1="299.0" x2="996.0" y2="314.0"/><line x1="867.0" y1="322.0" x2="997.0" y2="372.0"/><line x1="866.0" y1="381.0" x2="998.0" y2="436.5"/><line x1="864.6" y1="444.5" x2="997.0" y2="507.5"/><line x1="863.0" y1="554.0" x2="997.0" y2="507.5"/><line x1="863.0" y1="554.0" x2="997.0" y2="569.6"/><line x1="1003.0" y1="292.4" x2="1051.0" y2="320.0"/><line x1="1004.0" y1="322.0" x2="1051.0" y2="374.0"/><line x1="1005.0" y1="380.0" x2="1050.0" y2="437.0"/><line x1="1005.0" y1="515.5" x2="1050.0" y2="437.0"/><line x1="1006.0" y1="555.5" x2="1052.0" y2="503.0"/><line x1="1005.0" y1="577.6" x2="1051.0" y2="542.0"/><line x1="1059.0" y1="328.0" x2="1108.5" y2="293.0"/><line x1="1059.0" y1="382.0" x2="1107.0" y2="323.4"/><line x1="1058.0" y1="445.0" x2="1107.0" y2="377.8"/><line x1="1060.0" y1="511.0" x2="1107.0" y2="437.9"/><line x1="1059.0" y1="550.0" x2="1108.5" y2="501.0"/><line x1="1060.0" y1="569.8" x2="1110.0" y2="540.7"/><line x1="1115.0" y1="331.4" x2="1190.0" y2="293.5"/><line x1="1115.0" y1="331.4" x2="1187.0" y2="381.0"/><line x1="1115.0" y1="385.8" x2="1188.0" y2="440.0"/><line x1="1115.0" y1="445.9" x2="1190.0" y2="504.0"/><line x1="1116.5" y1="509.0" x2="1191.0" y2="542.0"/><line x1="1118.0" y1="548.7" x2="1193.0" y2="555.3"/><line x1="1196.0" y1="331.4" x2="1282.0" y2="292.0"/><line x1="1196.0" y1="331.4" x2="1282.0" y2="384.0"/><line x1="1196.0" y1="448.0" x2="1282.0" y2="384.0"/><line x1="1196.0" y1="448.0" x2="1282.0" y2="506.0"/><line x1="1199.0" y1="550.0" x2="1282.0" y2="506.0"/><line x1="1199.0" y1="550.0" x2="1282.0" y2="557.0"/><line x1="872.0" y1="294.0" x2="871.0" y2="317.0"/><line x1="872.0" y1="317.0" x2="870.0" y2="376.0"/><line x1="871.0" y1="376.0" x2="868.6" y2="439.5"/><line x1="869.6" y1="439.5" x2="868.0" y2="507.0"/><line x1="869.0" y1="507.0" x2="867.0" y2="549.0"/><line x1="868.0" y1="549.0" x2="865.0" y2="566.5"/><line x1="1008.0" y1="287.4" x2="1008.0" y2="317.0"/><line x1="1009.0" y1="317.0" x2="1009.0" y2="375.0"/><line x1="1010.0" y1="375.0" x2="1010.0" y2="439.5"/><line x1="1011.0" y1="439.5" x2="1009.0" y2="510.5"/><line x1="1010.0" y1="510.5" x2="1010.0" y2="550.5"/><line x1="1011.0" y1="550.5" x2="1009.0" y2="572.6"/><line x1="1065.0" y1="292.8" x2="1063.0" y2="323.0"/><line x1="1064.0" y1="323.0" x2="1063.0" y2="377.0"/><line x1="1064.0" y1="377.0" x2="1062.0" y2="440.0"/><line x1="1063.0" y1="440.0" x2="1064.0" y2="506.0"/><line x1="1065.0" y1="506.0" x2="1063.0" y2="545.0"/><line x1="1064.0" y1="545.0" x2="1064.0" y2="564.8"/><line x1="1121.5" y1="296.0" x2="1119.0" y2="326.4"/><line x1="1120.0" y1="326.4" x2="1119.0" y2="380.8"/><line x1="1120.0" y1="380.8" x2="1119.0" y2="440.9"/><line x1="1120.0" y1="440.9" x2="1120.5" y2="504.0"/><line x1="1121.5" y1="504.0" x2="1122.0" y2="543.7"/><line x1="1123.0" y1="543.7" x2="1124.0" y2="559.7"/><line x1="1203.0" y1="296.5" x2="1200.0" y2="326.4"/><line x1="1201.0" y1="326.4" x2="1199.0" y2="384.0"/><line x1="1200.0" y1="384.0" x2="1200.0" y2="443.0"/><line x1="1201.0" y1="443.0" x2="1202.0" y2="507.0"/><line x1="1203.0" y1="507.0" x2="1203.0" y2="545.0"/><line x1="1204.0" y1="545.0" x2="1205.0" y2="558.3"/><line x1="1295.0" y1="295.0" x2="1294.0" y2="327.0"/><line x1="1295.0" y1="327.0" x2="1294.0" y2="387.0"/><line x1="1295.0" y1="387.0" x2="1294.0" y2="445.0"/><line x1="1295.0" y1="445.0" x2="1294.0" y2="509.0"/><line x1="1295.0" y1="509.0" x2="1294.0" y2="547.0"/><line x1="1295.0" y1="547.0" x2="1294.0" y2="560.0"/></g><g stroke="#111" stroke-width="0.85"><line x1="717.0" y1="312.5" x2="715.6" y2="331.2"/><line x1="715.6" y1="331.2" x2="712.9" y2="379.4"/><line x1="712.9" y1="379.4" x2="712.2" y2="439.2"/><line x1="712.2" y1="439.2" x2="709.5" y2="501.0"/><line x1="709.5" y1="501.0" x2="707.8" y2="534.0"/><line x1="707.8" y1="534.0" x2="707.8" y2="544.5"/><line x1="867.0" y1="297.0" x2="867.0" y2="320.0"/><line x1="867.0" y1="320.0" x2="866.0" y2="379.0"/><line x1="866.0" y1="379.0" x2="864.6" y2="442.5"/><line x1="864.6" y1="442.5" x2="864.0" y2="510.0"/><line x1="864.0" y1="510.0" x2="863.0" y2="552.0"/><line x1="863.0" y1="552.0" x2="861.0" y2="569.5"/><line x1="1003.0" y1="290.4" x2="1004.0" y2="320.0"/><line x1="1004.0" y1="320.0" x2="1005.0" y2="378.0"/><line x1="1005.0" y1="378.0" x2="1006.0" y2="442.5"/><line x1="1006.0" y1="442.5" x2="1005.0" y2="513.5"/><line x1="1005.0" y1="513.5" x2="1006.0" y2="553.5"/><line x1="1006.0" y1="553.5" x2="1005.0" y2="575.6"/><line x1="1060.0" y1="295.8" x2="1059.0" y2="326.0"/><line x1="1059.0" y1="326.0" x2="1059.0" y2="380.0"/><line x1="1059.0" y1="380.0" x2="1058.0" y2="443.0"/><line x1="1058.0" y1="443.0" x2="1060.0" y2="509.0"/><line x1="1060.0" y1="509.0" x2="1059.0" y2="548.0"/><line x1="1059.0" y1="548.0" x2="1060.0" y2="567.8"/><line x1="1116.5" y1="299.0" x2="1115.0" y2="329.4"/><line x1="1115.0" y1="329.4" x2="1115.0" y2="383.8"/><line x1="1115.0" y1="383.8" x2="1115.0" y2="443.9"/><line x1="1115.0" y1="443.9" x2="1116.5" y2="507.0"/><line x1="1116.5" y1="507.0" x2="1118.0" y2="546.7"/><line x1="1118.0" y1="546.7" x2="1120.0" y2="562.7"/><line x1="1198.0" y1="299.5" x2="1196.0" y2="329.4"/><line x1="1196.0" y1="329.4" x2="1195.0" y2="387.0"/><line x1="1195.0" y1="387.0" x2="1196.0" y2="446.0"/><line x1="1196.0" y1="446.0" x2="1198.0" y2="510.0"/><line x1="1198.0" y1="510.0" x2="1199.0" y2="548.0"/><line x1="1199.0" y1="548.0" x2="1201.0" y2="561.3"/><line x1="1290.0" y1="298.0" x2="1290.0" y2="330.0"/><line x1="1290.0" y1="330.0" x2="1290.0" y2="390.0"/><line x1="1290.0" y1="390.0" x2="1290.0" y2="448.0"/><line x1="1290.0" y1="448.0" x2="1290.0" y2="512.0"/><line x1="1290.0" y1="512.0" x2="1290.0" y2="550.0"/><line x1="1290.0" y1="550.0" x2="1290.0" y2="563.0"/><line x1="717.0" y1="312.5" x2="867.0" y2="297.0"/><line x1="715.6" y1="331.2" x2="867.0" y2="320.0"/><line x1="712.9" y1="379.4" x2="866.0" y2="379.0"/><line x1="712.2" y1="439.2" x2="864.6" y2="442.5"/><line x1="709.5" y1="501.0" x2="864.0" y2="510.0"/><line x1="707.8" y1="534.0" x2="863.0" y2="552.0"/><line x1="707.8" y1="544.5" x2="861.0" y2="569.5"/><line x1="715.6" y1="331.2" x2="867.0" y2="297.0"/><line x1="715.6" y1="331.2" x2="866.0" y2="379.0"/><line x1="712.2" y1="439.2" x2="866.0" y2="379.0"/><line x1="709.5" y1="501.0" x2="864.6" y2="442.5"/><line x1="709.5" y1="501.0" x2="863.0" y2="552.0"/><line x1="707.8" y1="544.5" x2="863.0" y2="552.0"/><line x1="867.0" y1="297.0" x2="1003.0" y2="290.4"/><line x1="867.0" y1="320.0" x2="1004.0" y2="320.0"/><line x1="866.0" y1="379.0" x2="1005.0" y2="378.0"/><line x1="864.6" y1="442.5" x2="1006.0" y2="442.5"/><line x1="864.0" y1="510.0" x2="1005.0" y2="513.5"/><line x1="863.0" y1="552.0" x2="1006.0" y2="553.5"/><line x1="861.0" y1="569.5" x2="1005.0" y2="575.6"/><line x1="867.0" y1="320.0" x2="1003.0" y2="290.4"/><line x1="866.0" y1="379.0" x2="1004.0" y2="320.0"/><line x1="864.6" y1="442.5" x2="1005.0" y2="378.0"/><line x1="864.0" y1="510.0" x2="1006.0" y2="442.5"/><line x1="864.0" y1="510.0" x2="1006.0" y2="553.5"/><line x1="861.0" y1="569.5" x2="1006.0" y2="553.5"/><line x1="1003.0" y1="290.4" x2="1060.0" y2="295.8"/><line x1="1004.0" y1="320.0" x2="1059.0" y2="326.0"/><line x1="1005.0" y1="378.0" x2="1059.0" y2="380.0"/><line x1="1006.0" y1="442.5" x2="1058.0" y2="443.0"/><line x1="1005.0" y1="513.5" x2="1060.0" y2="509.0"/><line x1="1006.0" y1="553.5" x2="1059.0" y2="548.0"/><line x1="1005.0" y1="575.6" x2="1060.0" y2="567.8"/><line x1="1004.0" y1="320.0" x2="1060.0" y2="295.8"/><line x1="1005.0" y1="378.0" x2="1059.0" y2="326.0"/><line x1="1006.0" y1="442.5" x2="1059.0" y2="380.0"/><line x1="1006.0" y1="442.5" x2="1060.0" y2="509.0"/><line x1="1005.0" y1="513.5" x2="1059.0" y2="548.0"/><line x1="1006.0" y1="553.5" x2="1060.0" y2="567.8"/><line x1="1060.0" y1="295.8" x2="1116.5" y2="299.0"/><line x1="1059.0" y1="326.0" x2="1115.0" y2="329.4"/><line x1="1059.0" y1="380.0" x2="1115.0" y2="383.8"/><line x1="1058.0" y1="443.0" x2="1115.0" y2="443.9"/><line x1="1060.0" y1="509.0" x2="1116.5" y2="507.0"/><line x1="1059.0" y1="548.0" x2="1118.0" y2="546.7"/><line x1="1060.0" y1="567.8" x2="1120.0" y2="562.7"/><line x1="1060.0" y1="295.8" x2="1115.0" y2="329.4"/><line x1="1059.0" y1="326.0" x2="1115.0" y2="383.8"/><line x1="1059.0" y1="380.0" x2="1115.0" y2="443.9"/><line x1="1058.0" y1="443.0" x2="1116.5" y2="507.0"/><line x1="1060.0" y1="509.0" x2="1118.0" y2="546.7"/><line x1="1059.0" y1="548.0" x2="1120.0" y2="562.7"/><line x1="1116.5" y1="299.0" x2="1198.0" y2="299.5"/><line x1="1115.0" y1="329.4" x2="1196.0" y2="329.4"/><line x1="1115.0" y1="383.8" x2="1195.0" y2="387.0"/><line x1="1115.0" y1="443.9" x2="1196.0" y2="446.0"/><line x1="1116.5" y1="507.0" x2="1198.0" y2="510.0"/><line x1="1118.0" y1="546.7" x2="1199.0" y2="548.0"/><line x1="1120.0" y1="562.7" x2="1201.0" y2="561.3"/><line x1="1116.5" y1="299.0" x2="1196.0" y2="329.4"/><line x1="1115.0" y1="383.8" x2="1196.0" y2="329.4"/><line x1="1115.0" y1="443.9" x2="1195.0" y2="387.0"/><line x1="1116.5" y1="507.0" x2="1196.0" y2="446.0"/><line x1="1118.0" y1="546.7" x2="1198.0" y2="510.0"/><line x1="1120.0" y1="562.7" x2="1199.0" y2="548.0"/><line x1="1198.0" y1="299.5" x2="1290.0" y2="298.0"/><line x1="1196.0" y1="329.4" x2="1290.0" y2="330.0"/><line x1="1195.0" y1="387.0" x2="1290.0" y2="390.0"/><line x1="1196.0" y1="446.0" x2="1290.0" y2="448.0"/><line x1="1198.0" y1="510.0" x2="1290.0" y2="512.0"/><line x1="1199.0" y1="548.0" x2="1290.0" y2="550.0"/><line x1="1201.0" y1="561.3" x2="1290.0" y2="563.0"/><line x1="1198.0" y1="299.5" x2="1290.0" y2="330.0"/><line x1="1195.0" y1="387.0" x2="1290.0" y2="330.0"/><line x1="1195.0" y1="387.0" x2="1290.0" y2="448.0"/><line x1="1198.0" y1="510.0" x2="1290.0" y2="448.0"/><line x1="1198.0" y1="510.0" x2="1290.0" y2="550.0"/><line x1="1201.0" y1="561.3" x2="1290.0" y2="550.0"/></g><g stroke="url(#og)" stroke-width="0.9"><line x1="570.2" y1="356.6" x2="717" y2="312.5"/><line x1="570.9" y1="367.9" x2="715.6" y2="331.2"/><line x1="570.9" y1="367.9" x2="712.9" y2="379.4"/><line x1="570.9" y1="402.5" x2="712.9" y2="379.4"/><line x1="570.9" y1="402.5" x2="712.2" y2="439.2"/><line x1="571.2" y1="440.9" x2="712.2" y2="439.2"/><line x1="571.2" y1="440.9" x2="709.5" y2="501"/><line x1="571.2" y1="476.6" x2="709.5" y2="501"/><line x1="571.2" y1="476.6" x2="707.8" y2="534"/><line x1="570.2" y1="492.6" x2="707.8" y2="534"/><line x1="570.2" y1="492.6" x2="707.8" y2="544.5"/><line x1="570.2" y1="497" x2="707.8" y2="544.5"/><line x1="570.2" y1="356.6" x2="715.6" y2="331.2"/><line x1="570.9" y1="367.9" x2="717" y2="312.5"/></g><polyline points="570.2,356.6 570.9,367.9 570.9,402.5 571.2,440.9 571.2,476.6 570.2,492.6 570.2,497" fill="none" stroke="#f08a2a" stroke-width="1.5"/><g stroke="url(#og2)" stroke-width="0.9"><line x1="502.7" y1="361.8" x2="546.3" y2="361.8"/><line x1="503.2" y1="370.7" x2="546.8" y2="370.7"/><line x1="506" y1="402.7" x2="550" y2="402.7"/><line x1="508.6" y1="445.5" x2="552.2" y2="445.5"/><line x1="509.6" y1="476.2" x2="553" y2="476.2"/><line x1="509.6" y1="482.9" x2="552.7" y2="482.9"/><line x1="509" y1="500" x2="554" y2="500"/></g><polyline points="546.3,361.8 546.8,370.7 550,402.7 552.2,445.5 553,476.2 552.7,482.9 554,500" fill="none" stroke="#f08a2a" stroke-width="1.5"/><g clip-path="url(#cl)"><polyline points="417.5,179 415.2,430 417.9,680 420.4,430 417.5,179" fill="none" stroke="#3a3634" stroke-width="1"/></g><g fill="none" stroke="#2a2624" stroke-width="0.9"><circle cx="294.8" cy="433.6" r="7" /><circle cx="219.6" cy="452" r="4"/><circle cx="342.8" cy="461.6" r="5"/><circle cx="292.4" cy="468" r="4"/><circle cx="183" cy="418" r="6"/><circle cx="152" cy="432" r="5"/><circle cx="186" cy="466" r="3.5"/><polyline points="198,478 240,462 290,458 345,452"/><polyline points="205,484 250,474 290,472 345,468"/><polyline points="290,458 288,478"/><polyline points="215,470 225,447 232,470"/><polyline points="295,433 330,432 360,424 420,429"/><polyline points="170,422.5 360,421"/><polyline points="170,438 300,437 400,436"/><polyline points="60,420 120,418 180,420"/><polyline points="80,440 140,445 200,446"/></g><circle cx="418.2" cy="429.6" r="33.3" fill="none" stroke="#3a3a3a" stroke-width="0.9"/><polyline points="250,415 405,419.4 419.5,429.6 405,442.4 250,450" fill="none" stroke="#333" stroke-width="0.9"/><circle cx="1090" cy="429.6" r="41.8" fill="none" stroke="#3a3a3a" stroke-width="0.9"/><polyline points="550,414 1023,361 1090,429.6 1023,498 555,446" fill="none" stroke="#222" stroke-width="0.9"/><line x1="1090" y1="429.6" x2="1250" y2="405" stroke="#222" stroke-width="0.9"/><line x1="1090" y1="429.6" x2="1250" y2="445" stroke="#555" stroke-width="0.7"/><line x1="419.5" y1="429.6" x2="640.5" y2="426.3" stroke="#222" stroke-width="0.8"/><line x1="430" y1="436" x2="571" y2="436" stroke="#333" stroke-width="0.8"/><line x1="330" y1="420" x2="550" y2="414" stroke="#333" stroke-width="0.8"/><line x1="330" y1="440" x2="555" y2="446" stroke="#333" stroke-width="0.8"/><g stroke="#d9a382" stroke-width="0.55" opacity="0.5"><line x1="570.2" y1="356.6" x2="712.9" y2="379.4"/><line x1="570.9" y1="367.9" x2="712.2" y2="439.2"/><line x1="570.9" y1="402.5" x2="709.5" y2="501"/><line x1="571.2" y1="440.9" x2="707.8" y2="534"/><line x1="571.2" y1="476.6" x2="707.8" y2="544.5"/><line x1="570.9" y1="402.5" x2="717" y2="312.5"/><line x1="571.2" y1="440.9" x2="715.6" y2="331.2"/><line x1="571.2" y1="476.6" x2="712.9" y2="379.4"/><line x1="570.2" y1="492.6" x2="712.2" y2="439.2"/><line x1="570.2" y1="497" x2="709.5" y2="501"/></g><g fill="#000"><rect x="47.2" y="388.4" width="4" height="4" rx="1"/><rect x="60.3" y="387.1" width="4" height="4" rx="1"/><rect x="64.1" y="386.5" width="4" height="4" rx="1"/><rect x="71.1" y="386.5" width="4" height="4" rx="1"/><rect x="90.0" y="385.2" width="4" height="4" rx="1"/><rect x="139.8" y="383.3" width="4" height="4" rx="1"/><rect x="47.2" y="398.6" width="4" height="4" rx="1"/><rect x="61.6" y="397.5" width="4" height="4" rx="1"/><rect x="65.0" y="397.5" width="4" height="4" rx="1"/><rect x="71.7" y="397.0" width="4" height="4" rx="1"/><rect x="88.7" y="396.6" width="4" height="4" rx="1"/><rect x="103.6" y="405.2" width="4" height="4" rx="1"/><rect x="138.3" y="398.0" width="4" height="4" rx="1"/><rect x="78.1" y="406.2" width="4" height="4" rx="1"/><rect x="86.1" y="406.2" width="4" height="4" rx="1"/><rect x="65.1" y="415.7" width="4" height="4" rx="1"/><rect x="108.0" y="414.5" width="4" height="4" rx="1"/><rect x="68.0" y="432.7" width="4" height="4" rx="1"/><rect x="107.8" y="435.5" width="4" height="4" rx="1"/><rect x="85.1" y="436.7" width="4" height="4" rx="1"/><rect x="66.6" y="454.6" width="4" height="4" rx="1"/><rect x="86.1" y="455.6" width="4" height="4" rx="1"/><rect x="103.0" y="457.8" width="4" height="4" rx="1"/><rect x="64.7" y="466.7" width="4" height="4" rx="1"/><rect x="82.8" y="467.3" width="4" height="4" rx="1"/><rect x="94.0" y="469.2" width="4" height="4" rx="1"/><rect x="98.0" y="467.3" width="4" height="4" rx="1"/><rect x="123.5" y="473.7" width="4" height="4" rx="1"/><rect x="139.8" y="475.0" width="4" height="4" rx="1"/><rect x="140.0" y="383.3" width="4" height="4" rx="1"/><rect x="149.7" y="382.7" width="4" height="4" rx="1"/><rect x="139.0" y="397.4" width="4" height="4" rx="1"/><rect x="149.0" y="396.8" width="4" height="4" rx="1"/><rect x="158.0" y="399.5" width="4" height="4" rx="1"/><rect x="153.0" y="415.6" width="4" height="4" rx="1"/><rect x="174.3" y="379.3" width="4" height="4" rx="1"/><rect x="174.3" y="394.0" width="4" height="4" rx="1"/><rect x="184.8" y="395.0" width="4" height="4" rx="1"/><rect x="161.8" y="414.2" width="4" height="4" rx="1"/><rect x="163.2" y="436.8" width="4" height="4" rx="1"/><rect x="152.5" y="462.0" width="4" height="4" rx="1"/><rect x="196.5" y="377.3" width="4" height="4" rx="1"/><rect x="196.5" y="388.4" width="4" height="4" rx="1"/><rect x="204.6" y="391.4" width="4" height="4" rx="1"/><rect x="212.6" y="408.0" width="4" height="4" rx="1"/><rect x="188.4" y="410.6" width="4" height="4" rx="1"/><rect x="190.0" y="436.2" width="4" height="4" rx="1"/><rect x="218.0" y="434.8" width="4" height="4" rx="1"/><rect x="182.8" y="463.0" width="4" height="4" rx="1"/><rect x="198.5" y="471.0" width="4" height="4" rx="1"/><rect x="200.6" y="475.0" width="4" height="4" rx="1"/><rect x="208.6" y="481.2" width="4" height="4" rx="1"/><rect x="196.5" y="489.2" width="4" height="4" rx="1"/><rect x="203.6" y="491.3" width="4" height="4" rx="1"/><rect x="216.7" y="492.9" width="4" height="4" rx="1"/><rect x="207.6" y="498.3" width="4" height="4" rx="1"/><rect x="218.3" y="507.0" width="4" height="4" rx="1"/><rect x="228.8" y="374.6" width="4" height="4" rx="1"/><rect x="230.8" y="382.7" width="4" height="4" rx="1"/><rect x="233.8" y="390.8" width="4" height="4" rx="1"/><rect x="236.5" y="410.6" width="4" height="4" rx="1"/><rect x="234.5" y="437.2" width="4" height="4" rx="1"/><rect x="238.9" y="464.0" width="4" height="4" rx="1"/><rect x="224.8" y="461.0" width="4" height="4" rx="1"/><rect x="251.0" y="478.1" width="4" height="4" rx="1"/><rect x="228.8" y="495.9" width="4" height="4" rx="1"/><rect x="244.0" y="511.0" width="4" height="4" rx="1"/><rect x="252.0" y="511.0" width="4" height="4" rx="1"/><rect x="275.2" y="377.3" width="4" height="4" rx="1"/><rect x="269.2" y="390.4" width="4" height="4" rx="1"/><rect x="263.5" y="412.6" width="4" height="4" rx="1"/><rect x="257.0" y="439.8" width="4" height="4" rx="1"/><rect x="277.2" y="440.8" width="4" height="4" rx="1"/><rect x="257.0" y="458.6" width="4" height="4" rx="1"/><rect x="257.0" y="495.3" width="4" height="4" rx="1"/><rect x="268.1" y="497.3" width="4" height="4" rx="1"/><rect x="284.9" y="514.7" width="4" height="4" rx="1"/><rect x="279.3" y="370.0" width="4" height="4" rx="1"/><rect x="282.6" y="434.8" width="4" height="4" rx="1"/><rect x="287.0" y="446.8" width="4" height="4" rx="1"/><rect x="283.6" y="514.6" width="4" height="4" rx="1"/><rect x="331.2" y="370.0" width="4" height="4" rx="1"/><rect x="338.2" y="365.6" width="4" height="4" rx="1"/><rect x="321.0" y="392.3" width="4" height="4" rx="1"/><rect x="308.7" y="415.3" width="4" height="4" rx="1"/><rect x="319.0" y="439.9" width="4" height="4" rx="1"/><rect x="320.2" y="467.3" width="4" height="4" rx="1"/><rect x="303.0" y="498.0" width="4" height="4" rx="1"/><rect x="318.5" y="521.8" width="4" height="4" rx="1"/><rect x="302.3" y="443.0" width="4" height="4" rx="1"/><rect x="302.3" y="467.8" width="4" height="4" rx="1"/><rect x="347.1" y="429.7" width="4" height="4" rx="1"/><rect x="341.5" y="467.3" width="4" height="4" rx="1"/><rect x="340.2" y="502.6" width="4" height="4" rx="1"/><rect x="351.0" y="531.3" width="4" height="4" rx="1"/><rect x="384.2" y="363.6" width="4" height="4" rx="1"/><rect x="380.4" y="367.4" width="4" height="4" rx="1"/><rect x="386.0" y="400.0" width="4" height="4" rx="1"/><rect x="403.4" y="456.3" width="4" height="4" rx="1"/><rect x="375.3" y="465.5" width="4" height="4" rx="1"/><rect x="375.8" y="505.7" width="4" height="4" rx="1"/><rect x="381.7" y="522.8" width="4" height="4" rx="1"/><rect x="420.0" y="357.2" width="4" height="4" rx="1"/><rect x="423.4" y="400.7" width="4" height="4" rx="1"/><rect x="429.0" y="448.9" width="4" height="4" rx="1"/><rect x="433.7" y="489.8" width="4" height="4" rx="1"/><rect x="429.0" y="507.0" width="4" height="4" rx="1"/><rect x="417.5" y="427.6" width="4" height="4" rx="1"/><rect x="409.0" y="496.7" width="4" height="4" rx="1"/><rect x="466.2" y="363.6" width="4" height="4" rx="1"/><rect x="463.6" y="372.6" width="4" height="4" rx="1"/><rect x="464.1" y="404.0" width="4" height="4" rx="1"/><rect x="466.7" y="445.5" width="4" height="4" rx="1"/><rect x="467.4" y="480.6" width="4" height="4" rx="1"/><rect x="466.7" y="494.7" width="4" height="4" rx="1"/><rect x="500.7" y="359.8" width="4" height="4" rx="1"/><rect x="501.2" y="368.7" width="4" height="4" rx="1"/><rect x="504.0" y="400.7" width="4" height="4" rx="1"/><rect x="506.6" y="443.5" width="4" height="4" rx="1"/><rect x="507.6" y="480.9" width="4" height="4" rx="1"/><rect x="507.0" y="498.0" width="4" height="4" rx="1"/><rect x="129.8" y="391.2" width="4" height="4" rx="1"/><rect x="144.7" y="431.0" width="4" height="4" rx="1"/><rect x="130.1" y="398.8" width="4" height="4" rx="1"/><rect x="715.2" y="310.7" width="3.6" height="3.6" rx="1"/><rect x="713.8" y="329.4" width="3.6" height="3.6" rx="1"/><rect x="711.1" y="377.6" width="3.6" height="3.6" rx="1"/><rect x="710.4" y="437.4" width="3.6" height="3.6" rx="1"/><rect x="707.7" y="499.2" width="3.6" height="3.6" rx="1"/><rect x="706.0" y="532.2" width="3.6" height="3.6" rx="1"/><rect x="706.0" y="542.7" width="3.6" height="3.6" rx="1"/><rect x="865.2" y="295.2" width="3.6" height="3.6" rx="1"/><rect x="865.2" y="318.2" width="3.6" height="3.6" rx="1"/><rect x="864.2" y="377.2" width="3.6" height="3.6" rx="1"/><rect x="862.8" y="440.7" width="3.6" height="3.6" rx="1"/><rect x="862.2" y="508.2" width="3.6" height="3.6" rx="1"/><rect x="861.2" y="550.2" width="3.6" height="3.6" rx="1"/><rect x="859.2" y="567.7" width="3.6" height="3.6" rx="1"/><rect x="1001.2" y="288.6" width="3.6" height="3.6" rx="1"/><rect x="1002.2" y="318.2" width="3.6" height="3.6" rx="1"/><rect x="1003.2" y="376.2" width="3.6" height="3.6" rx="1"/><rect x="1004.2" y="440.7" width="3.6" height="3.6" rx="1"/><rect x="1003.2" y="511.7" width="3.6" height="3.6" rx="1"/><rect x="1004.2" y="551.7" width="3.6" height="3.6" rx="1"/><rect x="1003.2" y="573.8" width="3.6" height="3.6" rx="1"/><rect x="1058.2" y="294.0" width="3.6" height="3.6" rx="1"/><rect x="1057.2" y="324.2" width="3.6" height="3.6" rx="1"/><rect x="1057.2" y="378.2" width="3.6" height="3.6" rx="1"/><rect x="1056.2" y="441.2" width="3.6" height="3.6" rx="1"/><rect x="1058.2" y="507.2" width="3.6" height="3.6" rx="1"/><rect x="1057.2" y="546.2" width="3.6" height="3.6" rx="1"/><rect x="1058.2" y="566.0" width="3.6" height="3.6" rx="1"/><rect x="1114.7" y="297.2" width="3.6" height="3.6" rx="1"/><rect x="1113.2" y="327.6" width="3.6" height="3.6" rx="1"/><rect x="1113.2" y="382.0" width="3.6" height="3.6" rx="1"/><rect x="1113.2" y="442.1" width="3.6" height="3.6" rx="1"/><rect x="1114.7" y="505.2" width="3.6" height="3.6" rx="1"/><rect x="1116.2" y="544.9" width="3.6" height="3.6" rx="1"/><rect x="1118.2" y="560.9" width="3.6" height="3.6" rx="1"/><rect x="1196.2" y="297.7" width="3.6" height="3.6" rx="1"/><rect x="1194.2" y="327.6" width="3.6" height="3.6" rx="1"/><rect x="1193.2" y="385.2" width="3.6" height="3.6" rx="1"/><rect x="1194.2" y="444.2" width="3.6" height="3.6" rx="1"/><rect x="1196.2" y="508.2" width="3.6" height="3.6" rx="1"/><rect x="1197.2" y="546.2" width="3.6" height="3.6" rx="1"/><rect x="1199.2" y="559.5" width="3.6" height="3.6" rx="1"/><rect x="1288.2" y="296.2" width="3.6" height="3.6" rx="1"/><rect x="1288.2" y="328.2" width="3.6" height="3.6" rx="1"/><rect x="1288.2" y="388.2" width="3.6" height="3.6" rx="1"/><rect x="1288.2" y="446.2" width="3.6" height="3.6" rx="1"/><rect x="1288.2" y="510.2" width="3.6" height="3.6" rx="1"/><rect x="1288.2" y="548.2" width="3.6" height="3.6" rx="1"/><rect x="1288.2" y="561.2" width="3.6" height="3.6" rx="1"/></g><g fill="#f5901f"><rect x="544.5" y="360.0" width="3.6" height="3.6" rx="1"/><rect x="545.0" y="368.9" width="3.6" height="3.6" rx="1"/><rect x="548.2" y="400.9" width="3.6" height="3.6" rx="1"/><rect x="550.4" y="443.7" width="3.6" height="3.6" rx="1"/><rect x="551.2" y="474.4" width="3.6" height="3.6" rx="1"/><rect x="550.9" y="481.1" width="3.6" height="3.6" rx="1"/><rect x="552.2" y="498.2" width="3.6" height="3.6" rx="1"/><rect x="568.4" y="354.8" width="3.6" height="3.6" rx="1"/><rect x="569.1" y="366.1" width="3.6" height="3.6" rx="1"/><rect x="569.1" y="400.7" width="3.6" height="3.6" rx="1"/><rect x="569.4" y="439.1" width="3.6" height="3.6" rx="1"/><rect x="569.4" y="474.8" width="3.6" height="3.6" rx="1"/><rect x="568.4" y="490.8" width="3.6" height="3.6" rx="1"/><rect x="568.4" y="495.2" width="3.6" height="3.6" rx="1"/></g></g></svg>
<svg width="1250" height="942" style="left:0;top:0"><path d="M1250,742.8 Q1216,830 1198.4,909 L1250,909 Z" fill="#3a0f08"/><path d="M1250,763 Q1218,840 1206.3,909 L1250,909 Z" fill="#cbcb7a"/></svg>
<div style="position:absolute;left:1px;top:23px;width:1249px;height:21.7px;background:rgba(50,50,50,0.85);border-radius:5px 0 0 0;box-shadow:inset 1px 1px 0 #393939;"></div>
<svg width="1250" height="80" style="left:0;top:0"><path d="M1,44.7 H1250 V73.6 H1061 Q1056,73.6 1056,68.6 V55 Q1056,50 1051,50 H117 Q112,50 112,55 V68.6 Q112,73.6 107,73.6 H1 Z" fill="rgba(20,20,20,0.13)"/></svg>
<div style="position:absolute;left:10px;top:26px;width:30px;height:18px;background:#282828;border-radius:4px;"></div>
<svg width="16" height="16" viewBox="0 0 16 16" style="position:absolute;left:14px;top:27px;"><g stroke="#ddd" stroke-width="1.1" fill="none"><line x1="1" y1="10" x2="13" y2="10"/><line x1="0" y1="13.5" x2="14" y2="13.5"/><line x1="4" y1="8" x2="3" y2="16"/><line x1="10" y1="9" x2="9.5" y2="16"/></g><circle cx="10.5" cy="5" r="3.6" fill="#e8e8e8"/><circle cx="9.7" cy="4.2" r="1.5" fill="#9a9a9a"/></svg>
<svg width="8" height="5" viewBox="0 0 8 5" style="position:absolute;left:31.3px;top:34px;"><polyline points="0.8,0.8 4,4 7.2,0.8" fill="none" stroke="#cfcfcf" stroke-width="1.3"/></svg>
<div style="position:absolute;left:47px;top:26px;width:96.5px;height:18px;background:#282828;border-radius:4px;"></div>
<svg width="16" height="14" viewBox="0 0 16 14" style="position:absolute;left:51px;top:28px;"><g fill="none" stroke="#ccc" stroke-width="1.1"><rect x="1" y="1" width="3" height="3"/><rect x="1" y="10" width="3" height="3"/><rect x="10" y="10" width="3" height="3"/><line x1="2.5" y1="4" x2="2.5" y2="10"/><line x1="4" y1="2.5" x2="10" y2="2.5"/><line x1="4" y1="11.5" x2="10" y2="11.5"/><line x1="11.5" y1="4" x2="11.5" y2="10"/></g><rect x="10" y="0.5" width="3.8" height="3.8" fill="#eee"/></svg>
<div style="position:absolute;left:72px;top:27.6px;font-size:11px;line-height:14px;color:#e6e6e6;white-space:nowrap;will-change:transform;-webkit-text-stroke:0.35px #e6e6e6;">編集モード</div>
<svg width="8" height="5" viewBox="0 0 8 5" style="position:absolute;left:134.60000000000002px;top:34px;"><polyline points="0.8,0.8 4,4 7.2,0.8" fill="none" stroke="#cfcfcf" stroke-width="1.3"/></svg>
<div style="position:absolute;left:151px;top:26px;width:57.5px;height:18px;background:#545454;border-radius:4px;"></div>
<div style="position:absolute;left:151px;top:26px;width:18.3px;height:18px;background:#4772b3;border-radius:4px 0 0 4px;"></div>
<svg width="58" height="18" viewBox="0 0 58 18" style="position:absolute;left:151px;top:26px;"><g stroke="#3a3a3a"><line x1="19.3" y1="0" x2="19.3" y2="18"/><line x1="38.3" y1="0" x2="38.3" y2="18"/></g><g fill="none" stroke="#dedede" stroke-width="1.2"><path d="M6.6,2.5 H15.4 V11.8 L12.4,14.6 H3.2 V11.2 M4,5.2 L6.3,2.7"/><path d="M27.6,14.6 H23.1 V5.4 L25.9,2.5 H35.9 V11.8 L33.4,14"/><path d="M44.8,4.8 L47.3,2.5 H55.9 V11.8 L53.3,14"/></g><rect x="1.9" y="6.2" width="4.1" height="3.9" fill="#fff"/><rect x="29" y="6.2" width="2.8" height="9.8" fill="#e8e8e8"/><rect x="42.1" y="6.2" width="9.9" height="9.8" fill="#e8e8e8"/></svg>
<div style="position:absolute;left:222px;top:27.6px;font-size:11px;line-height:14px;color:#e6e6e6;white-space:nowrap;will-change:transform;-webkit-text-stroke:0.35px #e6e6e6;">ビュー</div>
<div style="position:absolute;left:269.5px;top:27.6px;font-size:11px;line-height:14px;color:#e6e6e6;white-space:nowrap;will-change:transform;-webkit-text-stroke:0.35px #e6e6e6;">選択</div>
<div style="position:absolute;left:307px;top:27.6px;font-size:11px;line-height:14px;color:#e6e6e6;white-space:nowrap;will-change:transform;-webkit-text-stroke:0.35px #e6e6e6;">追加</div>
<div style="position:absolute;left:344px;top:27.6px;font-size:11px;line-height:14px;color:#e6e6e6;white-space:nowrap;will-change:transform;-webkit-text-stroke:0.35px #e6e6e6;">メッシュ</div>
<div style="position:absolute;left:403px;top:27.6px;font-size:11px;line-height:14px;color:#e6e6e6;white-space:nowrap;will-change:transform;-webkit-text-stroke:0.35px #e6e6e6;">頂点</div>
<div style="position:absolute;left:440px;top:27.6px;font-size:11px;line-height:14px;color:#e6e6e6;white-space:nowrap;will-change:transform;-webkit-text-stroke:0.35px #e6e6e6;">辺</div>
<div style="position:absolute;left:466px;top:27.6px;font-size:11px;line-height:14px;color:#e6e6e6;white-space:nowrap;will-change:transform;-webkit-text-stroke:0.35px #e6e6e6;">面</div>
<div style="position:absolute;left:492px;top:27.6px;font-size:11px;line-height:14px;color:#e6e6e6;white-space:nowrap;will-change:transform;-webkit-text-stroke:0.35px #e6e6e6;">UV</div>
<div style="position:absolute;left:533px;top:26px;width:93px;height:18px;background:#282828;border-radius:4px;"></div>
<svg width="16" height="16" viewBox="0 0 16 16" style="position:absolute;left:538px;top:27px;"><g fill="none" stroke="#ddd" stroke-width="1.1"><polyline points="2.5,5 2.5,13.5 13,13.5"/><line x1="2.5" y1="13.5" x2="11" y2="6"/><polyline points="0.5,3.5 2.5,1 4.5,3.5"/><polyline points="11,11.5 13.5,13.5 11,15.5"/></g><circle cx="2.5" cy="13.5" r="1.6" fill="none" stroke="#ddd"/></svg>
<div style="position:absolute;left:558px;top:27.6px;font-size:11px;line-height:14px;color:#e6e6e6;white-space:nowrap;will-change:transform;-webkit-text-stroke:0.35px #e6e6e6;">グローバル</div>
<svg width="8" height="5" viewBox="0 0 8 5" style="position:absolute;left:616.3px;top:34px;"><polyline points="0.8,0.8 4,4 7.2,0.8" fill="none" stroke="#cfcfcf" stroke-width="1.3"/></svg>
<div style="position:absolute;left:633px;top:26px;width:30px;height:18px;background:#282828;border-radius:4px;"></div>
<svg width="16" height="14" viewBox="0 0 16 14" style="position:absolute;left:637px;top:28px;"><g fill="none" stroke="#ddd" stroke-width="1.2"><circle cx="5" cy="9" r="4"/><circle cx="9.5" cy="5" r="4"/></g></svg>
<svg width="8" height="5" viewBox="0 0 8 5" style="position:absolute;left:654.3px;top:34px;"><polyline points="0.8,0.8 4,4 7.2,0.8" fill="none" stroke="#cfcfcf" stroke-width="1.3"/></svg>
<div style="position:absolute;left:670px;top:26px;width:50px;height:18px;background:#282828;border-radius:4px;"></div>
<div style="position:absolute;left:670px;top:26px;width:18.5px;height:18px;background:#4772b3;border-radius:4px 0 0 4px;"></div>
<svg width="18" height="16" viewBox="0 0 18 16" style="position:absolute;left:671px;top:27px;"><path d="M9,2.5 A5.5,5.5 0 1 1 4,10" fill="none" stroke="#fff" stroke-width="2.6"/><rect x="2.5" y="5" width="3" height="3" fill="#fff"/><path d="M3,10 L3,13 L6,13" stroke="#fff" fill="none" stroke-width="1"/></svg>
<svg width="18" height="12" viewBox="0 0 18 12" style="position:absolute;left:691px;top:29px;"><g stroke="#ddd" stroke-width="1.1" fill="none"><line x1="1" y1="8.5" x2="14" y2="8.5"/><line x1="1.5" y1="5.5" x2="1.5" y2="11"/><line x1="5" y1="6" x2="5" y2="11"/><line x1="8.5" y1="6" x2="8.5" y2="11"/><line x1="12" y1="5.5" x2="12" y2="11"/></g><rect x="10.5" y="0" width="3.5" height="3.5" fill="#eee"/></svg>
<svg width="8" height="5" viewBox="0 0 8 5" style="position:absolute;left:710.3px;top:34px;"><polyline points="0.8,0.8 4,4 7.2,0.8" fill="none" stroke="#cfcfcf" stroke-width="1.3"/></svg>
<div style="position:absolute;left:727px;top:26px;width:50px;height:18px;background:#282828;border-radius:4px;"></div>
<div style="position:absolute;left:727px;top:26px;width:18.5px;height:18px;background:#545454;border-radius:4px 0 0 4px;"></div>
<svg width="15" height="14" viewBox="0 0 15 14" style="position:absolute;left:729px;top:28px;"><circle cx="7.3" cy="7" r="5.3" fill="none" stroke="#a0a0a0" stroke-width="1"/><circle cx="7.3" cy="7" r="2" fill="#a0a0a0"/></svg>
<svg width="16" height="16" viewBox="0 0 16 16" style="position:absolute;left:749px;top:27px;"><path d="M1,14 C4,14 5,2 7.5,2 C10,2 11,14 14,14" fill="none" stroke="#9a9a9a" stroke-width="1.1"/></svg>
<svg width="8" height="5" viewBox="0 0 8 5" style="position:absolute;left:768.3px;top:34px;"><polyline points="0.8,0.8 4,4 7.2,0.8" fill="none" stroke="#666" stroke-width="1.3"/></svg>
<div style="position:absolute;left:968px;top:26px;width:30px;height:18px;background:#282828;border-radius:4px;"></div>
<svg width="20" height="18" viewBox="0 0 20 18" style="position:absolute;left:968px;top:26px;"><path d="M4.9,5.3 Q10.6,-1.6 16.2,5.3 Q10.6,12.2 4.9,5.3 Z" fill="#ececec"/><circle cx="10.6" cy="5.3" r="2.3" fill="none" stroke="#282828" stroke-width="1.1"/><path d="M2,7.9 L10.1,11.5 L6.5,12.5 L5.5,15.9 Z" fill="#e6e6e6" stroke="#282828" stroke-width="0.6"/></svg>
<svg width="8" height="5" viewBox="0 0 8 5" style="position:absolute;left:989.3px;top:34px;"><polyline points="0.8,0.8 4,4 7.2,0.8" fill="none" stroke="#cfcfcf" stroke-width="1.3"/></svg>
<div style="position:absolute;left:1004.5px;top:26px;width:38.5px;height:18px;background:#282828;border-radius:4px;"></div>
<div style="position:absolute;left:1004.5px;top:26px;width:19px;height:18px;background:#4772b3;border-radius:4px 0 0 4px;"></div>
<svg width="19" height="18" viewBox="0 0 19 18" style="position:absolute;left:1004.5px;top:26px;"><path d="M1.5,6 Q10,6.5 13.5,16" fill="none" stroke="#fff" stroke-width="1.1"/><line x1="4" y1="13.5" x2="14" y2="3" stroke="#fff" stroke-width="1.1"/><polyline points="9.5,2.5 14.5,2.5 14.5,7.5" fill="none" stroke="#fff" stroke-width="1.1"/><circle cx="4" cy="13.8" r="1.7" fill="#4772b3" stroke="#fff" stroke-width="1.1"/></svg>
<svg width="8" height="5" viewBox="0 0 8 5" style="position:absolute;left:1030.3px;top:34px;"><polyline points="0.8,0.8 4,4 7.2,0.8" fill="none" stroke="#cfcfcf" stroke-width="1.3"/></svg>
<div style="position:absolute;left:1049.5px;top:26px;width:70px;height:18px;background:#282828;border-radius:4px;"></div>
<div style="position:absolute;left:1049.5px;top:26px;width:18.5px;height:18px;background:#4772b3;border-radius:4px 0 0 4px;"></div>
<svg width="19" height="18" viewBox="0 0 19 18" style="position:absolute;left:1049.5px;top:26px;"><path d="M8,6.5 A5.2,5.2 0 1 0 13.5,13" fill="none" stroke="#fff" stroke-width="1.1"/><circle cx="11.7" cy="8.4" r="5.4" fill="#fff"/><path d="M9,9 l2,1.5 M9.5,11 l1.5,1" stroke="#4772b3" stroke-width="1"/></svg>
<svg width="8" height="5" viewBox="0 0 8 5" style="position:absolute;left:1075.3px;top:34px;"><polyline points="0.8,0.8 4,4 7.2,0.8" fill="none" stroke="#cfcfcf" stroke-width="1.3"/></svg>
<div style="position:absolute;left:1088.5px;top:26px;width:1px;height:18px;background:#3a3a3a;border-radius:0px;"></div>
<svg width="16" height="14" viewBox="0 0 16 14" style="position:absolute;left:1093px;top:28px;"><g fill="none" stroke="#ccc" stroke-width="1.1"><rect x="1" y="1" width="3" height="3"/><rect x="1" y="10" width="3" height="3"/><rect x="10" y="10" width="3" height="3"/><line x1="2.5" y1="4" x2="2.5" y2="10"/><line x1="4" y1="2.5" x2="10" y2="2.5"/><line x1="4" y1="11.5" x2="10" y2="11.5"/><line x1="11.5" y1="4" x2="11.5" y2="10"/></g><rect x="10" y="0.5" width="3.8" height="3.8" fill="#eee"/></svg>
<svg width="8" height="5" viewBox="0 0 8 5" style="position:absolute;left:1110.3px;top:34px;"><polyline points="0.8,0.8 4,4 7.2,0.8" fill="none" stroke="#cfcfcf" stroke-width="1.3"/></svg>
<div style="position:absolute;left:1127px;top:26px;width:18.5px;height:18px;background:#4772b3;border-radius:4px;"></div>
<svg width="19" height="18" viewBox="0 0 19 18" style="position:absolute;left:1127px;top:26px;"><polyline points="5,3.5 15.5,3.5 15.5,13" fill="none" stroke="#fff" stroke-width="1.1"/><rect x="2.8" y="5.8" width="10.5" height="10.5" fill="#4772b3" stroke="#fff" stroke-width="1.1"/><rect x="5.5" y="8.5" width="1.2" height="2" fill="#fff"/><rect x="6" y="12" width="3" height="1.1" fill="#fff"/></svg>
<div style="position:absolute;left:1152px;top:26px;width:94px;height:18px;background:#282828;border-radius:4px;"></div>
<div style="position:absolute;left:1152px;top:26px;width:75px;height:18px;background:#545454;border-radius:4px 0 0 4px;"></div>
<div style="position:absolute;left:1190px;top:26px;width:18.5px;height:18px;background:#4772b3;border-radius:0px;"></div>
<svg width="94" height="18" viewBox="0 0 94 18" style="position:absolute;left:1152px;top:26px;"><g stroke="#3d3d3d"><line x1="19.5" y1="0" x2="19.5" y2="18"/><line x1="38.5" y1="0" x2="38.5" y2="18"/><line x1="56.5" y1="0" x2="56.5" y2="18"/></g><g fill="none" stroke="#ddd" stroke-width="1.1"><circle cx="9.5" cy="9" r="6.3"/><ellipse cx="9.5" cy="9" rx="2.8" ry="6.3"/><line x1="3.2" y1="7" x2="15.8" y2="7"/><line x1="3.2" y1="11" x2="15.8" y2="11"/></g><circle cx="28.5" cy="9" r="6.5" fill="#cfcfcf"/><circle cx="47.5" cy="9" r="6.5" fill="#fff"/><path d="M47.5,9 L47.5,2.5 A6.5,6.5 0 0 0 41,9 Z" fill="#4772b3"/><path d="M47.5,9 L53,13 A6.5 6.5 0 0 1 44,14.5 Z" fill="#4772b3"/><circle cx="66" cy="9" r="6.3" fill="none" stroke="#ddd" stroke-width="1.1"/><path d="M62,8 A4,4 0 0 1 66,4.5" fill="none" stroke="#ddd"/></svg>
<svg width="8" height="5" viewBox="0 0 8 5" style="position:absolute;left:1234.3px;top:34px;"><polyline points="0.8,0.8 4,4 7.2,0.8" fill="none" stroke="#cfcfcf" stroke-width="1.3"/></svg>
<div style="position:absolute;left:9px;top:52px;width:94px;height:18px;background:#545454;border-radius:4px;"></div>
<div style="position:absolute;left:9px;top:52px;width:18px;height:18px;background:#4772b3;border-radius:4px 0 0 4px;"></div>
<svg width="120" height="80" style="left:0;top:0"><g stroke="#3a3a3a"><line x1="27.2" y1="52" x2="27.2" y2="70"/><line x1="46.3" y1="52" x2="46.3" y2="70"/><line x1="65.5" y1="52" x2="65.5" y2="70"/><line x1="84.7" y1="52" x2="84.7" y2="70"/></g><path d="M11.5,58 V54.8 H14.5 M16.5,54.8 H19.8 M21.8,54.8 H25 V58 M25,60 V63 M25,65 V67.8 H21.8 M19.8,67.8 H16.5 M14.5,67.8 H11.5 V65 M11.5,63 V60" fill="none" stroke="#fff" stroke-width="1.3"/><path d="M34,54.3 H43.8 V63.7 H39.9 V67.6 H30.1 V58.6 H34 Z" fill="#c8c8c8"/><path d="M53.2,54.3 H63 V63.7 H58.3 V58.6 H53.2 Z" fill="#c8c8c8"/><path d="M49.8,61.5 V59.1 H52 M58.2,64.8 V67.1 H55.8 M53.2,67.1 H51.6 M49.8,64.5 V67.1 H51" fill="none" stroke="#c8c8c8" stroke-width="1.1"/><path d="M72.4,54.3 H82.2 V63.7 H77.9 V67.6 H68.1 V58.6 H72.4 Z M72.4,58.6 V63.7 H77.9 V58.6 Z" fill="#c8c8c8" fill-rule="evenodd"/><path d="M87.8,57.5 V54.8 H90.5 M92.8,54.8 H95.5 M97.8,54.8 H100.5 V57.5 M100.5,59.8 V62.2 M100.5,64.5 V67.1 H97.8 M95.5,67.1 H92.8 M90.5,67.1 H87.8 V64.5 M87.8,62.2 V59.8" fill="none" stroke="#c8c8c8" stroke-width="1.1"/><rect x="91.2" y="58.2" width="5.5" height="5.5" fill="#c8c8c8"/></svg>
<svg width="17" height="18" viewBox="0 0 17 18" style="position:absolute;left:1067px;top:52px;"><path d="M8,3 C4,0 1,2 2,6 C3,8 4,9 2,12 C2,15 5,16 8,13 M9,3 C13,0 16,2 15,6 C14,8 13,9 15,12 C15,15 12,16 9,13" fill="none" stroke="#ccc" stroke-width="1"/><line x1="8.5" y1="1" x2="8.5" y2="17" stroke="#eee" stroke-width="1" stroke-dasharray="2,1"/></svg>
<div style="position:absolute;left:1087px;top:52px;width:51px;height:18px;background:#545454;border-radius:4px;"></div>
<div style="position:absolute;left:1103.5px;top:52px;width:1px;height:18px;background:#3d3d3d;border-radius:0px;"></div>
<div style="position:absolute;left:1121.5px;top:52px;width:1px;height:18px;background:#3d3d3d;border-radius:0px;"></div>
<div style="position:absolute;left:1091.5px;top:54px;font-size:11px;line-height:14px;color:#e6e6e6;white-space:nowrap;will-change:transform;-webkit-text-stroke:0.35px #e6e6e6;">X</div>
<div style="position:absolute;left:1109px;top:54px;font-size:11px;line-height:14px;color:#e6e6e6;white-space:nowrap;will-change:transform;-webkit-text-stroke:0.35px #e6e6e6;">Y</div>
<div style="position:absolute;left:1126.5px;top:54px;font-size:11px;line-height:14px;color:#e6e6e6;white-space:nowrap;will-change:transform;-webkit-text-stroke:0.35px #e6e6e6;">Z</div>
<div style="position:absolute;left:1145px;top:52px;width:18px;height:18px;background:#545454;border-radius:4px;"></div>
<svg width="16" height="16" viewBox="0 0 16 16" style="position:absolute;left:1146px;top:53px;"><rect x="1.5" y="10" width="3" height="3" fill="none" stroke="#999"/><rect x="11" y="1.5" width="3" height="3" fill="none" stroke="#999"/><path d="M4,9 Q5,4 10,4" fill="none" stroke="#888" stroke-dasharray="1.5,1.2"/><path d="M6,11.5 Q11,11 11.5,6" fill="none" stroke="#888" stroke-dasharray="1.5,1.2"/></svg>
<div style="position:absolute;left:1170px;top:52px;width:78px;height:18px;background:#282828;border-radius:4px;"></div>
<div style="position:absolute;left:1177px;top:54px;font-size:11px;line-height:14px;color:#e6e6e6;white-space:nowrap;will-change:transform;-webkit-text-stroke:0.35px #e6e6e6;">オプション</div>
<svg width="8" height="5" viewBox="0 0 8 5" style="position:absolute;left:1238.3px;top:59px;"><polyline points="0.8,0.8 4,4 7.2,0.8" fill="none" stroke="#cfcfcf" stroke-width="1.3"/></svg>
<div style="position:absolute;left:9px;top:83px;width:38px;height:68px;background:#282828;border-radius:3.5px;box-shadow:0 1px 1.5px rgba(0,0,0,0.3);"></div>
<div style="position:absolute;left:9px;top:158px;width:38px;height:137px;background:#282828;border-radius:3.5px;box-shadow:0 1px 1.5px rgba(0,0,0,0.3);"></div>
<div style="position:absolute;left:9px;top:303px;width:38px;height:68px;background:#282828;border-radius:3.5px;box-shadow:0 1px 1.5px rgba(0,0,0,0.3);"></div>
<div style="position:absolute;left:9px;top:378px;width:38px;height:33px;background:#282828;border-radius:3.5px;box-shadow:0 1px 1.5px rgba(0,0,0,0.3);"></div>
<div style="position:absolute;left:9px;top:417.5px;width:38px;height:418.1px;background:#282828;border-radius:3.5px;box-shadow:0 1px 1.5px rgba(0,0,0,0.3);"></div>
<div style="position:absolute;left:9px;top:83px;width:38px;height:33px;background:#4772b3;border-radius:3.5px 3.5px 0 0;"></div>
<div style="position:absolute;left:9px;top:116.5px;width:38px;height:1px;background:#3a3a3a;border-radius:0px;"></div>
<div style="position:absolute;left:9px;top:191.75px;width:38px;height:1px;background:#3a3a3a;border-radius:0px;"></div>
<div style="position:absolute;left:9px;top:226.0px;width:38px;height:1px;background:#3a3a3a;border-radius:0px;"></div>
<div style="position:absolute;left:9px;top:260.25px;width:38px;height:1px;background:#3a3a3a;border-radius:0px;"></div>
<div style="position:absolute;left:9px;top:336.5px;width:38px;height:1px;background:#3a3a3a;border-radius:0px;"></div>
<div style="position:absolute;left:9px;top:451.8416666666667px;width:38px;height:1px;background:#3a3a3a;border-radius:0px;"></div>
<div style="position:absolute;left:9px;top:486.68333333333334px;width:38px;height:1px;background:#3a3a3a;border-radius:0px;"></div>
<div style="position:absolute;left:9px;top:521.525px;width:38px;height:1px;background:#3a3a3a;border-radius:0px;"></div>
<div style="position:absolute;left:9px;top:556.3666666666667px;width:38px;height:1px;background:#3a3a3a;border-radius:0px;"></div>
<div style="position:absolute;left:9px;top:591.2083333333334px;width:38px;height:1px;background:#3a3a3a;border-radius:0px;"></div>
<div style="position:absolute;left:9px;top:626.05px;width:38px;height:1px;background:#3a3a3a;border-radius:0px;"></div>
<div style="position:absolute;left:9px;top:660.8916666666667px;width:38px;height:1px;background:#3a3a3a;border-radius:0px;"></div>
<div style="position:absolute;left:9px;top:695.7333333333333px;width:38px;height:1px;background:#3a3a3a;border-radius:0px;"></div>
<div style="position:absolute;left:9px;top:730.575px;width:38px;height:1px;background:#3a3a3a;border-radius:0px;"></div>
<div style="position:absolute;left:9px;top:765.4166666666667px;width:38px;height:1px;background:#3a3a3a;border-radius:0px;"></div>
<div style="position:absolute;left:9px;top:800.2583333333333px;width:38px;height:1px;background:#3a3a3a;border-radius:0px;"></div>
<svg width="38" height="34.0" viewBox="0 0 38 34.0" style="position:absolute;left:9px;top:83.0px;"><path d="M9,10 V6 H13 M16.5,6 H21 M24.5,6 H29.5 V10 M29.5,13.5 V18.5 M29.5,22 V26.5 H24.5 M21,26.5 H16.5 M13,26.5 H9 V22 M9,18.5 V13.5" fill="none" stroke="#f5a623" stroke-width="1.6"/><path d="M15.6,10.8 L15.9,21.5 L18.8,18.8 L24.3,18.3 Z" fill="#e6e6e6"/><path d="M34,27.0 L34,31.0 L30,31.0 Z" fill="#8a8a8a"/></svg>
<svg width="38" height="34.0" viewBox="0 0 38 34.0" style="position:absolute;left:9px;top:117.0px;"><circle cx="19" cy="17.5" r="11" fill="none" stroke="#fff" stroke-width="1.6"/><circle cx="19" cy="17.5" r="11" fill="none" stroke="#b03030" stroke-width="1.6" stroke-dasharray="4.3,4.3"/><g stroke="#999" stroke-width="1.6"><line x1="19" y1="11" x2="19" y2="15"/><line x1="19" y1="20" x2="19" y2="24"/><line x1="12.5" y1="17.5" x2="16.5" y2="17.5"/><line x1="21.5" y1="17.5" x2="25.5" y2="17.5"/></g></svg>
<svg width="38" height="34.25" viewBox="0 0 38 34.25" style="position:absolute;left:9px;top:158.0px;"><g fill="#e0e0e0"><path d="M18.8,4.2 L15.6,8.6 L22,8.6 Z"/><path d="M18.8,28 L15.6,23.6 L22,23.6 Z"/><path d="M7.2,15.9 L11.6,12.7 L11.6,19.1 Z"/><path d="M30.5,15.9 L26.1,12.7 L26.1,19.1 Z"/></g><g stroke="#e0e0e0" stroke-width="1.6"><line x1="18.8" y1="9.5" x2="18.8" y2="12.3"/><line x1="18.8" y1="19.5" x2="18.8" y2="22.5"/><line x1="12.5" y1="15.9" x2="15.3" y2="15.9"/><line x1="22.3" y1="15.9" x2="25.2" y2="15.9"/></g></svg>
<svg width="38" height="34.25" viewBox="0 0 38 34.25" style="position:absolute;left:9px;top:192.25px;"><path d="M11.3,14.5 A8,8 0 0 1 26.3,14" fill="none" stroke="#e0e0e0" stroke-width="1.3"/><path d="M26.3,20 A8,8 0 0 1 11.3,19.5" fill="none" stroke="#e0e0e0" stroke-width="1.3"/><path d="M18.8,13.5 L22.3,17 L18.8,20.5 L15.3,17 Z" fill="#a8a8a8"/><path d="M7,15.6 L12.5,15.6 L9.8,20 Z M25,18.5 L30.8,18.5 L27.9,14.1 Z" fill="#e0e0e0"/></svg>
<svg width="38" height="34.25" viewBox="0 0 38 34.25" style="position:absolute;left:9px;top:226.5px;"><polyline points="10.3,16.5 10.3,9.8 27.1,9.8 27.1,25.2 19.5,25.2" fill="none" stroke="#cfcfcf" stroke-width="1.2"/><rect x="10" y="17.2" width="9" height="9.2" fill="#e0e0e0"/><line x1="20.5" y1="15.7" x2="25.5" y2="12" stroke="#e0e0e0" stroke-width="1.3"/><path d="M26.5,11 L22.3,11.5 L25.8,15 Z" fill="#e0e0e0"/><path d="M34,27.2 L34,31.2 L30,31.2 Z" fill="#8a8a8a"/></svg>
<svg width="38" height="34.25" viewBox="0 0 38 34.25" style="position:absolute;left:9px;top:260.75px;"><circle cx="18.8" cy="18" r="10" fill="none" stroke="#ddd" stroke-width="1.1" stroke-dasharray="10,5.7" stroke-dashoffset="-2.5"/><rect x="14.8" y="14" width="8" height="8" fill="#e6e6e6"/><g fill="#e0e0e0"><path d="M18.8,6.3 L16.3,9.3 L21.3,9.3 Z"/><path d="M18.8,29.7 L16.3,26.7 L21.3,26.7 Z"/><path d="M7.1,18 L10.1,15.5 L10.1,20.5 Z"/><path d="M30.5,18 L27.5,15.5 L27.5,20.5 Z"/></g></svg>
<svg width="38" height="34.0" viewBox="0 0 38 34.0" style="position:absolute;left:9px;top:303.0px;"><path d="M8.5,21 L21.5,8 L24.5,11 L11.5,24 L7.5,25 Z" fill="#e0e0e0"/><path d="M21.5,8 L23,6.5 Q24,5.5 25,6.5 L26,7.5 Q27,8.5 26,9.5 L24.5,11 Z" fill="#e0e0e0"/><path d="M8,23.5 C12,26 15,25 19,21 C23,17 26,17 31,23" fill="none" stroke="#8fd6ab" stroke-width="1.3"/><path d="M34,27.0 L34,31.0 L30,31.0 Z" fill="#8a8a8a"/></svg>
<svg width="38" height="34.0" viewBox="0 0 38 34.0" style="position:absolute;left:9px;top:337.0px;"><path d="M15.6,15 A10,10 0 0 1 25.6,25 L15.6,25 Z" fill="#8fd6ab"/><path d="M15.6,13 A12,12 0 0 1 27.6,25" fill="none" stroke="#8fd6ab" stroke-width="1.1"/><rect x="10.2" y="5.5" width="4.8" height="23.5" fill="#e0e0e0"/><rect x="10.2" y="25" width="20.5" height="4.2" fill="#e0e0e0"/><g stroke="#2a2a2a" stroke-width="0.8"><path d="M12.5,8 h2.5 M12.5,11 h2.5 M12.5,14 h2.5 M12.5,17 h2.5 M12.5,20 h2.5 M12.5,23 h2.5 M17,25 v2.5 M20,25 v2.5 M23,25 v2.5 M26,25 v2.5 M29,25 v2.5"/></g></svg>
<svg width="38" height="33.0" viewBox="0 0 38 33.0" style="position:absolute;left:9px;top:378.0px;"><path d="M11.5,12.5 L16.0,8.0 L31.0,8.0 L31.0,22.5 L26.5,27 L11.5,27 Z M11.5,12.5 L26.5,12.5 L31.0,8.0 M26.5,12.5 L26.5,27" fill="none" stroke="#8fd6ab" stroke-width="1.2" stroke-linejoin="round"/><path d="M6.5,7.5 h7 M10,4 v7" stroke="#8fd6ab" stroke-width="2"/><path d="M34,26.0 L34,30.0 L30,30.0 Z" fill="#8a8a8a"/></svg>
<svg width="38" height="34.84166666666667" viewBox="0 0 38 34.84166666666667" style="position:absolute;left:9px;top:417.5px;"><path d="M9,8.5 L13.5,4 L29,4 L29,10.5 L24.5,15 L9,15 Z" fill="#8fd6ab"/><path d="M9,8.5 L13.5,4.0 L29.0,4.0 L29.0,22.0 L24.5,26.5 L9,26.5 Z M9,8.5 L24.5,8.5 L29.0,4.0 M24.5,8.5 L24.5,26.5" fill="none" stroke="#e0e0e0" stroke-width="1.1" stroke-linejoin="round"/><path d="M34,27.8 L34,31.8 L30,31.8 Z" fill="#8a8a8a"/></svg>
<svg width="38" height="34.84166666666667" viewBox="0 0 38 34.84166666666667" style="position:absolute;left:9px;top:452.3416666666667px;"><path d="M9,11 L24.3,11 L24.3,26.5 L9,26.5 Z M14,16 L14,21.5 L19.3,21.5 L19.3,16 Z" fill="#8fd6ab" fill-rule="evenodd"/><path d="M9,11 L14,16 M24.3,11 L19.3,16 M9,26.5 L14,21.5 M24.3,26.5 L19.3,21.5" stroke="#2a2a2a" stroke-width="0.9"/><path d="M9,11 L13.8,6.2 L29.1,6.2 L29.1,21.7 L24.3,26.5 L9,26.5 Z M9,11 L24.3,11 L29.1,6.2 M24.3,11 L24.3,26.5" fill="none" stroke="#e0e0e0" stroke-width="1.1" stroke-linejoin="round"/></svg>
<svg width="38" height="34.84166666666667" viewBox="0 0 38 34.84166666666667" style="position:absolute;left:9px;top:487.18333333333334px;"><path d="M9,15 L12.5,10 L20.5,10 L24.5,15 Z M20.5,10 L24,6.5 L29,12 L24.5,15 Z" fill="#8fd6ab"/><path d="M9,15 L12.5,10 L20.5,10 L24.5,15 L24.5,27 L9,27 Z M12.5,10 L16,6.5 L24,6.5 L29,12 L29,23 L24.5,27 M20.5,10 L24,6.5" fill="none" stroke="#e0e0e0" stroke-width="1.1" stroke-linejoin="round"/></svg>
<svg width="38" height="34.84166666666667" viewBox="0 0 38 34.84166666666667" style="position:absolute;left:9px;top:522.025px;"><path d="M8.9,12.3 L13.600000000000001,7.6000000000000005 L28.5,7.6000000000000005 L28.5,22.5 L23.8,27.2 L8.9,27.2 Z M8.9,12.3 L23.8,12.3 L28.5,7.6000000000000005 M23.8,12.3 L23.8,27.2" fill="none" stroke="#e0e0e0" stroke-width="1.1" stroke-linejoin="round"/><path d="M13.5,12.3 V27.2 M18.6,12.3 V27.2" stroke="#e0e0e0" stroke-width="1"/><path d="M16,27 V13 L20.5,8" fill="none" stroke="#8fd6ab" stroke-width="1.3"/><path d="M34,27.8 L34,31.8 L30,31.8 Z" fill="#8a8a8a"/></svg>
<svg width="38" height="34.84166666666667" viewBox="0 0 38 34.84166666666667" style="position:absolute;left:9px;top:556.8666666666667px;"><path d="M8.9,12.3 L13.600000000000001,7.6000000000000005 L28.5,7.6000000000000005 L28.5,22.5 L23.8,27.2 L8.9,27.2 Z M8.9,12.3 L23.8,12.3 L28.5,7.6000000000000005 M23.8,12.3 L23.8,27.2" fill="none" stroke="#e0e0e0" stroke-width="1.1" stroke-linejoin="round"/><polyline points="20.8,7.8 14.1,13 20.4,27.4" fill="none" stroke="#8fd6ab" stroke-width="1.3"/><circle cx="20.8" cy="7.8" r="1.8" fill="#8fd6ab"/><circle cx="14.1" cy="13" r="1.6" fill="#8fd6ab"/><circle cx="20.4" cy="27.2" r="1.8" fill="#8fd6ab"/><path d="M34,27.8 L34,31.8 L30,31.8 Z" fill="#8a8a8a"/></svg>
<svg width="38" height="34.84166666666667" viewBox="0 0 38 34.84166666666667" style="position:absolute;left:9px;top:591.7083333333334px;"><path d="M16.6,7.8 L27.5,11.1 L28.2,26.6 L10.4,26.6 L10.4,16.6 Z" fill="#8fd6ab"/><g fill="#f0f0f0"><circle cx="16.6" cy="7.5" r="1.8"/><circle cx="27.5" cy="11.1" r="1.8"/><circle cx="28.2" cy="26.6" r="1.8"/><circle cx="10.4" cy="26.6" r="1.8"/><circle cx="10.4" cy="16.6" r="1.8"/></g></svg>
<svg width="38" height="34.84166666666667" viewBox="0 0 38 34.84166666666667" style="position:absolute;left:9px;top:626.55px;"><path d="M18,18 L18,7 A11,11 0 1 0 29,18 Z" fill="#8fd6ab"/><g stroke="#2a2a2a" stroke-width="0.9"><line x1="18" y1="18" x2="7" y2="18"/><line x1="18" y1="18" x2="10.2" y2="25.8"/><line x1="18" y1="18" x2="18" y2="29"/><line x1="18" y1="18" x2="25.8" y2="25.8"/><line x1="18" y1="18" x2="10.2" y2="10.2"/></g><path d="M18,7 L22,5.5 L22,14 M24,10 Q28,12 29,17" fill="none" stroke="#e0e0e0" stroke-width="1"/></svg>
<svg width="38" height="34.84166666666667" viewBox="0 0 38 34.84166666666667" style="position:absolute;left:9px;top:661.3916666666667px;"><path d="M10,12 Q11,7.5 19,7 Q27,7.5 28.5,12 Q29.5,18 28,22 Q26,26 19,25.8 Q11,26 9.5,21.5 Q8.8,16 10,12 Z" fill="#dcc4ec"/><g stroke="#3a3040" stroke-width="0.9" fill="none"><path d="M9.5,17 Q19,15.5 28.8,17"/><path d="M18.5,7 Q17.5,16 18.8,25.8"/></g><path d="M34,27.8 L34,31.8 L30,31.8 Z" fill="#8a8a8a"/></svg>
<svg width="38" height="34.84166666666667" viewBox="0 0 38 34.84166666666667" style="position:absolute;left:9px;top:696.2333333333333px;"><path d="M12.5,12.5 L17.3,7.7 L28.8,7.7 L28.8,23.099999999999998 L24,27.9 L12.5,27.9 Z M12.5,12.5 L24,12.5 L28.8,7.7 M24,12.5 L24,27.9" fill="none" stroke="#e0e0e0" stroke-width="1.1" stroke-linejoin="round"/><path d="M9.3,27.9 V14 Q9.3,9.5 13,8.5" fill="none" stroke="#e0e0e0" stroke-width="1.1"/><path d="M6,4.7 L9.5,2.5 L9.5,7 Z" fill="#dcc4ec"/><line x1="9" y1="4.7" x2="13" y2="4.7" stroke="#dcc4ec" stroke-width="1.3"/><path d="M34,27.8 L34,31.8 L30,31.8 Z" fill="#8a8a8a"/></svg>
<svg width="38" height="34.84166666666667" viewBox="0 0 38 34.84166666666667" style="position:absolute;left:9px;top:731.075px;"><rect x="14" y="12.7" width="9" height="9" fill="#3a3a3a" stroke="#e0e0e0" stroke-width="1.1"/><path d="M14,12.7 L23,21.7 M23,12.7 L14,21.7" stroke="#dcc4ec" stroke-width="1.1"/><g fill="#dcc4ec"><path d="M18.6,5 L15.6,8.5 L21.6,8.5 Z"/><path d="M18.6,29.3 L15.6,25.8 L21.6,25.8 Z"/><path d="M7.2,17.2 L10.7,14.2 L10.7,20.2 Z"/><path d="M30.3,17.2 L26.8,14.2 L26.8,20.2 Z"/></g><g stroke="#dcc4ec" stroke-width="1.4"><line x1="18.6" y1="8.5" x2="18.6" y2="11.5"/><line x1="18.6" y1="23" x2="18.6" y2="26"/><line x1="10.5" y1="17.2" x2="13" y2="17.2"/><line x1="24" y1="17.2" x2="27" y2="17.2"/></g><path d="M23,12.7 L25,10.7 L25,19.7 L23,21.7" fill="none" stroke="#e0e0e0" stroke-width="1"/><path d="M34,27.8 L34,31.8 L30,31.8 Z" fill="#8a8a8a"/></svg>
<svg width="38" height="34.84166666666667" viewBox="0 0 38 34.84166666666667" style="position:absolute;left:9px;top:765.9166666666667px;"><path d="M5.6,14.5 L17.5,8 L32.5,21.5 L20.5,27.7 Z" fill="#dcc4ec"/><path d="M17.5,8 L20.5,9 L32.5,21.5" fill="#c6acd8"/><line x1="18.5" y1="10" x2="29.5" y2="23" stroke="#4a3d55" stroke-width="0.9"/><path d="M26,5.4 L29.5,3 L29.5,7.8 Z" fill="#dcc4ec"/><line x1="29" y1="5.4" x2="33" y2="5.4" stroke="#dcc4ec" stroke-width="1.3"/><path d="M34,27.8 L34,31.8 L30,31.8 Z" fill="#8a8a8a"/></svg>
<svg width="38" height="34.84166666666667" viewBox="0 0 38 34.84166666666667" style="position:absolute;left:9px;top:800.7583333333333px;"><path d="M15,12.5 L19.7,7.8 L30.7,7.8 L30.7,23.3 L26,28 L15,28 Z M15,12.5 L26,12.5 L30.7,7.8 M26,12.5 L26,28" fill="none" stroke="#b8b8b8" stroke-width="1.3" stroke-linejoin="round"/><path d="M5.6,25.8 L26,19.5 M5.6,25.8 L11,28" stroke="#dcc4ec" stroke-width="1.1"/><circle cx="5.8" cy="25.8" r="2" fill="#dcc4ec"/><path d="M34,27.8 L34,31.8 L30,31.8 Z" fill="#8a8a8a"/></svg>
<div style="position:absolute;left:66px;top:82.5px;font-size:11px;line-height:14px;color:#f0f0f0;white-space:nowrap;will-change:transform;-webkit-text-stroke:0.35px #f0f0f0;text-shadow:0 0 1.5px rgba(0,0,0,0.9),1px 1px 1px rgba(0,0,0,0.8),-0.5px 0 1px rgba(0,0,0,0.7);-webkit-text-stroke:0.5px #f2f2f2;">フロント・平行投影</div>
<div style="position:absolute;left:65.5px;top:101px;font-size:12px;line-height:15px;color:#f0f0f0;white-space:nowrap;will-change:transform;-webkit-text-stroke:0.35px #f0f0f0;text-shadow:0 0 1.5px rgba(0,0,0,0.9),1px 1px 1px rgba(0,0,0,0.8),-0.5px 0 1px rgba(0,0,0,0.7);-webkit-text-stroke:0.5px #f2f2f2;">(1) Body.002</div>
<div style="position:absolute;left:66px;top:118.5px;font-size:11px;line-height:14px;color:#f0f0f0;white-space:nowrap;will-change:transform;-webkit-text-stroke:0.35px #f0f0f0;text-shadow:0 0 1.5px rgba(0,0,0,0.9),1px 1px 1px rgba(0,0,0,0.8),-0.5px 0 1px rgba(0,0,0,0.7);-webkit-text-stroke:0.5px #f2f2f2;">センチメートル</div>
<svg width="1250" height="942" style="left:0;top:0"><line x1="1204.9" y1="92.2" x2="1204.9" y2="156" stroke="#3b7ee0" stroke-width="2"/><line x1="1172.7" y1="124.2" x2="1236.9" y2="124.2" stroke="#e0304b" stroke-width="2"/><circle cx="1172.7" cy="124.2" r="7.3" fill="#8c3b4a" stroke="#d23049" stroke-width="1.4"/><circle cx="1204.9" cy="156" r="7.3" fill="#2f5a8f" stroke="#3b7ee0" stroke-width="1.4"/><circle cx="1204.9" cy="92.2" r="8.2" fill="#3b7ee0"/><circle cx="1236.9" cy="124.2" r="8.2" fill="#e0304b"/><circle cx="1204.9" cy="124.2" r="8.6" fill="#8ad31c" stroke="#c8f07a" stroke-width="1"/><text x="1204.9" y="96.3" font-size="11" text-anchor="middle" fill="#1a1a1a" font-family="Liberation Sans">Z</text><text x="1237" y="128.3" font-size="11" text-anchor="middle" fill="#1a1a1a" font-family="Liberation Sans">X</text><text x="1204.4" y="128.3" font-size="11" text-anchor="middle" fill="#1a1a1a" font-family="Liberation Sans">-Y</text><circle cx="1255" cy="96" r="8" fill="#2c2c2c" fill-opacity="0.85"/><rect x="1248.5" y="95" width="1.5" height="2" fill="#ddd"/><circle cx="1232.9" cy="178" r="13.5" fill="#2a2a2a" fill-opacity="0.92"/><circle cx="1232.9" cy="208" r="13.5" fill="#2a2a2a" fill-opacity="0.92"/><circle cx="1232.9" cy="238.2" r="13.5" fill="#2a2a2a" fill-opacity="0.92"/><circle cx="1232.9" cy="268.6" r="13.5" fill="#2a2a2a" fill-opacity="0.92"/><circle cx="1234.6" cy="177.3" r="6.3" fill="#e6e6e6"/><path d="M1231.6,177.3 h6 M1234.6,174.3 v6" stroke="#2a2a2a" stroke-width="1.3"/><line x1="1230.2" y1="181.6" x2="1226" y2="185.8" stroke="#e6e6e6" stroke-width="2.2" stroke-linecap="round"/><path d="M1227.5,203 L1227.5,207 L1225.5,204.8 Q1224.3,203.8 1224,205 L1227.5,212.5 Q1229.5,215.5 1233,215.5 Q1238,215.5 1238.5,210 L1239.5,203.5 Q1239.7,202 1238.6,202 Q1237.6,202 1237.3,203.5 L1236.8,206.5 L1236.8,200.8 Q1236.8,199.4 1235.7,199.4 Q1234.6,199.4 1234.6,200.8 L1234.4,206 L1234.4,199.3 Q1234.4,198 1233.2,198 Q1232,198 1232,199.3 L1232,206 L1231.8,200.5 Q1231.8,199.3 1230.7,199.3 Q1229.6,199.3 1229.6,200.5 L1229.6,207 L1229.5,202.8 Q1229.5,201.6 1228.5,201.6 Q1227.5,201.6 1227.5,203 Z" fill="#e6e6e6"/><g fill="none" stroke="#e6e6e6" stroke-width="1.1"><path d="M1226,236.5 Q1225,231.5 1229.5,231.5 L1233,231.5 Q1235,229.5 1237.5,230 Q1240.5,231 1240,234.5 Q1239.5,239 1235,239 L1228,239 Q1226.3,238.8 1226,236.5 Z"/><rect x="1228.8" y="241" width="7" height="5.3"/><path d="M1236.5,243.6 L1240.5,241 L1240.5,246.3 Z"/><circle cx="1236.5" cy="234.5" r="1.2"/><path d="M1227.5,235 h3 M1229,233.5 v3"/></g><g stroke="#e6e6e6" stroke-width="1.2" fill="none"><rect x="1225.6" y="261.2" width="15.4" height="15.4"/><line x1="1230.7" y1="261.2" x2="1230.7" y2="276.6"/><line x1="1235.9" y1="261.2" x2="1235.9" y2="276.6"/><line x1="1225.6" y1="266.3" x2="1241" y2="266.3"/><line x1="1225.6" y1="271.5" x2="1241" y2="271.5"/></g></svg>
<div style="position:absolute;left:0px;top:0px;width:1250px;height:22px;background:#181818;border-radius:0px;"></div>
<svg width="30" height="22" viewBox="0 0 30 22" style="position:absolute;left:0px;top:0px;"><g stroke="#dedede" stroke-width="2.2" stroke-linecap="round" fill="none"><path d="M10.3,11.8 L16.5,7.9"/><path d="M11.3,6.1 L17.5,6"/><path d="M17.4,2.8 L22.6,6.4"/><circle cx="19.4" cy="10.8" r="4.2"/></g><circle cx="19.4" cy="10.8" r="1.5" fill="#dedede"/></svg>
<div style="position:absolute;left:35.3px;top:1.3px;font-size:11px;line-height:14px;color:#e6e6e6;white-space:nowrap;will-change:transform;-webkit-text-stroke:0.35px #e6e6e6;">ファイル</div>
<div style="position:absolute;left:93.4px;top:1.3px;font-size:11px;line-height:14px;color:#e6e6e6;white-space:nowrap;will-change:transform;-webkit-text-stroke:0.35px #e6e6e6;">編集</div>
<div style="position:absolute;left:131.8px;top:1.3px;font-size:11px;line-height:14px;color:#e6e6e6;white-space:nowrap;will-change:transform;-webkit-text-stroke:0.35px #e6e6e6;">レンダー</div>
<div style="position:absolute;left:190.7px;top:1.3px;font-size:11px;line-height:14px;color:#e6e6e6;white-space:nowrap;will-change:transform;-webkit-text-stroke:0.35px #e6e6e6;">ウィンドウ</div>
<div style="position:absolute;left:260.6px;top:1.3px;font-size:11px;line-height:14px;color:#e6e6e6;white-space:nowrap;will-change:transform;-webkit-text-stroke:0.35px #e6e6e6;">ヘルプ</div>
<div style="position:absolute;left:318px;top:1.8px;width:73px;height:19.1px;background:#303030;border-radius:4px;"></div>
<div style="position:absolute;left:328px;top:3.2px;font-size:11px;line-height:14px;color:#ffffff;white-space:nowrap;will-change:transform;-webkit-text-stroke:0.35px #ffffff;">レイアウト</div>
<div style="position:absolute;left:402.4px;top:3.2px;font-size:11px;line-height:14px;color:#b3b3b3;white-space:nowrap;will-change:transform;-webkit-text-stroke:0.35px #b3b3b3;-webkit-text-stroke:0.1px #b3b3b3;">モデリング</div>
<div style="position:absolute;left:477.4px;top:3.2px;font-size:11px;line-height:14px;color:#b3b3b3;white-space:nowrap;will-change:transform;-webkit-text-stroke:0.35px #b3b3b3;-webkit-text-stroke:0.1px #b3b3b3;">スカルプト</div>
<div style="position:absolute;left:552.2px;top:3.2px;font-size:11px;line-height:14px;color:#b3b3b3;white-space:nowrap;will-change:transform;-webkit-text-stroke:0.35px #b3b3b3;-webkit-text-stroke:0.1px #b3b3b3;">UV編集</div>
<div style="position:absolute;left:610.2px;top:3.2px;font-size:11px;line-height:14px;color:#b3b3b3;white-space:nowrap;will-change:transform;-webkit-text-stroke:0.35px #b3b3b3;-webkit-text-stroke:0.1px #b3b3b3;">テクスチャペイント</div>
<div style="position:absolute;left:729.3px;top:3.2px;font-size:11px;line-height:14px;color:#b3b3b3;white-space:nowrap;will-change:transform;-webkit-text-stroke:0.35px #b3b3b3;-webkit-text-stroke:0.1px #b3b3b3;">シェーディング</div>
<div style="position:absolute;left:826.6px;top:3.2px;font-size:11px;line-height:14px;color:#b3b3b3;white-space:nowrap;will-change:transform;-webkit-text-stroke:0.35px #b3b3b3;-webkit-text-stroke:0.1px #b3b3b3;">アニメーション</div>
<div style="position:absolute;left:924px;top:3.2px;font-size:11px;line-height:14px;color:#b3b3b3;white-space:nowrap;will-change:transform;-webkit-text-stroke:0.35px #b3b3b3;-webkit-text-stroke:0.1px #b3b3b3;">レンダリング</div>
<div style="position:absolute;left:1009.8px;top:3.2px;font-size:11px;line-height:14px;color:#b3b3b3;white-space:nowrap;will-change:transform;-webkit-text-stroke:0.35px #b3b3b3;-webkit-text-stroke:0.1px #b3b3b3;">コンポジティング</div>
<div style="position:absolute;left:1116.7px;top:3.2px;font-size:11px;line-height:14px;color:#b3b3b3;white-space:nowrap;will-change:transform;-webkit-text-stroke:0.35px #b3b3b3;-webkit-text-stroke:0.1px #b3b3b3;">ジオメトリノード</div>
<div style="position:absolute;left:1225px;top:3.2px;font-size:11px;line-height:14px;color:#b3b3b3;white-space:nowrap;will-change:transform;-webkit-text-stroke:0.35px #b3b3b3;-webkit-text-stroke:0.1px #b3b3b3;">スクリプト</div>
<div style="position:absolute;left:0px;top:909px;width:1250px;height:33px;background:#181818;border-radius:0px;"></div>
<div style="position:absolute;left:1px;top:911.6px;width:1249px;height:25.4px;background:#303030;border-radius:5px 0 0 0;"></div>
<div style="position:absolute;left:0px;top:937px;width:1250px;height:5px;background:#1d1d1d;border-radius:0px;"></div>
<div style="position:absolute;left:34.8px;top:939.2px;width:23.5px;height:4px;background:#4772b3;border-radius:3px 3px 0 0;"></div>
<div style="position:absolute;left:8.4px;top:915.2px;width:31.2px;height:19.2px;background:#282828;border-radius:4px;box-shadow:inset 0 0 0 1px #3a3a3a;"></div>
<svg width="16" height="16" viewBox="0 0 16 16" style="position:absolute;left:12px;top:917px;"><circle cx="8" cy="8" r="7" fill="#e6e6e6"/><polyline points="9.5,4.5 6,8 9.5,11.5" fill="none" stroke="#282828" stroke-width="2"/></svg>
<svg width="8" height="5" viewBox="0 0 8 5" style="position:absolute;left:29.0px;top:923px;"><polyline points="0.8,0.8 4,4 7.2,0.8" fill="none" stroke="#cfcfcf" stroke-width="1.3"/></svg>
<div style="position:absolute;left:45.6px;top:915.2px;width:126px;height:19.2px;background:#282828;border-radius:4px;box-shadow:inset 0 0 0 1px #3a3a3a;"></div>
<div style="position:absolute;left:91px;top:915.2px;width:1px;height:19.2px;background:#3a3a3a;border-radius:0px;"></div>
<div style="position:absolute;left:52.8px;top:917.5px;font-size:11px;line-height:14px;color:#e6e6e6;white-space:nowrap;will-change:transform;-webkit-text-stroke:0.35px #e6e6e6;">再生</div>
<svg width="8" height="5" viewBox="0 0 8 5" style="position:absolute;left:81.6px;top:923px;"><polyline points="0.8,0.8 4,4 7.2,0.8" fill="none" stroke="#cfcfcf" stroke-width="1.3"/></svg>
<div style="position:absolute;left:99.6px;top:917.5px;font-size:11px;line-height:14px;color:#e6e6e6;white-space:nowrap;will-change:transform;-webkit-text-stroke:0.35px #e6e6e6;">キーイング</div>
<svg width="8" height="5" viewBox="0 0 8 5" style="position:absolute;left:162.0px;top:923px;"><polyline points="0.8,0.8 4,4 7.2,0.8" fill="none" stroke="#cfcfcf" stroke-width="1.3"/></svg>
<div style="position:absolute;left:181px;top:917.5px;font-size:11px;line-height:14px;color:#e6e6e6;white-space:nowrap;will-change:transform;-webkit-text-stroke:0.35px #e6e6e6;">ビュー</div>
<div style="position:absolute;left:229px;top:917.5px;font-size:11px;line-height:14px;color:#e6e6e6;white-space:nowrap;will-change:transform;-webkit-text-stroke:0.35px #e6e6e6;">マーカー</div>
<div style="position:absolute;left:536px;top:915.7px;width:37.6px;height:18.2px;background:#282828;border-radius:4px;"></div>
<div style="position:absolute;left:536px;top:915.7px;width:18.6px;height:18.2px;background:#545454;border-radius:4px 0 0 4px;"></div>
<svg width="15" height="15" viewBox="0 0 15 15" style="position:absolute;left:538px;top:917px;"><circle cx="7.5" cy="7.7" r="5.2" fill="none" stroke="#ccc" stroke-width="1.1"/></svg>
<svg width="8" height="5" viewBox="0 0 8 5" style="position:absolute;left:561.3px;top:923px;"><polyline points="0.8,0.8 4,4 7.2,0.8" fill="none" stroke="#666" stroke-width="1.3"/></svg>
<div style="position:absolute;left:580.8px;top:915.7px;width:118.1px;height:18.2px;background:#545454;border-radius:4px;"></div>
<svg width="118" height="18" viewBox="0 0 118 18" style="position:absolute;left:580.8px;top:915.7px;"><g stroke="#3d3d3d"><line x1="18.5" y1="0" x2="18.5" y2="18"/><line x1="38.7" y1="0" x2="38.7" y2="18"/><line x1="58.9" y1="0" x2="58.9" y2="18"/><line x1="78.4" y1="0" x2="78.4" y2="18"/><line x1="98.9" y1="0" x2="98.9" y2="18"/></g><g fill="#e6e6e6"><rect x="4" y="4.5" width="2" height="9"/><path d="M7.5,9 L13,4.5 L13,13.5 Z"/><path d="M21,9 L24.5,5 L28,9 L24.5,13 Z"/><path d="M29.5,9 L34,5 L34,13 Z"/><path d="M43,9 L51,3.5 L51,14.5 Z"/><path d="M72,9 L64,3.5 L64,14.5 Z"/><path d="M86.5,9 L82,5 L82,13 Z"/><path d="M88,9 L91.5,5 L95,9 L91.5,13 Z"/><path d="M111,9 L105.5,4.5 L105.5,13.5 Z"/><rect x="112" y="4.5" width="2" height="9"/></g></svg>
<div style="position:absolute;left:975px;top:915.7px;width:73.2px;height:18.3px;background:#545454;border-radius:4px;"></div>
<div style="position:absolute;left:1006.5px;top:917.5px;font-size:11px;line-height:14px;color:#e6e6e6;white-space:nowrap;will-change:transform;-webkit-text-stroke:0.35px #e6e6e6;">1</div>
<div style="position:absolute;left:1054.7px;top:915.7px;width:192.3px;height:18.3px;background:#545454;border-radius:4px;"></div>
<div style="position:absolute;left:1073.5px;top:915.7px;width:1px;height:18.3px;background:#3d3d3d;border-radius:0px;"></div>
<div style="position:absolute;left:1160.5px;top:915.7px;width:1px;height:18.3px;background:#3d3d3d;border-radius:0px;"></div>
<svg width="17" height="17" viewBox="0 0 17 17" style="position:absolute;left:1056px;top:916.5px;"><circle cx="8.5" cy="9.5" r="5.8" fill="none" stroke="#ddd" stroke-width="1.2"/><path d="M8.5,9.5 L8.5,6.5 M6.5,2.5 h4 M13,4.5 l1.5,-1.5" stroke="#ddd" stroke-width="1.2"/></svg>
<div style="position:absolute;left:1089.5px;top:917.5px;font-size:11px;line-height:14px;color:#e6e6e6;white-space:nowrap;will-change:transform;-webkit-text-stroke:0.35px #e6e6e6;">開始</div>
<div style="position:absolute;left:1141px;top:917.5px;font-size:11px;line-height:14px;color:#e6e6e6;white-space:nowrap;will-change:transform;-webkit-text-stroke:0.35px #e6e6e6;">1</div>
<div style="position:absolute;left:1175.8px;top:917.5px;font-size:11px;line-height:14px;color:#e6e6e6;white-space:nowrap;will-change:transform;-webkit-text-stroke:0.35px #e6e6e6;">終了</div>
<div style="position:absolute;left:1213.6px;top:917.5px;font-size:11px;line-height:14px;color:#e6e6e6;white-space:nowrap;will-change:transform;-webkit-text-stroke:0.35px #e6e6e6;">250</div>
</body></html>
